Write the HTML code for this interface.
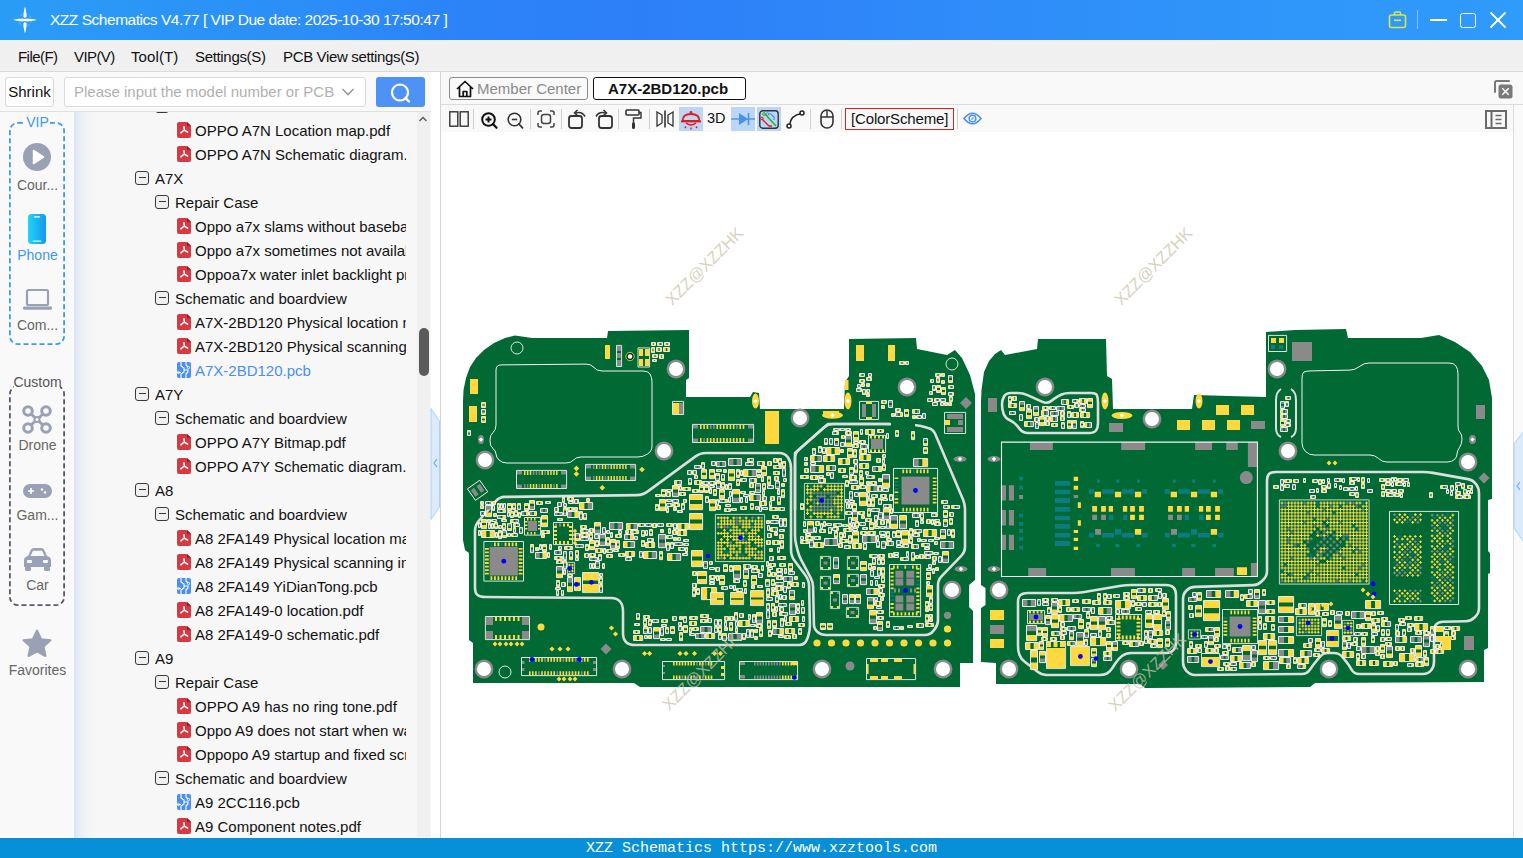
<!DOCTYPE html>
<html><head><meta charset="utf-8"><style>
*{margin:0;padding:0;box-sizing:border-box}
html,body{width:1523px;height:858px;overflow:hidden;background:#fff;font-family:"Liberation Sans",sans-serif;position:relative}
.a{position:absolute}
svg{position:absolute;overflow:visible}
#title{left:0;top:0;width:1523px;height:40px;background:linear-gradient(90deg,#2a9df6 0%,#2b8ff7 18%,#2c82f8 32%,#2d7ff8 42%,#2e86f9 55%,#2f8ef9 68%,#2f96fa 85%,#2f9bfb 100%)}
#ttl{left:50px;top:10.5px;color:#fff;font-size:15.5px;white-space:nowrap;letter-spacing:-0.47px}
#menu{left:0;top:40px;width:1523px;height:32px;background:#f0f0f0;border-bottom:1px solid #d9d9d9}
#menu span{position:absolute;top:8px;font-size:15px;color:#111;white-space:nowrap}
#leftp{left:0;top:72px;width:431px;height:766px;background:#f9f9f9}
#srch{left:0;top:72px;width:431px;height:40px;background:#f9f9f9;border-bottom:1px solid #e0e0e0}
.btn{position:absolute;background:#fff;border:1px solid #dadada;border-radius:3px}
.lbl{position:absolute;font-size:14px;color:#666;white-space:nowrap;text-align:center;width:75px;left:0}
#tree{left:74px;top:112px;width:357px;height:726px;overflow:hidden;background:linear-gradient(90deg,#dbe3f2 0px,#e9eef6 6px,#f3f4f7 14px,#f7f7f7 24px,#f7f7f7 100%)}
.r{position:absolute;height:24px;line-height:24px;font-size:15px;color:#111;white-space:nowrap;overflow:hidden}
.bx{position:absolute;width:14px;height:14px;border:1.4px solid #3a3a3a;border-radius:3px;background:#efefef}
.bx:after{content:"";position:absolute;left:2.5px;width:7px;top:5.2px;height:1.3px;background:#3a3a3a}
#status{left:0;top:838px;width:1523px;height:20px;background:#0790d8;color:#fff;font-family:"Liberation Mono",monospace;font-size:15px;line-height:22px;white-space:nowrap}
#tabs{left:441px;top:72px;width:1082px;height:33px;background:#f9f9f9;border-bottom:1px solid #dcdcdc}
#tools{left:441px;top:105px;width:1072px;height:27px;background:#f9f9f9}
.tab{position:absolute;top:5px;height:23px;border-radius:3px;font-size:15px;white-space:nowrap;line-height:21px}
.sep{position:absolute;top:4px;width:1px;height:20px;background:#d0d0d0}
.hl{position:absolute;top:2px;height:24px;background:#bcd6f7}
#tools > *, #tabs > * {margin-left:-1px}

</style></head><body>
<div id="title" class="a">
  <svg style="left:10px;top:2.7px" width="30" height="32" viewBox="0 0 30 32">
    <path d="M15 3.5 C16 7 16.5 10 16.6 13.8 L15 15 L13.4 13.8 C13.5 10 14 7 15 3.5Z M15 30.5 C14 27 13.5 24 13.4 20.2 L15 19 L16.6 20.2 C16.5 24 16 27 15 30.5Z M3 17 C7 16.2 10 15.8 13.4 15.6 L14.5 17 L13.4 18.4 C10 18.2 7 17.8 3 17Z M27 17 C23 17.8 20 18.2 16.6 18.4 L15.5 17 L16.6 15.6 C20 15.8 23 16.2 27 17Z" fill="#fff"/>
    <circle cx="15" cy="17" r="6.2" fill="none" stroke="rgba(255,255,255,.4)" stroke-width="0.9" stroke-dasharray="2.5 2.2"/>
    <circle cx="15" cy="17" r="1.3" fill="#fff"/>
  </svg>
  <div id="ttl" class="a">XZZ Schematics V4.77 [ VIP Due date: 2025-10-30 17:50:47 ]</div>
  <svg style="left:1385px;top:8px" width="26" height="24" viewBox="0 0 26 24">
    <rect x="4.5" y="7" width="16" height="12.5" rx="2" fill="none" stroke="#d7e84a" stroke-width="1.6"/>
    <path d="M9.5 7 V5 Q9.5 4 10.5 4 H14.5 Q15.5 4 15.5 5 V7" fill="none" stroke="#d7e84a" stroke-width="1.6"/>
    <line x1="9" y1="12.3" x2="16" y2="12.3" stroke="#d7e84a" stroke-width="1.6"/>
  </svg>
  <div class="a" style="left:1417px;top:10px;width:1px;height:19px;background:rgba(255,255,255,.45)"></div>
  <div class="a" style="left:1430px;top:19px;width:17px;height:2px;background:#fff"></div>
  <div class="a" style="left:1460px;top:12.5px;width:16px;height:15px;border:1.8px solid #fff;border-radius:2.5px"></div>
  <svg style="left:1489px;top:11px" width="18" height="18" viewBox="0 0 18 18"><path d="M1.5 1.5 L16.5 16.5 M16.5 1.5 L1.5 16.5" stroke="#fff" stroke-width="1.8"/></svg>
</div>
<div id="menu" class="a">
  <span style="left:18px;letter-spacing:-0.55px">File(F)</span>
  <span style="left:74px;letter-spacing:-0.6px">VIP(V)</span>
  <span style="left:131px;letter-spacing:0.1px">Tool(T)</span>
  <span style="left:195px;letter-spacing:-0.33px">Settings(S)</span>
  <span style="left:283px;letter-spacing:-0.35px">PCB View settings(S)</span>
</div>
<div id="leftp" class="a"></div>
<div id="srch" class="a">
  <div class="btn" style="left:5px;top:5px;width:49px;height:30px;font-size:15px;line-height:28px;text-align:center;color:#111">Shrink</div>
  <div class="btn" style="left:64px;top:5px;width:302px;height:30px;font-size:15px;line-height:28px;color:#b0b0b0;padding-left:9px;white-space:nowrap">Please input the model number or PCB</div>
  <svg style="left:341px;top:15px" width="14" height="10" viewBox="0 0 14 10"><path d="M1.5 2 L7 7.5 L12.5 2" fill="none" stroke="#999" stroke-width="1.6"/></svg>
  <div class="a" style="left:376px;top:5px;width:49px;height:30px;background:#4f92f5;border-radius:3px"></div>
  <svg style="left:389px;top:10px" width="24" height="22" viewBox="0 0 24 22"><circle cx="11" cy="10.5" r="8" fill="none" stroke="#fff" stroke-width="2.2"/><path d="M16.5 16 L20 19.5" stroke="#fff" stroke-width="2.4" stroke-linecap="round"/></svg>
</div>
<!-- sidebar -->
<svg style="left:0;top:0" width="75" height="858"><rect x="9.9" y="122.9" width="54.2" height="221.2" rx="8" fill="none" stroke="#3c9af2" stroke-width="1.8" stroke-dasharray="5 3"/><rect x="9.9" y="385.9" width="54.2" height="219.2" rx="8" fill="none" stroke="#555a66" stroke-width="1.8" stroke-dasharray="5 3"/></svg>
<div class="a" style="left:25px;top:115px;width:25px;height:15px;background:#f9f9f9"></div><div class="a" style="left:22px;top:113px;width:31px;height:18px;color:#3c9af2;font-size:14px;text-align:center;line-height:18px">VIP</div>
<svg style="left:23px;top:143px" width="28" height="28" viewBox="0 0 28 28"><circle cx="14" cy="14" r="14" fill="#9aa1b4"/><path d="M10.5 7.5 L20.5 14 L10.5 20.5Z" fill="#fff" stroke="#fff" stroke-width="1.5" stroke-linejoin="round"/></svg>
<div class="lbl" style="top:177px">Cour...</div>
<svg style="left:28px;top:214px" width="18" height="30" viewBox="0 0 18 30"><defs><linearGradient id="ph" x1="0" y1="0" x2="1" y2="0"><stop offset="0" stop-color="#22d4f5"/><stop offset="1" stop-color="#1597f0"/></linearGradient></defs><rect x="0" y="0" width="18" height="30" rx="3.5" fill="url(#ph)"/><rect x="6" y="2.2" width="6" height="1.4" rx=".7" fill="#fff"/><rect x="4.5" y="26.5" width="9" height="1.2" rx=".6" fill="#bff"/></svg>
<div class="lbl" style="top:247px;color:#3c9af2">Phone</div>
<svg style="left:23px;top:289px" width="29" height="22" viewBox="0 0 29 22"><rect x="4" y="1" width="21" height="15" rx="1.5" fill="none" stroke="#9aa1b4" stroke-width="2.2"/><rect x="0" y="17.5" width="29" height="3.2" rx="1.2" fill="#9aa1b4"/></svg>
<div class="lbl" style="top:317px">Com...</div>
<div class="a" style="left:14px;top:378px;width:46px;height:12px;background:#f9f9f9"></div>
<div class="lbl" style="top:374px;color:#555">Custom</div>
<svg style="left:22px;top:405px" width="30" height="29" viewBox="0 0 30 29"><g fill="none" stroke="#9aa1b4" stroke-width="3"><circle cx="6" cy="6" r="4.3"/><circle cx="24" cy="6" r="4.3"/><circle cx="6" cy="23" r="4.3"/><circle cx="24" cy="23" r="4.3"/><path d="M8.5 8.5 L21.5 20.5 M21.5 8.5 L8.5 20.5"/></g><circle cx="15" cy="14.5" r="3.5" fill="#9aa1b4"/><circle cx="15" cy="14.5" r="1.5" fill="#f9f9f9"/></svg>
<div class="lbl" style="top:437px">Drone</div>
<svg style="left:23px;top:484px" width="29" height="14" viewBox="0 0 29 14"><rect x="0" y="0" width="29" height="14" rx="7" fill="#9aa1b4"/><path d="M5 7 H11 M8 4 V10" stroke="#fff" stroke-width="1.6"/><circle cx="19" cy="5.5" r="1.2" fill="#fff"/><circle cx="22" cy="8.5" r="1.2" fill="#fff"/></svg>
<div class="lbl" style="top:507px">Gam...</div>
<svg style="left:23px;top:547px" width="29" height="25" viewBox="0 0 29 25"><path d="M5 9 L8 2.5 Q9 1 11 1 H18 Q20 1 21 2.5 L24 9 Q28 10 28 13 V20 H1 V13 Q1 10 5 9Z" fill="#9aa1b4"/><path d="M7.5 9 L10 3.8 H19 L21.5 9Z" fill="#f9f9f9"/><rect x="4" y="13" width="5" height="3" rx="1" fill="#f9f9f9"/><rect x="20" y="13" width="5" height="3" rx="1" fill="#f9f9f9"/><rect x="2" y="19" width="6" height="5" rx="1.5" fill="#9aa1b4"/><rect x="21" y="19" width="6" height="5" rx="1.5" fill="#9aa1b4"/></svg>
<div class="lbl" style="top:577px">Car</div>
<svg style="left:22px;top:629px" width="30" height="29" viewBox="0 0 30 29"><path d="M15 1.5 L19.2 10.2 L28.5 11.2 L21.6 17.6 L23.5 27 L15 22.3 L6.5 27 L8.4 17.6 L1.5 11.2 L10.8 10.2Z" fill="#9aa1b4" stroke="#9aa1b4" stroke-width="2" stroke-linejoin="round"/></svg>
<div class="lbl" style="top:662px">Favorites</div>
<div id="status" class="a"><span style="position:absolute;left:586px;top:0">XZZ Schematics https://www.xzztools.com</span></div>

<div id="tree" class="a">
<div class="bx" style="left:81px;top:-13px"></div>
<div class="r" style="left:101px;top:-17px;width:231px;color:#111">Schematic and boardview</div>
<svg style="left:103px;top:10px" width="14" height="16" viewBox="0 0 14 16"><path d="M2 0 H10 L14 4 V14 Q14 16 12 16 H2 Q0 16 0 14 V2 Q0 0 2 0Z" fill="#d53a44"/><path d="M10 0 L14 4 H11 Q10 4 10 3Z" fill="#8e1d26"/><path d="M7 4.8 L7.4 8.2 M7.2 8 L3.8 10.8 M7.2 8 L10.6 10.2" stroke="#fff" stroke-width="1.5" stroke-linecap="round" fill="none"/></svg>
<div class="r" style="left:121px;top:7px;width:211px;color:#111">OPPO A7N Location map.pdf</div>
<svg style="left:103px;top:34px" width="14" height="16" viewBox="0 0 14 16"><path d="M2 0 H10 L14 4 V14 Q14 16 12 16 H2 Q0 16 0 14 V2 Q0 0 2 0Z" fill="#d53a44"/><path d="M10 0 L14 4 H11 Q10 4 10 3Z" fill="#8e1d26"/><path d="M7 4.8 L7.4 8.2 M7.2 8 L3.8 10.8 M7.2 8 L10.6 10.2" stroke="#fff" stroke-width="1.5" stroke-linecap="round" fill="none"/></svg>
<div class="r" style="left:121px;top:31px;width:211px;color:#111">OPPO A7N Schematic diagram.pdf</div>
<div class="bx" style="left:61px;top:59px"></div>
<div class="r" style="left:81px;top:55px;width:251px;color:#111">A7X</div>
<div class="bx" style="left:81px;top:83px"></div>
<div class="r" style="left:101px;top:79px;width:231px;color:#111">Repair Case</div>
<svg style="left:103px;top:106px" width="14" height="16" viewBox="0 0 14 16"><path d="M2 0 H10 L14 4 V14 Q14 16 12 16 H2 Q0 16 0 14 V2 Q0 0 2 0Z" fill="#d53a44"/><path d="M10 0 L14 4 H11 Q10 4 10 3Z" fill="#8e1d26"/><path d="M7 4.8 L7.4 8.2 M7.2 8 L3.8 10.8 M7.2 8 L10.6 10.2" stroke="#fff" stroke-width="1.5" stroke-linecap="round" fill="none"/></svg>
<div class="r" style="left:121px;top:103px;width:211px;color:#111">Oppo a7x slams without baseband</div>
<svg style="left:103px;top:130px" width="14" height="16" viewBox="0 0 14 16"><path d="M2 0 H10 L14 4 V14 Q14 16 12 16 H2 Q0 16 0 14 V2 Q0 0 2 0Z" fill="#d53a44"/><path d="M10 0 L14 4 H11 Q10 4 10 3Z" fill="#8e1d26"/><path d="M7 4.8 L7.4 8.2 M7.2 8 L3.8 10.8 M7.2 8 L10.6 10.2" stroke="#fff" stroke-width="1.5" stroke-linecap="round" fill="none"/></svg>
<div class="r" style="left:121px;top:127px;width:211px;color:#111">Oppo a7x sometimes not available</div>
<svg style="left:103px;top:154px" width="14" height="16" viewBox="0 0 14 16"><path d="M2 0 H10 L14 4 V14 Q14 16 12 16 H2 Q0 16 0 14 V2 Q0 0 2 0Z" fill="#d53a44"/><path d="M10 0 L14 4 H11 Q10 4 10 3Z" fill="#8e1d26"/><path d="M7 4.8 L7.4 8.2 M7.2 8 L3.8 10.8 M7.2 8 L10.6 10.2" stroke="#fff" stroke-width="1.5" stroke-linecap="round" fill="none"/></svg>
<div class="r" style="left:121px;top:151px;width:211px;color:#111">Oppoa7x water inlet backlight problem</div>
<div class="bx" style="left:81px;top:179px"></div>
<div class="r" style="left:101px;top:175px;width:231px;color:#111">Schematic and boardview</div>
<svg style="left:103px;top:202px" width="14" height="16" viewBox="0 0 14 16"><path d="M2 0 H10 L14 4 V14 Q14 16 12 16 H2 Q0 16 0 14 V2 Q0 0 2 0Z" fill="#d53a44"/><path d="M10 0 L14 4 H11 Q10 4 10 3Z" fill="#8e1d26"/><path d="M7 4.8 L7.4 8.2 M7.2 8 L3.8 10.8 M7.2 8 L10.6 10.2" stroke="#fff" stroke-width="1.5" stroke-linecap="round" fill="none"/></svg>
<div class="r" style="left:121px;top:199px;width:211px;color:#111">A7X-2BD120 Physical location map.pdf</div>
<svg style="left:103px;top:226px" width="14" height="16" viewBox="0 0 14 16"><path d="M2 0 H10 L14 4 V14 Q14 16 12 16 H2 Q0 16 0 14 V2 Q0 0 2 0Z" fill="#d53a44"/><path d="M10 0 L14 4 H11 Q10 4 10 3Z" fill="#8e1d26"/><path d="M7 4.8 L7.4 8.2 M7.2 8 L3.8 10.8 M7.2 8 L10.6 10.2" stroke="#fff" stroke-width="1.5" stroke-linecap="round" fill="none"/></svg>
<div class="r" style="left:121px;top:223px;width:211px;color:#111">A7X-2BD120 Physical scanning image.pdf</div>
<svg style="left:103px;top:250px" width="14" height="16" viewBox="0 0 14 16"><rect x="0" y="0" width="14" height="16" rx="2" fill="#4a8ff5"/><path d="M4 0 V4 L7 6 V10 L4 12 V16 M9 0 V3 L11 5 M1 10.5 H4 M7 8 H11 V10 L9 12 V16" stroke="#fff" stroke-width="1.1" fill="none"/><circle cx="11.5" cy="5.5" r="1.1" fill="none" stroke="#fff" stroke-width=".9"/><circle cx="1.5" cy="10.5" r="1.1" fill="none" stroke="#fff" stroke-width=".9"/></svg>
<div class="r" style="left:121px;top:247px;width:211px;color:#4a8ff5">A7X-2BD120.pcb</div>
<div class="bx" style="left:61px;top:275px"></div>
<div class="r" style="left:81px;top:271px;width:251px;color:#111">A7Y</div>
<div class="bx" style="left:81px;top:299px"></div>
<div class="r" style="left:101px;top:295px;width:231px;color:#111">Schematic and boardview</div>
<svg style="left:103px;top:322px" width="14" height="16" viewBox="0 0 14 16"><path d="M2 0 H10 L14 4 V14 Q14 16 12 16 H2 Q0 16 0 14 V2 Q0 0 2 0Z" fill="#d53a44"/><path d="M10 0 L14 4 H11 Q10 4 10 3Z" fill="#8e1d26"/><path d="M7 4.8 L7.4 8.2 M7.2 8 L3.8 10.8 M7.2 8 L10.6 10.2" stroke="#fff" stroke-width="1.5" stroke-linecap="round" fill="none"/></svg>
<div class="r" style="left:121px;top:319px;width:211px;color:#111">OPPO A7Y Bitmap.pdf</div>
<svg style="left:103px;top:346px" width="14" height="16" viewBox="0 0 14 16"><path d="M2 0 H10 L14 4 V14 Q14 16 12 16 H2 Q0 16 0 14 V2 Q0 0 2 0Z" fill="#d53a44"/><path d="M10 0 L14 4 H11 Q10 4 10 3Z" fill="#8e1d26"/><path d="M7 4.8 L7.4 8.2 M7.2 8 L3.8 10.8 M7.2 8 L10.6 10.2" stroke="#fff" stroke-width="1.5" stroke-linecap="round" fill="none"/></svg>
<div class="r" style="left:121px;top:343px;width:211px;color:#111">OPPO A7Y Schematic diagram.pdf</div>
<div class="bx" style="left:61px;top:371px"></div>
<div class="r" style="left:81px;top:367px;width:251px;color:#111">A8</div>
<div class="bx" style="left:81px;top:395px"></div>
<div class="r" style="left:101px;top:391px;width:231px;color:#111">Schematic and boardview</div>
<svg style="left:103px;top:418px" width="14" height="16" viewBox="0 0 14 16"><path d="M2 0 H10 L14 4 V14 Q14 16 12 16 H2 Q0 16 0 14 V2 Q0 0 2 0Z" fill="#d53a44"/><path d="M10 0 L14 4 H11 Q10 4 10 3Z" fill="#8e1d26"/><path d="M7 4.8 L7.4 8.2 M7.2 8 L3.8 10.8 M7.2 8 L10.6 10.2" stroke="#fff" stroke-width="1.5" stroke-linecap="round" fill="none"/></svg>
<div class="r" style="left:121px;top:415px;width:211px;color:#111">A8 2FA149 Physical location map.pdf</div>
<svg style="left:103px;top:442px" width="14" height="16" viewBox="0 0 14 16"><path d="M2 0 H10 L14 4 V14 Q14 16 12 16 H2 Q0 16 0 14 V2 Q0 0 2 0Z" fill="#d53a44"/><path d="M10 0 L14 4 H11 Q10 4 10 3Z" fill="#8e1d26"/><path d="M7 4.8 L7.4 8.2 M7.2 8 L3.8 10.8 M7.2 8 L10.6 10.2" stroke="#fff" stroke-width="1.5" stroke-linecap="round" fill="none"/></svg>
<div class="r" style="left:121px;top:439px;width:211px;color:#111">A8 2FA149 Physical scanning image.pdf</div>
<svg style="left:103px;top:466px" width="14" height="16" viewBox="0 0 14 16"><rect x="0" y="0" width="14" height="16" rx="2" fill="#4a8ff5"/><path d="M4 0 V4 L7 6 V10 L4 12 V16 M9 0 V3 L11 5 M1 10.5 H4 M7 8 H11 V10 L9 12 V16" stroke="#fff" stroke-width="1.1" fill="none"/><circle cx="11.5" cy="5.5" r="1.1" fill="none" stroke="#fff" stroke-width=".9"/><circle cx="1.5" cy="10.5" r="1.1" fill="none" stroke="#fff" stroke-width=".9"/></svg>
<div class="r" style="left:121px;top:463px;width:211px;color:#111">A8 2FA149 YiDianTong.pcb</div>
<svg style="left:103px;top:490px" width="14" height="16" viewBox="0 0 14 16"><path d="M2 0 H10 L14 4 V14 Q14 16 12 16 H2 Q0 16 0 14 V2 Q0 0 2 0Z" fill="#d53a44"/><path d="M10 0 L14 4 H11 Q10 4 10 3Z" fill="#8e1d26"/><path d="M7 4.8 L7.4 8.2 M7.2 8 L3.8 10.8 M7.2 8 L10.6 10.2" stroke="#fff" stroke-width="1.5" stroke-linecap="round" fill="none"/></svg>
<div class="r" style="left:121px;top:487px;width:211px;color:#111">A8 2FA149-0 location.pdf</div>
<svg style="left:103px;top:514px" width="14" height="16" viewBox="0 0 14 16"><path d="M2 0 H10 L14 4 V14 Q14 16 12 16 H2 Q0 16 0 14 V2 Q0 0 2 0Z" fill="#d53a44"/><path d="M10 0 L14 4 H11 Q10 4 10 3Z" fill="#8e1d26"/><path d="M7 4.8 L7.4 8.2 M7.2 8 L3.8 10.8 M7.2 8 L10.6 10.2" stroke="#fff" stroke-width="1.5" stroke-linecap="round" fill="none"/></svg>
<div class="r" style="left:121px;top:511px;width:211px;color:#111">A8 2FA149-0 schematic.pdf</div>
<div class="bx" style="left:61px;top:539px"></div>
<div class="r" style="left:81px;top:535px;width:251px;color:#111">A9</div>
<div class="bx" style="left:81px;top:563px"></div>
<div class="r" style="left:101px;top:559px;width:231px;color:#111">Repair Case</div>
<svg style="left:103px;top:586px" width="14" height="16" viewBox="0 0 14 16"><path d="M2 0 H10 L14 4 V14 Q14 16 12 16 H2 Q0 16 0 14 V2 Q0 0 2 0Z" fill="#d53a44"/><path d="M10 0 L14 4 H11 Q10 4 10 3Z" fill="#8e1d26"/><path d="M7 4.8 L7.4 8.2 M7.2 8 L3.8 10.8 M7.2 8 L10.6 10.2" stroke="#fff" stroke-width="1.5" stroke-linecap="round" fill="none"/></svg>
<div class="r" style="left:121px;top:583px;width:211px;color:#111">OPPO A9 has no ring tone.pdf</div>
<svg style="left:103px;top:610px" width="14" height="16" viewBox="0 0 14 16"><path d="M2 0 H10 L14 4 V14 Q14 16 12 16 H2 Q0 16 0 14 V2 Q0 0 2 0Z" fill="#d53a44"/><path d="M10 0 L14 4 H11 Q10 4 10 3Z" fill="#8e1d26"/><path d="M7 4.8 L7.4 8.2 M7.2 8 L3.8 10.8 M7.2 8 L10.6 10.2" stroke="#fff" stroke-width="1.5" stroke-linecap="round" fill="none"/></svg>
<div class="r" style="left:121px;top:607px;width:211px;color:#111">Oppo A9 does not start when water</div>
<svg style="left:103px;top:634px" width="14" height="16" viewBox="0 0 14 16"><path d="M2 0 H10 L14 4 V14 Q14 16 12 16 H2 Q0 16 0 14 V2 Q0 0 2 0Z" fill="#d53a44"/><path d="M10 0 L14 4 H11 Q10 4 10 3Z" fill="#8e1d26"/><path d="M7 4.8 L7.4 8.2 M7.2 8 L3.8 10.8 M7.2 8 L10.6 10.2" stroke="#fff" stroke-width="1.5" stroke-linecap="round" fill="none"/></svg>
<div class="r" style="left:121px;top:631px;width:211px;color:#111">Oppopo A9 startup and fixed screen</div>
<div class="bx" style="left:81px;top:659px"></div>
<div class="r" style="left:101px;top:655px;width:231px;color:#111">Schematic and boardview</div>
<svg style="left:103px;top:682px" width="14" height="16" viewBox="0 0 14 16"><rect x="0" y="0" width="14" height="16" rx="2" fill="#4a8ff5"/><path d="M4 0 V4 L7 6 V10 L4 12 V16 M9 0 V3 L11 5 M1 10.5 H4 M7 8 H11 V10 L9 12 V16" stroke="#fff" stroke-width="1.1" fill="none"/><circle cx="11.5" cy="5.5" r="1.1" fill="none" stroke="#fff" stroke-width=".9"/><circle cx="1.5" cy="10.5" r="1.1" fill="none" stroke="#fff" stroke-width=".9"/></svg>
<div class="r" style="left:121px;top:679px;width:211px;color:#111">A9 2CC116.pcb</div>
<svg style="left:103px;top:706px" width="14" height="16" viewBox="0 0 14 16"><path d="M2 0 H10 L14 4 V14 Q14 16 12 16 H2 Q0 16 0 14 V2 Q0 0 2 0Z" fill="#d53a44"/><path d="M10 0 L14 4 H11 Q10 4 10 3Z" fill="#8e1d26"/><path d="M7 4.8 L7.4 8.2 M7.2 8 L3.8 10.8 M7.2 8 L10.6 10.2" stroke="#fff" stroke-width="1.5" stroke-linecap="round" fill="none"/></svg>
<div class="r" style="left:121px;top:703px;width:211px;color:#111">A9 Component notes.pdf</div>
<div class="a" style="left:343px;top:0;width:13px;height:725px;background:#f0f0f0"></div>
<svg style="left:344px;top:3px" width="10" height="8" viewBox="0 0 10 8"><path d="M1.5 6 L5 2.5 L8.5 6" fill="none" stroke="#555" stroke-width="1.3"/></svg>
<div class="a" style="left:345px;top:216px;width:10px;height:48px;background:#5a5a5a;border-radius:5px"></div>
</div>
<!-- gap column and handle -->
<div class="a" style="left:431px;top:72px;width:9px;height:766px;background:#fff"></div>
<div class="a" style="left:440px;top:72px;width:1px;height:766px;background:#d4d4d4"></div>
<svg style="left:430px;top:408px" width="11" height="112" viewBox="0 0 11 112"><path d="M1 0.5 L9.5 13 V99 L1 111.5Z" fill="#dcebfc" stroke="#a9d2fa" stroke-width="1"/><path d="M7 51 L4 55 L7 59" fill="none" stroke="#6aaef5" stroke-width="1.2"/></svg>
<div id="tabs" class="a">
  <div class="tab" style="left:9px;width:139px;border:1px solid #8a8a8a;color:#8a8a8a;background:#f9f9f9"></div>
  <svg style="left:15px;top:8px" width="20" height="18" viewBox="0 0 20 18"><path d="M2 9 L10 1.5 L18 9 M4.5 7 V16.5 H15.5 V7 M8.2 16.5 V11.5 H11.8 V16.5" fill="none" stroke="#111" stroke-width="1.7" stroke-linejoin="round"/></svg>
  <div class="a" style="left:37px;top:8px;font-size:15px;color:#8a8a8a;white-space:nowrap">Member Center</div>
  <div class="tab" style="left:153px;width:153px;border:1.3px solid #111;background:#fff"></div>
  <div class="a" style="left:168px;top:8px;font-size:15px;font-weight:bold;color:#111;white-space:nowrap">A7X-2BD120.pcb</div>
  <svg style="left:1054px;top:8px" width="19" height="19" viewBox="0 0 19 19"><path d="M1 12 V2.5 Q1 1 2.5 1 H15" fill="none" stroke="#7a7a7a" stroke-width="2" stroke-linecap="round"/><rect x="4.5" y="4.5" width="14" height="14" rx="2.5" fill="#7a7a7a"/><path d="M8.3 8.3 L14.7 14.7 M14.7 8.3 L8.3 14.7" stroke="#fff" stroke-width="1.5"/></svg>
</div>
<div class="a" style="left:1513px;top:105px;width:1px;height:733px;background:#dcdcdc"></div>
<div class="a" style="left:1514px;top:105px;width:9px;height:733px;background:#fafafa"></div>
<svg style="left:1513px;top:431px" width="11" height="111" viewBox="0 0 11 111"><path d="M10.5 0.5 L1 13 V97 L10.5 110.5" fill="#dcebfc" stroke="#a9d2fa" stroke-width="1"/><path d="M7 51 L4 55 L7 59" fill="none" stroke="#6aaef5" stroke-width="1.2"/></svg>
<div id="tools" class="a">
  <svg style="left:9px;top:6px" width="20" height="16" viewBox="0 0 20 16"><rect x="0.8" y="0.8" width="8" height="14.4" fill="none" stroke="#333" stroke-width="1.4"/><rect x="11.2" y="0.8" width="8" height="14.4" fill="none" stroke="#333" stroke-width="1.4"/></svg>
  <div class="sep" style="left:33px"></div>
  <svg style="left:41px;top:7px" width="17" height="18" viewBox="0 0 17 18"><circle cx="7.5" cy="7.5" r="6.3" fill="none" stroke="#111" stroke-width="2"/><path d="M4.5 7.5 H10.5 M7.5 4.5 V10.5" stroke="#111" stroke-width="2"/><path d="M12 12 L15.5 15.8" stroke="#111" stroke-width="2.2" stroke-linecap="round"/></svg>
  <svg style="left:67px;top:7px" width="17" height="18" viewBox="0 0 17 18"><circle cx="7.5" cy="7.5" r="6.3" fill="none" stroke="#333" stroke-width="1.6"/><path d="M4.8 7.5 H10.2" stroke="#333" stroke-width="1.6"/><path d="M12 12 L15.5 15.8" stroke="#333" stroke-width="1.8" stroke-linecap="round"/></svg>
  <div class="sep" style="left:90px"></div>
  <svg style="left:97px;top:5px" width="18" height="18" viewBox="0 0 18 18"><path d="M1 5 V3 Q1 1 3 1 H5 M13 1 H15 Q17 1 17 3 V5 M17 13 V15 Q17 17 15 17 H13 M5 17 H3 Q1 17 1 15 V13" fill="none" stroke="#444" stroke-width="1.5"/><rect x="4.5" y="4.5" width="9" height="9" rx="2.5" fill="none" stroke="#444" stroke-width="1.5"/></svg>
  <div class="sep" style="left:121px"></div>
  <svg style="left:128px;top:3px" width="19" height="21" viewBox="0 0 19 21"><rect x="1" y="8" width="13" height="12" rx="2.5" fill="none" stroke="#333" stroke-width="1.8"/><path d="M7.5 5 Q14 3 17 8.5" fill="none" stroke="#333" stroke-width="1.6"/><path d="M9.5 2 L6.5 5 L9.5 7.5" fill="none" stroke="#333" stroke-width="1.6"/></svg>
  <svg style="left:154px;top:3px" width="19" height="21" viewBox="0 0 19 21"><rect x="5" y="8" width="13" height="12" rx="2.5" fill="none" stroke="#333" stroke-width="1.8"/><path d="M11.5 5 Q5 3 2 8.5" fill="none" stroke="#333" stroke-width="1.6"/><path d="M9.5 2 L12.5 5 L9.5 7.5" fill="none" stroke="#333" stroke-width="1.6"/></svg>
  <div class="sep" style="left:178px"></div>
  <svg style="left:185px;top:4px" width="17" height="21" viewBox="0 0 17 21"><rect x="1" y="1" width="13" height="5" rx="1" fill="none" stroke="#333" stroke-width="1.6"/><path d="M14 3.5 H16 V9 H8.5 V13" fill="none" stroke="#333" stroke-width="1.4"/><rect x="7" y="13" width="3" height="7" rx="1.5" fill="#333"/></svg>
  <div class="sep" style="left:209px"></div>
  <svg style="left:216px;top:5px" width="18" height="18" viewBox="0 0 18 18"><path d="M1 2 L6 5 V13 L1 16Z M17 2 L12 5 V13 L17 16Z" fill="none" stroke="#333" stroke-width="1.3"/><path d="M9 0.5 V17.5" stroke="#333" stroke-width="1.6"/></svg>
  <div class="hl" style="left:239px;width:24px"></div>
  <svg style="left:240px;top:4px" width="22" height="22" viewBox="0 0 22 22"><path d="M2.5 12 Q2.5 5 11 5 Q19.5 5 19.5 12 Z" fill="none" stroke="#e41c1c" stroke-width="1.8"/><path d="M1 12.5 H21" stroke="#e41c1c" stroke-width="1.8"/><circle cx="11" cy="3.5" r="1.4" fill="#e41c1c"/><path d="M6 14 Q11 18 16 14" fill="none" stroke="#e41c1c" stroke-width="1.6"/><path d="M6 17.5 L5 19 M11 18.5 V20.5 M16 17.5 L17 19" stroke="#e41c1c" stroke-width="1.4"/></svg>
  <div class="a" style="left:267px;top:5px;font-size:14.5px;color:#111">3D</div>
  <div class="hl" style="left:291px;width:24px"></div>
  <svg style="left:291px;top:7px" width="24" height="14" viewBox="0 0 24 14"><path d="M0 7 H24" stroke="#4a8ff5" stroke-width="1.4"/><path d="M8 1 L17 7 L8 13Z" fill="#4a8ff5"/><path d="M17.5 1 V13" stroke="#4a8ff5" stroke-width="1.6"/></svg>
  <div class="hl" style="left:317px;width:24px"></div>
  <svg style="left:319px;top:5px" width="20" height="19" viewBox="0 0 20 19"><rect x="0.8" y="0.8" width="18.4" height="17.4" rx="3" fill="none" stroke="#333" stroke-width="1.4"/><path d="M6 4 L17 16" stroke="#1fb51f" stroke-width="1.4"/><path d="M3 9 L10 16 H13" fill="none" stroke="#e41c1c" stroke-width="1.3"/><path d="M9 4 H12 L15 7 V10" fill="none" stroke="#4a8ff5" stroke-width="1.2"/><circle cx="5" cy="4" r="1.4" fill="none" stroke="#1fb51f" stroke-width="1"/><circle cx="3" cy="8.5" r="1.3" fill="none" stroke="#e41c1c" stroke-width="1"/><circle cx="8.5" cy="4" r="1.3" fill="none" stroke="#4a8ff5" stroke-width="1"/></svg>
  <svg style="left:346px;top:5px" width="19" height="19" viewBox="0 0 19 19"><path d="M3.5 15.5 Q4.5 5 15.5 3.5" fill="none" stroke="#222" stroke-width="1.6"/><circle cx="3" cy="16" r="2" fill="#fff" stroke="#222" stroke-width="1.5"/><circle cx="16" cy="3" r="2" fill="#fff" stroke="#222" stroke-width="1.5"/></svg>
  <div class="sep" style="left:370px"></div>
  <svg style="left:380px;top:4px" width="14" height="20" viewBox="0 0 14 20"><rect x="1" y="1" width="12" height="18" rx="6" fill="none" stroke="#333" stroke-width="1.6"/><path d="M1 8 H13 M7 1 V8" stroke="#333" stroke-width="1.4"/></svg>
  <div class="sep" style="left:401px"></div>
  <div class="a" style="left:405px;top:3px;width:109px;height:22px;border:1.5px solid #e02020"></div>
  <div class="a" style="left:411px;top:5px;font-size:15px;color:#111;letter-spacing:-0.15px;white-space:nowrap">[ColorScheme]</div>
  <div class="sep" style="left:517px"></div>
  <svg style="left:523px;top:6px" width="19" height="15" viewBox="0 0 19 15"><path d="M1 7.5 Q9.5 -3 18 7.5 Q9.5 18 1 7.5Z" fill="none" stroke="#4a8ff5" stroke-width="1.6"/><circle cx="9.5" cy="7.5" r="3.3" fill="none" stroke="#4a8ff5" stroke-width="1.5"/><path d="M8.5 8.5 L10.5 6.5" stroke="#4a8ff5" stroke-width="1.2"/></svg>
  <svg style="left:1045px;top:5px" width="22" height="19" viewBox="0 0 22 19"><rect x="1" y="1" width="20" height="17" fill="none" stroke="#6a6a6a" stroke-width="2"/><path d="M6.5 1 V18" stroke="#6a6a6a" stroke-width="2"/><path d="M10.5 5.5 H16.5 M10.5 9.5 H16.5 M10.5 13.5 H16.5" stroke="#6a6a6a" stroke-width="1.6"/></svg>
</div>

<div class="a" style="left:441px;top:132px;width:1072px;height:706px;overflow:hidden"><div class="a" style="left:-441px;top:-132px;width:1523px;height:858px"><svg style="left:0;top:0" width="1523" height="858" viewBox="0 0 1523 858"><path d="M463 402 L463.5 390 L466 378 L470 367 L476 358 L484 350 L494 343 L505 338 L515 335.5 L532 338 L607 338 L608 331 L689 330 L689 378 L686 380 L686 397 L750 397 L753 392 L759 393 L760 409 L844 409 L845 382 L849 376 L849 339 L916 338 L917 349 L947 355 L955 350 L962 358 L970 375 L975 394 L975 580 L969 585 L969 607 L973 611 L973 663 L960 663 L960 687 L640 687 L634 683 L473 683 L473 643 L469 640 L469 553 L465 550 L463 540 Z" fill="#006934"/><path d="M981 402 L981.5 390 L984 372 L989 361 L995 354 L1001 350 L1005 355 L1037 349 L1038 339 L1106 339 L1107 376 L1112 379 L1113 409 L1192 409 L1194 395 L1266 397 L1266 332 L1295 330 L1346 329 L1348 338 L1421 338 L1439 335 L1455 342 L1470 352 L1482 366 L1489 380 L1492 398 L1492 499 L1488 500 L1488 551 L1490 553 L1490 573 L1488 574 L1488 648 L1484 650 L1484 682 L1315 683 L1310 687 L1145 688 L1140 684 L996 684 L996 663 L981 662 L981 608 L985.5 605 L985.5 588 L981 585 Z" fill="#006934"/><path d="M496 370 Q496 365 501 364.9 L586 364.1 Q591 364 594 367.5 L594 367.5 Q597 371 602 371 L643 371 Q648 371 650 374 L650 374 Q652 377 652 382 L652 446 Q652 451 647.8 453.8 L647.2 454.2 Q643 457 638 457 L581 457 Q576 457 573.5 460 L573.5 460 Q571 463 566 463 L507 463 Q502 463 499 460 L499 460 Q496 457 496 454 L496 454 Q496 451 493 448.5 L493 448.5 Q490 446 490 441 L490 440 Q490 435 493 432.5 L493 432.5 Q496 430 496 425 Z" fill="none" stroke="#f4f4f4" stroke-width="1"/><circle cx="517" cy="348" r="6" fill="none" stroke="#f4f4f4" stroke-width="0.9"/><path d="M487 511.5 Q491 507 494.7 502.3 L495.3 501.7 Q499 497 505 496.9 L637 495.1 Q643 495 647.8 491.4 L695.2 456.6 Q700 453 706 453 L779 453 Q785 453 788 457.5 L788 457.5 Q791 462 791 468 L791 550 Q791 556 794.6 560.8 L805.4 575.2 Q809 580 809.1 586 L809.9 625 Q810 631 808 636.7 L807 639.3 Q805 645 799 645 L635 645 Q629 645 626 642 L626 642 Q623 639 623 633 L623 611 Q623 605 620 601.5 L620 601.5 Q617 598 611 598 L486 597 Q480 597 477.5 595 L477.5 595 Q475 593 475 587 L475 531 Q475 525 479 520.5 Z" fill="none" stroke="#dedede" stroke-width="2.6"/><path d="M795 510 L795 453 L828 424 L890 424" fill="none" stroke="#dedede" stroke-width="2.6" stroke-linejoin="round"/><path d="M911 424.8 Q916 425 920.9 426.1 L928.1 427.9 Q933 429 935 433.6 L963 499.4 Q965 504 965 509 L965 547 Q965 552 961.5 555.6 L941.5 576.4 Q938 580 938 585 L938 620 Q938 625 934.9 628.9 L933.1 631.1 Q930 635 925 635 L826 635 Q821 635 817.5 632 L817.5 632 Q814 629 813.9 624 L813.1 587 Q813 582 810.6 577.6 L801.4 560.4 Q799 556 797.8 551.1 L796.2 544.9 Q795 540 795 535 L795 458 Q795 453 798.8 449.7 L824.2 427.3 Q828 424 833 424 L885 424 Q890 424 895 424.2 Z" fill="none" stroke="#dedede" stroke-width="2.6"/><path d="M891 421h24v6h-24z" fill="#006934"/><circle cx="676" cy="369" r="8.2" fill="#fff" stroke="#8a8a8a" stroke-width="2.4"/><circle cx="485" cy="460" r="8.2" fill="#fff" stroke="#8a8a8a" stroke-width="2.4"/><circle cx="664" cy="451" r="8.2" fill="#fff" stroke="#8a8a8a" stroke-width="2.4"/><circle cx="800" cy="418" r="8.2" fill="#fff" stroke="#8a8a8a" stroke-width="2.4"/><circle cx="907" cy="387" r="8.2" fill="#fff" stroke="#8a8a8a" stroke-width="2.4"/><circle cx="952" cy="590" r="8.2" fill="#fff" stroke="#8a8a8a" stroke-width="2.4"/><circle cx="484" cy="669" r="8.2" fill="#fff" stroke="#8a8a8a" stroke-width="2.4"/><circle cx="622" cy="669" r="8.2" fill="#fff" stroke="#8a8a8a" stroke-width="2.4"/><circle cx="822" cy="669" r="8.2" fill="#fff" stroke="#8a8a8a" stroke-width="2.4"/><circle cx="943" cy="669" r="8.2" fill="#fff" stroke="#8a8a8a" stroke-width="2.4"/><circle cx="952" cy="364" r="6" fill="none" stroke="#f4f4f4" stroke-width="0.9"/><circle cx="505" cy="672" r="6" fill="none" stroke="#f4f4f4" stroke-width="0.9"/><circle cx="850" cy="666" r="4.5" fill="#8a8a8a"/><path d="M517 471h5v3.5h-5zM561 471h5v3.5h-5zM517 484.5h5v3.5h-5zM561 484.5h5v3.5h-5zM524 484h1.5v4h-1.5zM526.9 484h1.5v4h-1.5zM532.8 471h1.5v4h-1.5zM535.7 471h1.5v4h-1.5zM538.6 471h1.5v4h-1.5zM538.6 484h1.5v4h-1.5zM544.4 471h1.5v4h-1.5zM553.2 484h1.5v4h-1.5zM586 465h5v3.5h-5zM630 465h5v3.5h-5zM586 476.5h5v3.5h-5zM630 476.5h5v3.5h-5zM593 465h1.5v4h-1.5zM593 476h1.5v4h-1.5zM598.8 465h1.5v4h-1.5zM604.7 476h1.5v4h-1.5zM607.6 465h1.5v4h-1.5zM693 425h5v3.5h-5zM748 425h5v3.5h-5zM693 438.5h5v3.5h-5zM748 438.5h5v3.5h-5zM703.3 438h1.6v4h-1.6zM709.9 425h1.6v4h-1.6zM713.1 425h1.6v4h-1.6zM736.1 425h1.6v4h-1.6zM486 617h7v8h-7zM522 617h7v8h-7zM486 631h7v8h-7zM522 631h7v8h-7z" fill="#8a8a8a"/><path d="M524 471h1.5v4h-1.5zM526.9 471h1.5v4h-1.5zM529.8 471h1.5v4h-1.5zM529.8 484h1.5v4h-1.5zM532.8 484h1.5v4h-1.5zM535.7 484h1.5v4h-1.5zM541.5 471h1.5v4h-1.5zM541.5 484h1.5v4h-1.5zM544.4 484h1.5v4h-1.5zM547.3 471h1.5v4h-1.5zM547.3 484h1.5v4h-1.5zM550.2 471h1.5v4h-1.5zM550.2 484h1.5v4h-1.5zM553.2 471h1.5v4h-1.5zM556.1 471h1.5v4h-1.5zM556.1 484h1.5v4h-1.5zM595.9 465h1.5v4h-1.5zM595.9 476h1.5v4h-1.5zM598.8 476h1.5v4h-1.5zM601.8 465h1.5v4h-1.5zM601.8 476h1.5v4h-1.5zM604.7 465h1.5v4h-1.5zM607.6 476h1.5v4h-1.5zM610.5 465h1.5v4h-1.5zM610.5 476h1.5v4h-1.5zM613.4 465h1.5v4h-1.5zM613.4 476h1.5v4h-1.5zM616.3 465h1.5v4h-1.5zM616.3 476h1.5v4h-1.5zM619.2 465h1.5v4h-1.5zM619.2 476h1.5v4h-1.5zM622.2 465h1.5v4h-1.5zM622.2 476h1.5v4h-1.5zM625.1 465h1.5v4h-1.5zM625.1 476h1.5v4h-1.5zM700 425h1.6v4h-1.6zM700 438h1.6v4h-1.6zM703.3 425h1.6v4h-1.6zM706.6 425h1.6v4h-1.6zM706.6 438h1.6v4h-1.6zM709.9 438h1.6v4h-1.6zM713.1 438h1.6v4h-1.6zM716.4 425h1.6v4h-1.6zM716.4 438h1.6v4h-1.6zM719.7 425h1.6v4h-1.6zM719.7 438h1.6v4h-1.6zM723 425h1.6v4h-1.6zM723 438h1.6v4h-1.6zM726.3 425h1.6v4h-1.6zM726.3 438h1.6v4h-1.6zM729.6 425h1.6v4h-1.6zM729.6 438h1.6v4h-1.6zM732.9 425h1.6v4h-1.6zM732.9 438h1.6v4h-1.6zM736.1 438h1.6v4h-1.6zM739.4 425h1.6v4h-1.6zM739.4 438h1.6v4h-1.6zM742.7 425h1.6v4h-1.6zM742.7 438h1.6v4h-1.6zM495 617h2v4h-2zM495 635h2v4h-2zM499.5 617h2v4h-2zM499.5 635h2v4h-2zM504 617h2v4h-2zM504 635h2v4h-2zM508.5 617h2v4h-2zM508.5 635h2v4h-2zM513 617h2v4h-2zM513 635h2v4h-2zM517.5 617h2v4h-2zM517.5 635h2v4h-2z" fill="#ffd93d"/><path d="M516.5 470.4h50.1v18.1h-50.1zM585.5 464.4h50.1v16.1h-50.1zM692.5 424.4h61.1v18.1h-61.1zM485.4 616.5h44.1v23.1h-44.1z" fill="none" stroke="#f4f4f4" stroke-width="0.9"/><path d="M495 641.6 L497.4 644 L495 646.4 L492.6 644 Z" fill="#ffd93d"/><path d="M500 641.6 L502.4 644 L500 646.4 L497.6 644 Z" fill="#ffd93d"/><path d="M506 641.6 L508.4 644 L506 646.4 L503.6 644 Z" fill="#ffd93d"/><path d="M511 641.6 L513.4 644 L511 646.4 L508.6 644 Z" fill="#ffd93d"/><path d="M517 641.6 L519.4 644 L517 646.4 L514.6 644 Z" fill="#ffd93d"/><path d="M522 641.6 L524.4 644 L522 646.4 L519.6 644 Z" fill="#ffd93d"/><path d="M529 658h1.6v3.8h-1.6zM529 671.2h1.6v3.8h-1.6zM532 671.2h1.6v3.8h-1.6zM535.1 658h1.6v3.8h-1.6zM535.1 671.2h1.6v3.8h-1.6zM538.1 658h1.6v3.8h-1.6zM541.2 658h1.6v3.8h-1.6zM541.2 671.2h1.6v3.8h-1.6zM544.2 671.2h1.6v3.8h-1.6zM547.3 658h1.6v3.8h-1.6zM547.3 671.2h1.6v3.8h-1.6zM550.4 658h1.6v3.8h-1.6zM550.4 671.2h1.6v3.8h-1.6zM553.4 658h1.6v3.8h-1.6zM553.4 671.2h1.6v3.8h-1.6zM556.5 658h1.6v3.8h-1.6zM559.5 658h1.6v3.8h-1.6zM559.5 671.2h1.6v3.8h-1.6zM562.5 671.2h1.6v3.8h-1.6zM565.6 658h1.6v3.8h-1.6zM565.6 671.2h1.6v3.8h-1.6zM568.6 658h1.6v3.8h-1.6zM568.6 671.2h1.6v3.8h-1.6zM571.7 658h1.6v3.8h-1.6zM571.7 671.2h1.6v3.8h-1.6zM574.8 671.2h1.6v3.8h-1.6zM577.8 658h1.6v3.8h-1.6zM577.8 671.2h1.6v3.8h-1.6zM580.9 658h1.6v3.8h-1.6zM583.9 658h1.6v3.8h-1.6zM583.9 671.2h1.6v3.8h-1.6zM587 658h1.6v3.8h-1.6zM587 671.2h1.6v3.8h-1.6z" fill="#ffd93d"/><path d="M532 658h1.6v3.8h-1.6zM538.1 671.2h1.6v3.8h-1.6zM544.2 658h1.6v3.8h-1.6zM556.5 671.2h1.6v3.8h-1.6zM562.5 658h1.6v3.8h-1.6zM574.8 658h1.6v3.8h-1.6zM580.9 671.2h1.6v3.8h-1.6zM522 661h2.5v3h-2.5zM522 668h2.5v3h-2.5zM593 661h3v3h-3zM593 668h3v3h-3z" fill="#8a8a8a"/><path d="M521.5 657.5h75.1v18.1h-75.1z" fill="none" stroke="#f4f4f4" stroke-width="0.9"/><circle cx="532" cy="659.5" r="2.4" fill="#0000ff"/><circle cx="579.4" cy="659.5" r="2.4" fill="#0000ff"/><path d="M559 676.6 L561.4 679 L559 681.4 L556.6 679 Z" fill="#ffd93d"/><path d="M564 676.6 L566.4 679 L564 681.4 L561.6 679 Z" fill="#ffd93d"/><path d="M570 676.6 L572.4 679 L570 681.4 L567.6 679 Z" fill="#ffd93d"/><path d="M575 676.6 L577.4 679 L575 681.4 L572.6 679 Z" fill="#ffd93d"/><path d="M611.5 625.4 L614.1 628 L611.5 630.6 L608.9 628 Z" fill="#ffd93d"/><path d="M615.5 631.4 L618.1 634 L615.5 636.6 L612.9 634 Z" fill="#ffd93d"/><path d="M673 662h1.6v3.5h-1.6zM673 675.5h1.6v3.5h-1.6zM675.9 662h1.6v3.5h-1.6zM675.9 675.5h1.6v3.5h-1.6zM678.8 662h1.6v3.5h-1.6zM678.8 675.5h1.6v3.5h-1.6zM681.7 662h1.6v3.5h-1.6zM684.6 662h1.6v3.5h-1.6zM684.6 675.5h1.6v3.5h-1.6zM687.5 662h1.6v3.5h-1.6zM690.4 662h1.6v3.5h-1.6zM690.4 675.5h1.6v3.5h-1.6zM693.3 662h1.6v3.5h-1.6zM699.1 662h1.6v3.5h-1.6zM699.1 675.5h1.6v3.5h-1.6zM702 662h1.6v3.5h-1.6zM704.9 675.5h1.6v3.5h-1.6zM707.8 662h1.6v3.5h-1.6zM707.8 675.5h1.6v3.5h-1.6zM710.7 662h1.6v3.5h-1.6zM710.7 675.5h1.6v3.5h-1.6zM721 666h3v3h-3zM721 673h3v3h-3zM782 662h1.6v3.5h-1.6zM782 675.5h1.6v3.5h-1.6zM784.8 662h1.6v3.5h-1.6zM784.8 675.5h1.6v3.5h-1.6zM787.6 662h1.6v3.5h-1.6zM787.6 675.5h1.6v3.5h-1.6zM790.4 662h1.6v3.5h-1.6zM790.4 675.5h1.6v3.5h-1.6zM793.2 662h1.6v3.5h-1.6zM793.2 675.5h1.6v3.5h-1.6zM796 662h1.6v3.5h-1.6zM796 675.5h1.6v3.5h-1.6zM791 662h6v3h-6z" fill="#ffd93d"/><path d="M681.7 675.5h1.6v3.5h-1.6zM687.5 675.5h1.6v3.5h-1.6zM693.3 675.5h1.6v3.5h-1.6zM696.2 662h1.6v3.5h-1.6zM696.2 675.5h1.6v3.5h-1.6zM702 675.5h1.6v3.5h-1.6zM704.9 662h1.6v3.5h-1.6zM663 665h2v2h-2zM663 672h2v2h-2zM754 662h1.6v3.5h-1.6zM754 675.5h1.6v3.5h-1.6zM756.8 662h1.6v3.5h-1.6zM756.8 675.5h1.6v3.5h-1.6zM759.6 662h1.6v3.5h-1.6zM759.6 675.5h1.6v3.5h-1.6zM762.4 662h1.6v3.5h-1.6zM762.4 675.5h1.6v3.5h-1.6zM765.2 662h1.6v3.5h-1.6zM765.2 675.5h1.6v3.5h-1.6zM768 662h1.6v3.5h-1.6zM768 675.5h1.6v3.5h-1.6zM770.8 662h1.6v3.5h-1.6zM770.8 675.5h1.6v3.5h-1.6zM773.6 662h1.6v3.5h-1.6zM773.6 675.5h1.6v3.5h-1.6zM776.4 662h1.6v3.5h-1.6zM776.4 675.5h1.6v3.5h-1.6zM779.2 662h1.6v3.5h-1.6zM779.2 675.5h1.6v3.5h-1.6zM740 662h5v3h-5zM740 675h5v3.5h-5z" fill="#8a8a8a"/><path d="M662.5 661.5h62.1v18.1h-62.1zM739.5 661.5h58.1v18.1h-58.1z" fill="none" stroke="#f4f4f4" stroke-width="0.9"/><circle cx="794.5" cy="677.5" r="2.3" fill="#0000ff"/><path d="M870 659h8v3h-8zM881 659h7v3h-7zM894 659h8v3h-8zM870 676h8v3h-8zM881 676h7v3h-7zM894 676h8v3h-8zM867 664h1.6v10h-1.6zM913.5 664h1.6v10h-1.6zM605 345h5v14h-5zM765 411h14v33h-14zM856 345h8v16h-8zM888 345h7v16h-7zM470 379h8v15h-8zM469 406h8v16h-8zM481.9 402.9h3.1v1.5h-3.1zM481.9 405.6h3.1v1.5h-3.1zM481.9 412.6h3.1v1.5h-3.1zM481.9 416.9h3.1v1.8h-3.1zM481.9 420.2h3.1v1.8h-3.1zM467.9 430.9h2.1v1.5h-2.1z" fill="#ffd93d"/><path d="M481.9 409.9h3.1v1.5h-3.1zM467.9 433.6h2.1v1.5h-2.1z" fill="#8a8a8a"/><path d="M866.5 658.5h49.1v21.1h-49.1z" fill="none" stroke="#f4f4f4" stroke-width="0.9"/><path d="M481.5 402.5h4v5h-4zM481.5 409.5h4v5h-4zM481.5 416.5h4v6h-4zM467.5 430.5h3v5h-3z" fill="none" stroke="#f4f4f4" stroke-width="0.95"/><ellipse cx="481" cy="439.5" rx="3" ry="4.5" fill="#8a8a8a"/><path d="M481 437.3 L483.2 439.5 L481 441.7 L478.8 439.5 Z" fill="#ffffff"/><path d="M823 411h16v6h-16zM824 412h14v4h-14zM673 403h7v11h-7zM845 380h3.5v10h-3.5zM860 373.9h1.5v2.1h-1.5zM867 389.9h1.2v2.1h-1.2zM867 383.9h1.2v2.1h-1.2zM867.8 383.9h1.2v2.1h-1.2zM860 379.9h1.5v2.1h-1.5zM862.6 379.9h1.5v2.1h-1.5zM862 383.9h1.2v2.1h-1.2zM862.8 383.9h1.2v2.1h-1.2zM867 377.9h1.5v2.1h-1.5zM869.6 377.9h1.5v2.1h-1.5zM863 392.6h2.1v1.5h-2.1zM867 393.9h1.2v2.1h-1.2zM867.8 393.9h1.2v2.1h-1.2zM859.6 388.9h1.5v2.1h-1.5zM905 409.9h3.1v2.2h-3.1zM905 413.9h3.1v2.2h-3.1zM899.9 412.9h2.2v3.1h-2.2zM913 409.9h2.2v3.1h-2.2zM892 413.9h1.2v2.1h-1.2zM892.8 413.9h1.2v2.1h-1.2zM913 415.9h1.2v2.1h-1.2zM913.8 415.9h1.2v2.1h-1.2zM917 415.9h1.5v2.1h-1.5zM896 408.9h1.5v2.1h-1.5zM898.6 408.9h1.5v2.1h-1.5zM941 402.9h1.2v2.1h-1.2zM942 387.9h3.1v2.2h-3.1zM942 391.9h3.1v2.2h-3.1zM935 398.9h1.5v2.1h-1.5zM937 385.9h3.1v2.2h-3.1zM937 389.9h3.1v2.2h-3.1zM937 377.9h2.1v1.5h-2.1zM937 380.6h2.1v1.5h-2.1zM936 373.9h1.5v2.1h-1.5zM938.6 373.9h1.5v2.1h-1.5zM933 388.6h2.1v1.5h-2.1zM949 379.9h3.1v2.2h-3.1zM942 380.9h1.2v2.1h-1.2zM942.8 380.9h1.2v2.1h-1.2zM930.6 398.9h1.5v2.1h-1.5zM931 379.9h1.2v2.1h-1.2zM942 373.9h1.2v2.1h-1.2zM942.8 373.9h1.2v2.1h-1.2zM945 402.9h1.2v2.1h-1.2zM945.8 402.9h1.2v2.1h-1.2zM930.8 391.9h1.2v2.1h-1.2zM949 402.9h1.2v2.1h-1.2zM949.8 402.9h1.2v2.1h-1.2zM949 385.9h1.5v2.1h-1.5zM950 396.9h2.1v1.5h-2.1zM950 399.6h2.1v1.5h-2.1zM951.6 392.9h1.5v2.1h-1.5zM900 361.9h1.5v2.1h-1.5zM902.6 361.9h1.5v2.1h-1.5zM906 361.9h1.2v2.1h-1.2zM882 400.9h1.5v2.1h-1.5zM884.6 400.9h1.5v2.1h-1.5zM882 405.9h1.2v2.1h-1.2zM882.8 405.9h1.2v2.1h-1.2zM866 402h6v2h-6zM866 417h6v2h-6zM945 420h5v5h-5z" fill="#ffd93d"/><path d="M679 403h4v11h-4zM862.6 373.9h1.5v2.1h-1.5zM867.8 389.9h1.2v2.1h-1.2zM863 389.9h2.1v1.5h-2.1zM869 373.9h1.2v2.1h-1.2zM869.8 373.9h1.2v2.1h-1.2zM858 384.9h1.2v2.1h-1.2zM858.8 384.9h1.2v2.1h-1.2zM857 388.9h1.5v2.1h-1.5zM896 412.9h2.2v3.1h-2.2zM916.9 409.9h2.2v3.1h-2.2zM919.6 415.9h1.5v2.1h-1.5zM923 413.9h2.1v1.5h-2.1zM923 416.6h2.1v1.5h-2.1zM941 398.9h1.5v2.1h-1.5zM943.6 398.9h1.5v2.1h-1.5zM941.8 402.9h1.2v2.1h-1.2zM937.6 398.9h1.5v2.1h-1.5zM933 385.9h2.1v1.5h-2.1zM933 402.9h1.5v2.1h-1.5zM935.6 402.9h1.5v2.1h-1.5zM949 375.9h3.1v2.2h-3.1zM928 398.9h1.5v2.1h-1.5zM931.8 379.9h1.2v2.1h-1.2zM930 391.9h1.2v2.1h-1.2zM951.6 385.9h1.5v2.1h-1.5zM949 392.9h1.5v2.1h-1.5zM906.8 361.9h1.2v2.1h-1.2zM889 400.9h3.1v2.2h-3.1zM889 404.9h3.1v2.2h-3.1zM862 404h4v13h-4zM872 404h4v13h-4zM947 414h16v5h-16zM947 427h16v5h-16zM958 420h5v5h-5zM617 346h4v5h-4zM617 353h4v5h-4zM617 360h4v6h-4z" fill="#8a8a8a"/><path d="M672.5 401.4h11.1v13.1h-11.1zM859.5 401.4h19.1v18.1h-19.1zM944.5 412.4h21.1v21.1h-21.1zM616.5 345.4h5.1v21.1h-5.1z" fill="none" stroke="#f4f4f4" stroke-width="0.9"/><path d="M859.5 373.5h5v3h-5zM866.5 389.5h3v3h-3zM866.5 383.5h3v3h-3zM859.5 379.5h5v3h-5zM861.5 383.5h3v3h-3zM866.5 377.5h5v3h-5zM862.5 389.5h3v5h-3zM868.5 373.5h3v3h-3zM857.5 384.5h3v3h-3zM866.5 393.5h3v3h-3zM856.5 388.5h5v3h-5zM904.5 409.5h4v7h-4zM895.5 412.5h7v4h-7zM912.5 409.5h7v4h-7zM891.5 413.5h3v3h-3zM912.5 415.5h3v3h-3zM916.5 415.5h5v3h-5zM895.5 408.5h5v3h-5zM922.5 413.5h3v5h-3zM940.5 398.5h5v3h-5zM940.5 402.5h3v3h-3zM941.5 387.5h4v7h-4zM934.5 398.5h5v3h-5zM936.5 385.5h4v7h-4zM936.5 377.5h3v5h-3zM935.5 373.5h5v3h-5zM932.5 385.5h3v5h-3zM932.5 402.5h5v3h-5zM948.5 375.5h4v7h-4zM941.5 380.5h3v3h-3zM927.5 398.5h5v3h-5zM930.5 379.5h3v3h-3zM941.5 373.5h3v3h-3zM944.5 402.5h3v3h-3zM929.5 391.5h3v3h-3zM948.5 402.5h3v3h-3zM948.5 385.5h5v3h-5zM949.5 396.5h3v5h-3zM948.5 392.5h5v3h-5zM899.5 361.5h5v3h-5zM905.5 361.5h3v3h-3zM881.5 400.5h5v3h-5zM888.5 400.5h4v7h-4zM881.5 405.5h3v3h-3z" fill="none" stroke="#f4f4f4" stroke-width="0.95"/><circle cx="630" cy="356.5" r="4.2" fill="#003d1d" stroke="#ffd93d" stroke-width="0.8"/><circle cx="630" cy="356.5" r="2.2" fill="#fff"/><path d="M639 349h4v7h-4zM645 349h4v7h-4zM639 359h4v7h-4zM645 359h4v7h-4zM652 342.9h1.2v2.1h-1.2zM653.8 342.9h1.2v2.1h-1.2zM658 342.9h1.5v2.1h-1.5zM665 342.9h1.5v2.1h-1.5zM667.6 342.9h1.5v2.1h-1.5zM652 347.9h2.1v1.5h-2.1zM652 350.6h2.1v1.5h-2.1zM657 347.9h1.5v3.1h-1.5zM659.6 347.9h1.5v3.1h-1.5zM664 347.9h1.8v3.1h-1.8zM667.2 347.9h1.8v3.1h-1.8zM653 354.9h1.5v2.1h-1.5zM655.6 354.9h1.5v2.1h-1.5zM660 354.9h1.2v3.1h-1.2zM661.8 354.9h1.2v3.1h-1.2zM653 359.9h1.2v1.1h-1.2zM654.8 359.9h1.2v1.1h-1.2z" fill="#ffd93d"/><path d="M660.6 342.9h1.5v2.1h-1.5z" fill="#8a8a8a"/><path d="M638 347.9h11.6v19.1h-11.6z" fill="none" stroke="#f4f4f4" stroke-width="0.9"/><path d="M651.5 342.5h4v3h-4zM657.5 342.5h5v3h-5zM664.5 342.5h5v3h-5zM651.5 347.5h3v5h-3zM656.5 347.5h5v4h-5zM663.5 347.5h6v4h-6zM652.5 354.5h5v3h-5zM659.5 354.5h4v4h-4zM652.5 359.5h4v2h-4z" fill="none" stroke="#f4f4f4" stroke-width="0.95"/><path d="M576.4 465.6 L579.2 468.4 L576.4 471.2 L573.6 468.4 Z" fill="#ffd93d"/><path d="M576.4 471.2 L579.2 474 L576.4 476.8 L573.6 474 Z" fill="#ffd93d"/><path d="M642 466.7 L644.8 469.5 L642 472.3 L639.2 469.5 Z" fill="#ffd93d"/><path d="M602.3 484.9 L605.1 487.7 L602.3 490.5 L599.5 487.7 Z" fill="#ffd93d"/><path d="M901.5 476.6h27.9v27.9h-27.9z" fill="#8a8a8a"/><path d="M902.4 469.5h1.7v3.8h-1.7zM902.4 507.7h1.7v3.8h-1.7zM905.9 469.5h1.7v3.8h-1.7zM905.9 507.7h1.7v3.8h-1.7zM909.4 469.5h1.7v3.8h-1.7zM909.4 507.7h1.7v3.8h-1.7zM912.9 507.7h1.7v3.8h-1.7zM916.4 469.5h1.7v3.8h-1.7zM916.4 507.7h1.7v3.8h-1.7zM919.9 469.5h1.7v3.8h-1.7zM919.9 507.7h1.7v3.8h-1.7zM923.3 469.5h1.7v3.8h-1.7zM923.3 507.7h1.7v3.8h-1.7zM926.8 469.5h1.7v3.8h-1.7zM926.8 507.7h1.7v3.8h-1.7zM894.5 477.4h3.8v1.7h-3.8zM932.7 477.4h3.8v1.7h-3.8zM932.7 480.9h3.8v1.7h-3.8zM932.7 484.4h3.8v1.7h-3.8zM932.7 487.9h3.8v1.7h-3.8zM894.5 491.4h3.8v1.7h-3.8zM932.7 491.4h3.8v1.7h-3.8zM932.7 494.9h3.8v1.7h-3.8zM894.5 498.3h3.8v1.7h-3.8zM932.7 498.3h3.8v1.7h-3.8zM894.5 501.8h3.8v1.7h-3.8zM932.7 501.8h3.8v1.7h-3.8z" fill="#ffd93d"/><path d="M912.9 469.5h1.7v3.8h-1.7zM894.5 480.9h3.8v1.7h-3.8zM894.5 484.4h3.8v1.7h-3.8zM894.5 487.9h3.8v1.7h-3.8zM894.5 494.9h3.8v1.7h-3.8z" fill="#0b7c80"/><path d="M893.5 468.4h44.1v44.1h-44.1z" fill="none" stroke="#f4f4f4" stroke-width="0.9"/><circle cx="915.5" cy="490.5" r="2.4" fill="#0000ff"/><path d="M804.4 483.4h40.2v36.2h-40.2z" fill="none" stroke="#f4f4f4" stroke-width="0.8"/><path d="M805.9 486.2h3.2M807.5 484.6v3.2M812.7 486.2h3.2M814.3 484.6v3.2M816.1 486.2h3.2M817.7 484.6v3.2M819.5 486.2h3.2M821.1 484.6v3.2M826.3 486.2h3.2M827.9 484.6v3.2M829.7 486.2h3.2M831.3 484.6v3.2M833.1 486.2h3.2M834.7 484.6v3.2M836.5 486.2h3.2M838.1 484.6v3.2M839.9 486.2h3.2M841.5 484.6v3.2M805.9 489.6h3.2M807.5 488v3.2M809.3 489.6h3.2M810.9 488v3.2M812.7 489.6h3.2M814.3 488v3.2M816.1 489.6h3.2M817.7 488v3.2M822.9 489.6h3.2M824.5 488v3.2M826.3 489.6h3.2M827.9 488v3.2M829.7 489.6h3.2M831.3 488v3.2M833.1 489.6h3.2M834.7 488v3.2M836.5 489.6h3.2M838.1 488v3.2M839.9 489.6h3.2M841.5 488v3.2M805.9 493h3.2M807.5 491.4v3.2M809.3 493h3.2M810.9 491.4v3.2M839.9 493h3.2M841.5 491.4v3.2M809.3 496.4h3.2M810.9 494.8v3.2M836.5 496.4h3.2M838.1 494.8v3.2M839.9 496.4h3.2M841.5 494.8v3.2M805.9 499.8h3.2M807.5 498.2v3.2M809.3 499.8h3.2M810.9 498.2v3.2M819.5 499.8h3.2M821.1 498.2v3.2M833.1 499.8h3.2M834.7 498.2v3.2M836.5 499.8h3.2M838.1 498.2v3.2M839.9 499.8h3.2M841.5 498.2v3.2M805.9 503.2h3.2M807.5 501.6v3.2M816.1 503.2h3.2M817.7 501.6v3.2M833.1 503.2h3.2M834.7 501.6v3.2M836.5 503.2h3.2M838.1 501.6v3.2M839.9 503.2h3.2M841.5 501.6v3.2M809.3 506.6h3.2M810.9 505v3.2M836.5 506.6h3.2M838.1 505v3.2M839.9 506.6h3.2M841.5 505v3.2M805.9 510h3.2M807.5 508.4v3.2M809.3 510h3.2M810.9 508.4v3.2M829.7 510h3.2M831.3 508.4v3.2M836.5 510h3.2M838.1 508.4v3.2M839.9 510h3.2M841.5 508.4v3.2M805.9 513.4h3.2M807.5 511.8v3.2M812.7 513.4h3.2M814.3 511.8v3.2M816.1 513.4h3.2M817.7 511.8v3.2M819.5 513.4h3.2M821.1 511.8v3.2M822.9 513.4h3.2M824.5 511.8v3.2M826.3 513.4h3.2M827.9 511.8v3.2M829.7 513.4h3.2M831.3 511.8v3.2M836.5 513.4h3.2M838.1 511.8v3.2M809.3 516.8h3.2M810.9 515.2v3.2M816.1 516.8h3.2M817.7 515.2v3.2M819.5 516.8h3.2M821.1 515.2v3.2M826.3 516.8h3.2M827.9 515.2v3.2M829.7 516.8h3.2M831.3 515.2v3.2M833.1 516.8h3.2M834.7 515.2v3.2M836.5 516.8h3.2M838.1 515.2v3.2" fill="none" stroke="#ffd93d" stroke-width="1.1"/><path d="M809.3 486.2h3.2M810.9 484.6v3.2M805.9 496.4h3.2M807.5 494.8v3.2M809.3 513.4h3.2M810.9 511.8v3.2M833.1 513.4h3.2M834.7 511.8v3.2M839.9 513.4h3.2M841.5 511.8v3.2" fill="none" stroke="#0b7c80" stroke-width="1.1"/><path d="M812.7 493h3.2M814.3 491.4v3.2M816.1 493h3.2M817.7 491.4v3.2M819.5 493h3.2M821.1 491.4v3.2M822.9 493h3.2M824.5 491.4v3.2M826.3 493h3.2M827.9 491.4v3.2M829.7 493h3.2M831.3 491.4v3.2M833.1 493h3.2M834.7 491.4v3.2M816.1 496.4h3.2M817.7 494.8v3.2M819.5 496.4h3.2M821.1 494.8v3.2M822.9 496.4h3.2M824.5 494.8v3.2M829.7 496.4h3.2M831.3 494.8v3.2M833.1 496.4h3.2M834.7 494.8v3.2M812.7 499.8h3.2M814.3 498.2v3.2M816.1 499.8h3.2M817.7 498.2v3.2M822.9 499.8h3.2M824.5 498.2v3.2M826.3 499.8h3.2M827.9 498.2v3.2M829.7 499.8h3.2M831.3 498.2v3.2M812.7 503.2h3.2M814.3 501.6v3.2M819.5 503.2h3.2M821.1 501.6v3.2M822.9 503.2h3.2M824.5 501.6v3.2M826.3 503.2h3.2M827.9 501.6v3.2M829.7 503.2h3.2M831.3 501.6v3.2M812.7 506.6h3.2M814.3 505v3.2M816.1 506.6h3.2M817.7 505v3.2M819.5 506.6h3.2M821.1 505v3.2M822.9 506.6h3.2M824.5 505v3.2M826.3 506.6h3.2M827.9 505v3.2M829.7 506.6h3.2M831.3 505v3.2M833.1 506.6h3.2M834.7 505v3.2M812.7 510h3.2M814.3 508.4v3.2M816.1 510h3.2M817.7 508.4v3.2M819.5 510h3.2M821.1 508.4v3.2M822.9 510h3.2M824.5 508.4v3.2M826.3 510h3.2M827.9 508.4v3.2M833.1 510h3.2M834.7 508.4v3.2" fill="none" stroke="#8a8a8a" stroke-width="1.1"/><circle cx="821.6" cy="500.4" r="2.4" fill="#0000ff"/><path d="M895.4 570.7h7.9v7h-7.9zM906.3 570.7h7.9v7h-7.9zM895.4 578.6h7.9v7h-7.9zM906.3 578.6h7.9v7h-7.9zM895.4 595.5h7.9v7h-7.9zM906.3 595.5h7.9v7h-7.9zM895.4 603.4h7.9v7h-7.9zM906.3 603.4h7.9v7h-7.9zM894 588.5h2v4h-2zM898 588.5h2v4h-2zM910 588.5h2v4h-2zM914 588.5h2v4h-2z" fill="#8a8a8a"/><path d="M893 565.5h1.8v3.2h-1.8zM893 612.3h1.8v3.2h-1.8zM896.8 565.5h1.8v3.2h-1.8zM896.8 612.3h1.8v3.2h-1.8zM900.6 612.3h1.8v3.2h-1.8zM904.4 565.5h1.8v3.2h-1.8zM904.4 612.3h1.8v3.2h-1.8zM908.2 612.3h1.8v3.2h-1.8zM912 565.5h1.8v3.2h-1.8zM912 612.3h1.8v3.2h-1.8zM915.8 565.5h1.8v3.2h-1.8zM915.8 612.3h1.8v3.2h-1.8zM890.5 568h3.2v1.8h-3.2zM916.3 568h3.2v1.8h-3.2zM890.5 571.9h3.2v1.8h-3.2zM916.3 571.9h3.2v1.8h-3.2zM890.5 575.8h3.2v1.8h-3.2zM916.3 575.8h3.2v1.8h-3.2zM890.5 579.7h3.2v1.8h-3.2zM890.5 583.6h3.2v1.8h-3.2zM890.5 587.5h3.2v1.8h-3.2zM916.3 587.5h3.2v1.8h-3.2zM916.3 591.4h3.2v1.8h-3.2zM916.3 595.3h3.2v1.8h-3.2zM916.3 599.2h3.2v1.8h-3.2zM890.5 603.1h3.2v1.8h-3.2zM916.3 603.1h3.2v1.8h-3.2zM890.5 607h3.2v1.8h-3.2zM916.3 607h3.2v1.8h-3.2zM890.5 610.9h3.2v1.8h-3.2zM916.3 610.9h3.2v1.8h-3.2z" fill="#ffd93d"/><path d="M900.6 565.5h1.8v3.2h-1.8zM908.2 565.5h1.8v3.2h-1.8zM916.3 579.7h3.2v1.8h-3.2zM916.3 583.6h3.2v1.8h-3.2zM890.5 591.4h3.2v1.8h-3.2zM890.5 595.3h3.2v1.8h-3.2zM890.5 599.2h3.2v1.8h-3.2z" fill="#0b7c80"/><path d="M889.5 564.5h31.1v52.1h-31.1z" fill="none" stroke="#f4f4f4" stroke-width="0.9"/><circle cx="905.3" cy="590.5" r="2.4" fill="#0000ff"/><path d="M912 431.9h2.1v2.6h-2.1zM912 436.5h2.1v2.6h-2.1zM924 442.9h3.1v2.2h-3.1zM924 447.9h3.1v1.8h-3.1zM924 451.2h3.1v1.8h-3.1zM922.3 458.9h4.7v7.1h-4.7zM896 430.9h2.1v1.8h-2.1zM896 434.2h2.1v1.8h-2.1z" fill="#ffd93d"/><path d="M924 438.9h3.1v2.2h-3.1zM914 458.9h4.7v7.1h-4.7z" fill="#8a8a8a"/><path d="M911.5 431.5h3v8.1h-3zM923.5 438.5h4v7h-4zM923.5 447.5h4v6h-4zM913.5 458.5h14.1v8.1h-14.1zM895.5 430.5h3v6h-3z" fill="none" stroke="#f4f4f4" stroke-width="0.95"/><ellipse cx="960" cy="459" rx="6.5" ry="3" fill="#8a8a8a"/><path d="M960 456.8 L962.2 459 L960 461.2 L957.8 459 Z" fill="#ffffff"/><path d="M871 439h12v10h-12zM828 557h2v2h-2zM823.5 561.5h4v3h-4zM856 557h2v2h-2zM851 561.5h4v3h-4zM828 577h2v2h-2zM823.5 581.5h4v3h-4zM856 575h2v2h-2zM851 579h4v3h-4zM837 592h2v2h-2zM833 598.5h4v3h-4zM856 608h2v2h-2zM850.5 611h4v3h-4zM834 558h4.1v3.6h-4.1zM834 564.4h4.1v3.6h-4.1zM834 580.1h5.1v2.9h-5.1zM861 575h5.1v3.3h-5.1zM861 580.8h5.1v3.3h-5.1zM843 595h4.1v2.9h-4.1zM843 600.1h4.1v2.9h-4.1zM850 600.1h4.1v2.9h-4.1zM856 600.1h4.1v2.9h-4.1zM891 516h6.1v4.4h-6.1zM887 525.5h2.1v2.6h-2.1zM881 527h1.5v1.1h-1.5zM884 515.4h5.1v3.6h-5.1zM893 535.2h2.1v1.8h-2.1zM900 523.7h6.1v4.4h-6.1zM890.9 542h2.2v3.1h-2.2zM863 536h4.4v6.1h-4.4zM870.7 536h4.4v6.1h-4.4zM884 504.9h2.6v2.1h-2.6zM872 494.9h1.8v2.1h-1.8zM879 513h3.1v2.2h-3.1zM879 516.9h3.1v2.2h-3.1zM872 508.9h2.6v2.1h-2.6zM876.5 508.9h2.6v2.1h-2.6zM832.1 465.9h2.9v4.1h-2.9zM882 542h3.1v2.2h-3.1zM882 545.9h3.1v2.2h-3.1zM833 431.9h1.8v2.1h-1.8zM873.4 485.9h3.6v5.1h-3.6zM853 511.9h4.1v2.9h-4.1zM811 465.9h4.4v6.1h-4.4zM808 528.4h5.1v3.6h-5.1zM897 546h1.5v1.1h-1.5zM899.6 546h1.5v1.1h-1.5zM879 489.2h2.1v1.8h-2.1zM877 542h2.1v1.8h-2.1zM838.5 524h2.6v2.1h-2.6zM863.2 485.9h1.8v2.1h-1.8zM855.8 459.9h1.2v3.1h-1.2zM817.4 455.9h3.6v5.1h-3.6zM845 546h1.8v2.1h-1.8zM860 523h1.8v2.1h-1.8zM863.2 523h1.8v2.1h-1.8zM825 539h4.4v6.1h-4.4zM832.7 539h4.4v6.1h-4.4zM811 462.9h1.5v1.1h-1.5zM813.6 462.9h1.5v1.1h-1.5zM835 442.9h3.1v2.2h-3.1zM829.6 524h1.5v1.1h-1.5zM906.2 545h1.8v2.1h-1.8zM850 480.9h2.6v2.1h-2.6zM854.5 480.9h2.6v2.1h-2.6zM879 502.2h2.1v1.8h-2.1zM836.6 428.9h1.5v1.1h-1.5zM887 433.9h1.1v1.5h-1.1zM887 436.6h1.1v1.5h-1.1zM883 488.9h1.8v2.1h-1.8zM886.2 488.9h1.8v2.1h-1.8zM915.9 545h2.2v3.1h-2.2zM855 492.9h1.2v3.1h-1.2zM856.8 492.9h1.2v3.1h-1.2zM805 457.9h1.2v2.1h-1.2zM849.2 511.9h1.8v2.1h-1.8zM850 471.9h3.1v2.2h-3.1zM883 461.6h1.1v1.5h-1.1zM883 474.9h6.1v4.4h-6.1zM827.8 472.9h1.2v2.1h-1.2zM815 528h1.1v1.5h-1.1zM855 464.9h2.1v2.6h-2.1zM937.6 520h1.5v1.1h-1.5zM821 526.6h1.1v1.5h-1.1zM918.5 530h2.6v2.1h-2.6zM880 532h1.8v2.1h-1.8zM883.2 532h1.8v2.1h-1.8zM850 506.6h1.1v1.5h-1.1zM922 540h1.5v1.1h-1.5zM864 544h2.1v1.8h-2.1zM846 435.9h5.1v3.6h-5.1zM813 452.2h2.1v1.8h-2.1zM883.8 454.9h1.2v2.1h-1.2zM926.5 544h2.6v2.1h-2.6zM861 429.9h1.1v1.5h-1.1zM850 500.9h1.5v1.1h-1.5zM918 539h1.2v2.1h-1.2zM941 530h4.1v2.9h-4.1zM868 492.9h1.1v1.5h-1.1zM941 542h4.4v6.1h-4.4zM948.7 542h4.4v6.1h-4.4zM830 438.9h2.1v1.8h-2.1zM830 442.2h2.1v1.8h-2.1zM815 537h1.8v2.1h-1.8zM897 541h1.2v3.1h-1.2zM898.8 541h1.2v3.1h-1.2zM823 447.9h2.1v1.8h-2.1zM850 491.9h2.1v2.6h-2.1zM850 496.5h2.1v2.6h-2.1zM875 516h2.1v1.8h-2.1zM825 438.9h2.1v1.8h-2.1zM804.8 530h1.2v2.1h-1.2zM929 540h1.5v1.1h-1.5zM948 530h2.1v1.8h-2.1zM948 533.2h2.1v1.8h-2.1zM842.8 435.9h1.2v2.1h-1.2zM819 450.2h2.1v1.8h-2.1zM861 444.9h2.2v3.1h-2.2zM864.9 444.9h2.2v3.1h-2.2zM944 523.9h3.1v2.2h-3.1zM829 528h2.1v1.8h-2.1zM842.6 428.9h1.5v1.1h-1.5zM841 442.9h1.2v3.1h-1.2zM842.8 442.9h1.2v3.1h-1.2zM849 518h2.1v1.8h-2.1zM849 521.2h2.1v1.8h-2.1zM801 537h1.2v2.1h-1.2zM801.8 537h1.2v2.1h-1.2zM831 472.9h2.1v1.8h-2.1zM831 476.2h2.1v1.8h-2.1zM819 478.9h2.2v3.1h-2.2zM873 466.9h2.9v4.1h-2.9zM935.8 542h1.2v2.1h-1.2zM867 475.9h2.6v2.1h-2.6zM914 534h1.8v2.1h-1.8zM810 541h3.1v2.2h-3.1zM810 544.9h3.1v2.2h-3.1zM921 521h1.2v2.1h-1.2zM853 529h1.5v1.1h-1.5zM855.6 529h1.5v1.1h-1.5zM916 524.2h2.1v1.8h-2.1zM921 514h2.1v1.8h-2.1zM945.2 500.9h1.8v2.1h-1.8zM833 528h1.8v2.1h-1.8zM890 498.2h2.1v1.8h-2.1zM932 514h1.8v2.1h-1.8zM846 499.9h1.2v2.1h-1.2zM846.8 499.9h1.2v2.1h-1.2zM944 505.9h1.8v2.1h-1.8zM956.5 505.9h2.6v2.1h-2.6zM913 514h2.2v3.1h-2.2zM916.9 514h2.2v3.1h-2.2zM866.8 471.9h1.2v2.1h-1.2zM847 506.6h1.1v1.5h-1.1zM951.8 513h1.2v3.1h-1.2zM804 524.6h1.1v1.5h-1.1zM930 615h1.2v2.1h-1.2zM930 601.2h2.1v1.8h-2.1zM927.8 582h1.2v2.1h-1.2zM880.8 589h1.2v3.1h-1.2zM867 589h3.6v5.1h-3.6zM876 581h1.1v1.5h-1.1zM876 583.6h1.1v1.5h-1.1zM878 562.2h2.1v1.8h-2.1zM871 581h1.1v1.5h-1.1zM939 557h2.1v1.8h-2.1zM939 560.2h2.1v1.8h-2.1zM878 572.5h2.1v2.6h-2.1zM928.2 556h1.8v2.1h-1.8zM875 598h1.2v2.1h-1.2zM875.8 598h1.2v2.1h-1.2zM873 559h2.1v1.8h-2.1zM912 553h2.1v2.6h-2.1zM925 552h2.6v2.1h-2.6zM929.5 552h2.6v2.1h-2.6zM875 577h1.5v1.1h-1.5zM877.6 577h1.5v1.1h-1.5zM933.8 562h1.2v2.1h-1.2zM878 611h1.8v2.1h-1.8zM868 598h5.1v3.6h-5.1zM870 618.7h6.1v4.4h-6.1zM929 565h1.2v2.1h-1.2zM929.8 565h1.2v2.1h-1.2zM874.5 555h2.6v2.1h-2.6zM877 607h1.5v1.1h-1.5zM879.6 607h1.5v1.1h-1.5zM943 558.4h5.1v3.6h-5.1zM871 571h2.1v1.8h-2.1zM871 574.2h2.1v1.8h-2.1zM878 627.1h4.1v2.9h-4.1zM896.6 556h1.5v1.1h-1.5zM907 554.6h1.1v1.5h-1.1zM894 627h1.8v2.1h-1.8zM897.2 627h1.8v2.1h-1.8zM916.8 556h1.2v2.1h-1.2zM920.9 624h2.2v3.1h-2.2zM896.6 553h1.5v1.1h-1.5zM905.5 558h2.6v2.1h-2.6zM874.8 627h1.2v2.1h-1.2zM489.6 547.1h28.3v28.3h-28.3z" fill="#8a8a8a"/><path d="M870 436h2v2.5h-2zM870 449.5h2v2.5h-2zM874 436h2v2.5h-2zM874 449.5h2v2.5h-2zM878 436h2v2.5h-2zM878 449.5h2v2.5h-2zM882 436h2v2.5h-2zM882 449.5h2v2.5h-2zM821 557h2v2h-2zM821 567h2v2h-2zM828 567h2v2h-2zM848 557h2v2h-2zM848 567h2v2h-2zM856 567h2v2h-2zM821 577h2v2h-2zM821 587h2v2h-2zM828 587h2v2h-2zM848 575h2v2h-2zM848 584h2v2h-2zM856 584h2v2h-2zM831 592h2v2h-2zM831 606h2v2h-2zM837 606h2v2h-2zM847 608h2v2h-2zM847 615h2v2h-2zM856 615h2v2h-2zM861 562h5.1v2.9h-5.1zM861 567.1h5.1v2.9h-5.1zM834 575h5.1v2.9h-5.1zM850 595h4.1v2.9h-4.1zM856 595h4.1v2.9h-4.1zM821 624h4.1v1.8h-4.1zM821 627.2h4.1v1.8h-4.1zM828 624h4.1v1.8h-4.1zM828 627.2h4.1v1.8h-4.1zM891 523.7h6.1v4.4h-6.1zM887 521h2.1v2.6h-2.1zM883.6 527h1.5v1.1h-1.5zM887 532h2.1v1.8h-2.1zM887 535.2h2.1v1.8h-2.1zM884 508.9h5.1v3.6h-5.1zM881 521h1.2v3.1h-1.2zM882.8 521h1.2v3.1h-1.2zM875 527h1.5v1.1h-1.5zM877.6 527h1.5v1.1h-1.5zM853 532h5.1v3.6h-5.1zM853 538.4h5.1v3.6h-5.1zM853 523h1.1v1.5h-1.1zM853 525.6h1.1v1.5h-1.1zM893 532h2.1v1.8h-2.1zM900 516h6.1v4.4h-6.1zM887 542h2.2v3.1h-2.2zM853 544h2.9v4.1h-2.9zM858.1 544h2.9v4.1h-2.9zM849 525h1.2v2.1h-1.2zM849.8 525h1.2v2.1h-1.2zM861 532h1.8v2.1h-1.8zM864.2 532h1.8v2.1h-1.8zM888.5 504.9h2.6v2.1h-2.6zM843 525h1.5v1.1h-1.5zM845.6 525h1.5v1.1h-1.5zM875.2 494.9h1.8v2.1h-1.8zM827 465.9h2.9v4.1h-2.9zM881 494.9h1.8v2.1h-1.8zM884.2 494.9h1.8v2.1h-1.8zM836.2 431.9h1.8v2.1h-1.8zM875 523h1.2v2.1h-1.2zM875.8 523h1.2v2.1h-1.2zM844 529h2.6v2.1h-2.6zM848.5 529h2.6v2.1h-2.6zM867 485.9h3.6v5.1h-3.6zM872 498.9h2.1v2.6h-2.1zM872 503.5h2.1v2.6h-2.1zM870 523h3.1v2.2h-3.1zM870 526.9h3.1v2.2h-3.1zM868 508.9h2.1v2.6h-2.1zM868 513.5h2.1v2.6h-2.1zM853 517.1h4.1v2.9h-4.1zM849 536h2.1v2.6h-2.1zM849 540.5h2.1v2.6h-2.1zM818.7 465.9h4.4v6.1h-4.4zM856 522h2.1v1.8h-2.1zM856 525.2h2.1v1.8h-2.1zM808 522h5.1v3.6h-5.1zM868 498.9h2.1v2.6h-2.1zM868 503.5h2.1v2.6h-2.1zM839 544h1.2v3.1h-1.2zM840.8 544h1.2v3.1h-1.2zM879 485.9h2.1v1.8h-2.1zM877 545.2h2.1v1.8h-2.1zM834 524h2.6v2.1h-2.6zM860 485.9h1.8v2.1h-1.8zM887 539h1.5v1.1h-1.5zM889.6 539h1.5v1.1h-1.5zM860 477.9h3.1v2.2h-3.1zM860 481.9h3.1v2.2h-3.1zM854 459.9h1.2v3.1h-1.2zM852 485.9h2.2v3.1h-2.2zM855.9 485.9h2.2v3.1h-2.2zM811 455.9h3.6v5.1h-3.6zM867 481.9h1.2v2.1h-1.2zM867.8 481.9h1.2v2.1h-1.2zM881 536h1.5v1.1h-1.5zM883.6 536h1.5v1.1h-1.5zM848.2 546h1.8v2.1h-1.8zM835 438.9h3.1v2.2h-3.1zM863 528h1.5v1.1h-1.5zM865.6 528h1.5v1.1h-1.5zM850 475.9h2.2v3.1h-2.2zM853.9 475.9h2.2v3.1h-2.2zM827 524h1.5v1.1h-1.5zM860 470.9h2.1v1.8h-2.1zM860 474.2h2.1v1.8h-2.1zM854 431.9h4.1v2.9h-4.1zM854 437.1h4.1v2.9h-4.1zM805 462.9h1.2v2.1h-1.2zM805.8 462.9h1.2v2.1h-1.2zM860 463.9h2.9v4.1h-2.9zM865.1 463.9h2.9v4.1h-2.9zM816 522h1.2v3.1h-1.2zM817.8 522h1.2v3.1h-1.2zM868 532h2.6v2.1h-2.6zM872.5 532h2.6v2.1h-2.6zM846 431.9h1.8v2.1h-1.8zM849.2 431.9h1.8v2.1h-1.8zM866 429.9h2.9v4.1h-2.9zM871.1 429.9h2.9v4.1h-2.9zM903 545h1.8v2.1h-1.8zM846 428.9h1.5v1.1h-1.5zM848.6 428.9h1.5v1.1h-1.5zM879 498.9h2.1v1.8h-2.1zM902 531h6.1v4.4h-6.1zM902 538.7h6.1v4.4h-6.1zM897 531h3.1v2.2h-3.1zM897 534.9h3.1v2.2h-3.1zM834 428.9h1.5v1.1h-1.5zM924 530h4.4v6.1h-4.4zM931.7 530h4.4v6.1h-4.4zM820 530h1.8v2.1h-1.8zM823.2 530h1.8v2.1h-1.8zM860 492.9h6.1v4.4h-6.1zM860 500.7h6.1v4.4h-6.1zM860 454.9h3.6v5.1h-3.6zM866.4 454.9h3.6v5.1h-3.6zM859 511.9h1.8v2.1h-1.8zM862.2 511.9h1.8v2.1h-1.8zM910 538h2.1v1.8h-2.1zM910 541.2h2.1v1.8h-2.1zM839 458.9h3.6v5.1h-3.6zM845.4 458.9h3.6v5.1h-3.6zM912 545h2.2v3.1h-2.2zM839 468.9h2.2v3.1h-2.2zM842.9 468.9h2.2v3.1h-2.2zM805.8 457.9h1.2v2.1h-1.2zM846 511.9h1.8v2.1h-1.8zM850 467.9h3.1v2.2h-3.1zM883 458.9h1.1v1.5h-1.1zM843 475.9h1.5v1.1h-1.5zM845.6 475.9h1.5v1.1h-1.5zM883 482.7h6.1v4.4h-6.1zM827 472.9h1.2v2.1h-1.2zM824 455.9h3.6v5.1h-3.6zM830.4 455.9h3.6v5.1h-3.6zM815 530.6h1.1v1.5h-1.1zM855 469.5h2.1v2.6h-2.1zM877 458.9h1.2v3.1h-1.2zM878.8 458.9h1.2v3.1h-1.2zM935 520h1.5v1.1h-1.5zM821 524h1.1v1.5h-1.1zM854 441.9h1.5v1.1h-1.5zM856.6 441.9h1.5v1.1h-1.5zM914 530h2.6v2.1h-2.6zM850 503.9h1.1v1.5h-1.1zM924.6 540h1.5v1.1h-1.5zM819 475.9h1.5v1.1h-1.5zM821.6 475.9h1.5v1.1h-1.5zM864 547.2h2.1v1.8h-2.1zM844 533h1.1v1.5h-1.1zM844 535.6h1.1v1.5h-1.1zM846 442.4h5.1v3.6h-5.1zM910 529h2.1v2.6h-2.1zM910 533.5h2.1v2.6h-2.1zM813 448.9h2.1v1.8h-2.1zM854 449.9h2.1v2.6h-2.1zM854 454.5h2.1v2.6h-2.1zM878 429.9h1.8v2.1h-1.8zM881.2 429.9h1.8v2.1h-1.8zM883 454.9h1.2v2.1h-1.2zM922 544h2.6v2.1h-2.6zM861 432.6h1.1v1.5h-1.1zM852.6 500.9h1.5v1.1h-1.5zM891 508.9h1.1v1.5h-1.1zM891 511.6h1.1v1.5h-1.1zM918.8 539h1.2v2.1h-1.2zM840 540h2.6v2.1h-2.6zM844.5 540h2.6v2.1h-2.6zM941 535.1h4.1v2.9h-4.1zM879 478.9h1.2v2.1h-1.2zM879.8 478.9h1.2v2.1h-1.2zM883 498.9h1.5v1.1h-1.5zM885.6 498.9h1.5v1.1h-1.5zM868 495.6h1.1v1.5h-1.1zM811 475.9h2.2v3.1h-2.2zM814.9 475.9h2.2v3.1h-2.2zM818.2 537h1.8v2.1h-1.8zM927 520h1.2v3.1h-1.2zM928.8 520h1.2v3.1h-1.2zM935 523h1.8v2.1h-1.8zM938.2 523h1.8v2.1h-1.8zM815 543h2.9v4.1h-2.9zM820.1 543h2.9v4.1h-2.9zM835 532h2.1v1.8h-2.1zM835 535.2h2.1v1.8h-2.1zM932 520h1.1v1.5h-1.1zM932 522.6h1.1v1.5h-1.1zM823 451.2h2.1v1.8h-2.1zM950 519h2.1v1.8h-2.1zM950 522.2h2.1v1.8h-2.1zM827 447.9h4.4v6.1h-4.4zM834.7 447.9h4.4v6.1h-4.4zM875 519.2h2.1v1.8h-2.1zM825 442.2h2.1v1.8h-2.1zM806 537h2.6v2.1h-2.6zM810.5 537h2.6v2.1h-2.6zM804 530h1.2v2.1h-1.2zM931.6 540h1.5v1.1h-1.5zM842 435.9h1.2v2.1h-1.2zM819 446.9h2.1v1.8h-2.1zM952 530h2.1v2.6h-2.1zM952 534.5h2.1v2.6h-2.1zM853 444.9h1.8v2.1h-1.8zM856.2 444.9h1.8v2.1h-1.8zM944 520h3.1v2.2h-3.1zM829 531.2h2.1v1.8h-2.1zM848 448.9h4.1v2.9h-4.1zM848 454.1h4.1v2.9h-4.1zM860 440.9h1.8v2.1h-1.8zM863.2 440.9h1.8v2.1h-1.8zM840 428.9h1.5v1.1h-1.5zM944 510.9h3.1v2.2h-3.1zM944 514.9h3.1v2.2h-3.1zM806 534h1.5v1.1h-1.5zM808.6 534h1.5v1.1h-1.5zM877 536h1.1v1.5h-1.1zM877 538.6h1.1v1.5h-1.1zM824 522h1.1v1.5h-1.1zM824 524.6h1.1v1.5h-1.1zM841 449.9h1.2v2.1h-1.2zM841.8 449.9h1.2v2.1h-1.2zM822.9 478.9h2.2v3.1h-2.2zM878.1 466.9h2.9v4.1h-2.9zM840 533h2.1v1.8h-2.1zM840 536.2h2.1v1.8h-2.1zM935 542h1.2v2.1h-1.2zM846 480.9h2.1v1.8h-2.1zM846 484.2h2.1v1.8h-2.1zM866 519h1.8v2.1h-1.8zM869.2 519h1.8v2.1h-1.8zM871.5 475.9h2.6v2.1h-2.6zM917.2 534h1.8v2.1h-1.8zM921.8 521h1.2v2.1h-1.2zM935 538h1.5v1.1h-1.5zM937.6 538h1.5v1.1h-1.5zM916 521h2.1v1.8h-2.1zM921 517.2h2.1v1.8h-2.1zM801 541h2.6v2.1h-2.6zM805.5 541h2.6v2.1h-2.6zM871 481.9h1.8v2.1h-1.8zM874.2 481.9h1.8v2.1h-1.8zM942 500.9h1.8v2.1h-1.8zM836.2 528h1.8v2.1h-1.8zM890 494.9h2.1v1.8h-2.1zM805 468.9h1.2v3.1h-1.2zM806.8 468.9h1.2v3.1h-1.2zM935.2 514h1.8v2.1h-1.8zM801 503.9h2.1v1.8h-2.1zM801 507.2h2.1v1.8h-2.1zM883 464.9h2.1v1.8h-2.1zM883 468.2h2.1v1.8h-2.1zM801 475.9h2.6v2.1h-2.6zM805.5 475.9h2.6v2.1h-2.6zM925 548h1.5v1.1h-1.5zM927.6 548h1.5v1.1h-1.5zM947.2 505.9h1.8v2.1h-1.8zM952 505.9h2.6v2.1h-2.6zM866 471.9h1.2v2.1h-1.2zM847 503.9h1.1v1.5h-1.1zM860 449.9h2.2v3.1h-2.2zM863.9 449.9h2.2v3.1h-2.2zM950 513h1.2v3.1h-1.2zM804 522h1.1v1.5h-1.1zM853 503.9h3.1v2.2h-3.1zM853 507.9h3.1v2.2h-3.1zM862 516h1.2v2.1h-1.2zM862.8 516h1.2v2.1h-1.2zM930 605h2.1v1.8h-2.1zM930 608.2h2.1v1.8h-2.1zM930.8 615h1.2v2.1h-1.2zM930 598h2.1v1.8h-2.1zM927 586h5.1v3.6h-5.1zM927 592.4h5.1v3.6h-5.1zM927 582h1.2v2.1h-1.2zM926 615h2.1v2.6h-2.1zM926 619.5h2.1v2.6h-2.1zM879 589h1.2v3.1h-1.2zM926 624h2.6v2.1h-2.6zM930.5 624h2.6v2.1h-2.6zM882 559h2.1v1.8h-2.1zM882 562.2h2.1v1.8h-2.1zM873.4 589h3.6v5.1h-3.6zM879 594h1.8v2.1h-1.8zM882.2 594h1.8v2.1h-1.8zM927 573h3.1v2.2h-3.1zM927 576.9h3.1v2.2h-3.1zM882 568h2.1v2.6h-2.1zM882 572.5h2.1v2.6h-2.1zM927 569h1.5v1.1h-1.5zM929.6 569h1.5v1.1h-1.5zM878 559h2.1v1.8h-2.1zM879 585h1.8v2.1h-1.8zM882.2 585h1.8v2.1h-1.8zM871 583.6h1.1v1.5h-1.1zM878 568h2.1v2.6h-2.1zM933 557h1.2v3.1h-1.2zM934.8 557h1.2v3.1h-1.2zM925 556h1.8v2.1h-1.8zM936 568h1.2v2.1h-1.2zM936.8 568h1.2v2.1h-1.2zM882 577h2.1v1.8h-2.1zM882 580.2h2.1v1.8h-2.1zM873 562.2h2.1v1.8h-2.1zM875 602h2.2v3.1h-2.2zM878.9 602h2.2v3.1h-2.2zM912 557.5h2.1v2.6h-2.1zM881 598h1.2v2.1h-1.2zM881.8 598h1.2v2.1h-1.2zM869 564h2.1v1.8h-2.1zM869 567.2h2.1v1.8h-2.1zM920 555h1.2v3.1h-1.2zM921.8 555h1.2v3.1h-1.2zM933 562h1.2v2.1h-1.2zM881.2 611h1.8v2.1h-1.8zM868 604.4h5.1v3.6h-5.1zM879 555h1.8v2.1h-1.8zM882.2 555h1.8v2.1h-1.8zM870 611h6.1v4.4h-6.1zM870 555h2.6v2.1h-2.6zM926 609h1.2v2.1h-1.2zM926.8 609h1.2v2.1h-1.2zM943 552h5.1v3.6h-5.1zM889 554h1.2v3.1h-1.2zM890.8 554h1.2v3.1h-1.2zM878 622h4.1v2.9h-4.1zM934 553h1.5v1.1h-1.5zM936.6 553h1.5v1.1h-1.5zM894 556h1.5v1.1h-1.5zM887 622h2.1v1.8h-2.1zM887 625.2h2.1v1.8h-2.1zM873 567h1.2v2.1h-1.2zM873.8 567h1.2v2.1h-1.2zM930 619h1.2v2.1h-1.2zM930.8 619h1.2v2.1h-1.2zM878 617h1.8v2.1h-1.8zM881.2 617h1.8v2.1h-1.8zM907 552h1.1v1.5h-1.1zM916 556h1.2v2.1h-1.2zM926 602h2.1v1.8h-2.1zM926 605.2h2.1v1.8h-2.1zM917 624h2.2v3.1h-2.2zM908 626h1.5v1.1h-1.5zM910.6 626h1.5v1.1h-1.5zM901 627h1.2v2.1h-1.2zM901.8 627h1.2v2.1h-1.2zM894 553h1.5v1.1h-1.5zM901 558h2.6v2.1h-2.6zM933 569h1.1v1.5h-1.1zM933 571.6h1.1v1.5h-1.1zM874 627h1.2v2.1h-1.2zM490.5 576.2h1.8v3.8h-1.8zM494 542.5h1.8v3.8h-1.8zM494 576.2h1.8v3.8h-1.8zM497.5 542.5h1.8v3.8h-1.8zM497.5 576.2h1.8v3.8h-1.8zM501.1 576.2h1.8v3.8h-1.8zM504.6 542.5h1.8v3.8h-1.8zM504.6 576.2h1.8v3.8h-1.8zM508.2 542.5h1.8v3.8h-1.8zM508.2 576.2h1.8v3.8h-1.8zM511.7 542.5h1.8v3.8h-1.8zM511.7 576.2h1.8v3.8h-1.8zM515.3 542.5h1.8v3.8h-1.8zM515.3 576.2h1.8v3.8h-1.8zM485 548h3.8v1.8h-3.8zM518.7 548h3.8v1.8h-3.8zM485 551.5h3.8v1.8h-3.8zM518.7 551.5h3.8v1.8h-3.8zM485 555h3.8v1.8h-3.8zM518.7 555h3.8v1.8h-3.8zM485 558.6h3.8v1.8h-3.8zM518.7 558.6h3.8v1.8h-3.8zM485 562.1h3.8v1.8h-3.8zM518.7 562.1h3.8v1.8h-3.8zM485 565.7h3.8v1.8h-3.8zM518.7 565.7h3.8v1.8h-3.8zM485 569.2h3.8v1.8h-3.8zM518.7 569.2h3.8v1.8h-3.8zM485 572.8h3.8v1.8h-3.8zM518.7 572.8h3.8v1.8h-3.8z" fill="#ffd93d"/><path d="M490.5 542.5h1.8v3.8h-1.8zM501.1 542.5h1.8v3.8h-1.8z" fill="#0b7c80"/><path d="M868.5 435.4h17.1v17.1h-17.1zM483.9 541.5h39.6v39.6h-39.6z" fill="none" stroke="#f4f4f4" stroke-width="0.9"/><path d="M820.4 556.4h10.2v13.2h-10.2zM847.4 556.4h11.2v13.2h-11.2zM820.4 576.4h10.2v13.2h-10.2zM847.4 574.4h11.2v12.2h-11.2zM830.4 591.4h9.2v17.2h-9.2zM846.4 607.4h12.2v10.2h-12.2z" fill="none" stroke="#f4f4f4" stroke-width="0.8"/><path d="M833.5 557.5h5v11.1h-5zM860.5 561.5h6v9.1h-6zM833.5 574.5h6v9.1h-6zM860.5 574.5h6v10.1h-6zM842.5 594.5h5v9.1h-5zM849.5 594.5h5v9.1h-5zM855.5 594.5h5v9.1h-5zM820.5 623.5h5v6h-5zM827.5 623.5h5v6h-5zM890.5 515.5h7v13.1h-7zM886.5 520.5h3v8.1h-3zM880.5 526.5h5v2h-5zM886.5 531.5h3v6h-3zM883.5 508.5h6v11.1h-6zM880.5 520.5h4v4h-4zM874.5 526.5h5v2h-5zM852.5 531.5h6v11.1h-6zM852.5 522.5h2v5h-2zM892.5 531.5h3v6h-3zM899.5 515.5h7v13.1h-7zM886.5 541.5h7v4h-7zM852.5 543.5h9.1v5h-9.1zM848.5 524.5h3v3h-3zM860.5 531.5h6v3h-6zM862.5 535.5h13.1v7h-13.1zM883.5 504.5h8.1v3h-8.1zM842.5 524.5h5v2h-5zM871.5 494.5h6v3h-6zM878.5 512.5h4v7h-4zM871.5 508.5h8.1v3h-8.1zM826.5 465.5h9.1v5h-9.1zM881.5 541.5h4v7h-4zM880.5 494.5h6v3h-6zM832.5 431.5h6v3h-6zM874.5 522.5h3v3h-3zM843.5 528.5h8.1v3h-8.1zM866.5 485.5h11.1v6h-11.1zM871.5 498.5h3v8.1h-3zM869.5 522.5h4v7h-4zM867.5 508.5h3v8.1h-3zM852.5 511.5h5v9.1h-5zM848.5 535.5h3v8.1h-3zM810.5 465.5h13.1v7h-13.1zM855.5 521.5h3v6h-3zM807.5 521.5h6v11.1h-6zM896.5 545.5h5v2h-5zM867.5 498.5h3v8.1h-3zM838.5 543.5h4v4h-4zM878.5 485.5h3v6h-3zM876.5 541.5h3v6h-3zM833.5 523.5h8.1v3h-8.1zM859.5 485.5h6v3h-6zM886.5 538.5h5v2h-5zM859.5 477.5h4v7h-4zM853.5 459.5h4v4h-4zM851.5 485.5h7v4h-7zM810.5 455.5h11.1v6h-11.1zM866.5 481.5h3v3h-3zM880.5 535.5h5v2h-5zM844.5 545.5h6v3h-6zM859.5 522.5h6v3h-6zM824.5 538.5h13.1v7h-13.1zM810.5 462.5h5v2h-5zM834.5 438.5h4v7h-4zM862.5 527.5h5v2h-5zM849.5 475.5h7v4h-7zM826.5 523.5h5v2h-5zM859.5 470.5h3v6h-3zM853.5 431.5h5v9.1h-5zM804.5 462.5h3v3h-3zM859.5 463.5h9.1v5h-9.1zM815.5 521.5h4v4h-4zM867.5 531.5h8.1v3h-8.1zM845.5 431.5h6v3h-6zM865.5 429.5h9.1v5h-9.1zM902.5 544.5h6v3h-6zM845.5 428.5h5v2h-5zM849.5 480.5h8.1v3h-8.1zM878.5 498.5h3v6h-3zM901.5 530.5h7v13.1h-7zM896.5 530.5h4v7h-4zM833.5 428.5h5v2h-5zM923.5 529.5h13.1v7h-13.1zM819.5 529.5h6v3h-6zM859.5 492.5h7v13.1h-7zM859.5 454.5h11.1v6h-11.1zM858.5 511.5h6v3h-6zM909.5 537.5h3v6h-3zM886.5 433.5h2v5h-2zM882.5 488.5h6v3h-6zM838.5 458.5h11.1v6h-11.1zM911.5 544.5h7v4h-7zM838.5 468.5h7v4h-7zM854.5 492.5h4v4h-4zM804.5 457.5h3v3h-3zM845.5 511.5h6v3h-6zM849.5 467.5h4v7h-4zM882.5 458.5h2v5h-2zM842.5 475.5h5v2h-5zM882.5 474.5h7v13.1h-7zM826.5 472.5h3v3h-3zM823.5 455.5h11.1v6h-11.1zM814.5 527.5h2v5h-2zM854.5 464.5h3v8.1h-3zM876.5 458.5h4v4h-4zM934.5 519.5h5v2h-5zM820.5 523.5h2v5h-2zM853.5 441.5h5v2h-5zM913.5 529.5h8.1v3h-8.1zM879.5 531.5h6v3h-6zM849.5 503.5h2v5h-2zM921.5 539.5h5v2h-5zM818.5 475.5h5v2h-5zM863.5 543.5h3v6h-3zM843.5 532.5h2v5h-2zM845.5 435.5h6v11.1h-6zM909.5 528.5h3v8.1h-3zM812.5 448.5h3v6h-3zM853.5 449.5h3v8.1h-3zM877.5 429.5h6v3h-6zM882.5 454.5h3v3h-3zM921.5 543.5h8.1v3h-8.1zM860.5 429.5h2v5h-2zM849.5 500.5h5v2h-5zM890.5 508.5h2v5h-2zM917.5 538.5h3v3h-3zM839.5 539.5h8.1v3h-8.1zM940.5 529.5h5v9.1h-5zM878.5 478.5h3v3h-3zM882.5 498.5h5v2h-5zM867.5 492.5h2v5h-2zM940.5 541.5h13.1v7h-13.1zM829.5 438.5h3v6h-3zM810.5 475.5h7v4h-7zM814.5 536.5h6v3h-6zM926.5 519.5h4v4h-4zM934.5 522.5h6v3h-6zM814.5 542.5h9.1v5h-9.1zM834.5 531.5h3v6h-3zM931.5 519.5h2v5h-2zM896.5 540.5h4v4h-4zM822.5 447.5h3v6h-3zM949.5 518.5h3v6h-3zM826.5 447.5h13.1v7h-13.1zM849.5 491.5h3v8.1h-3zM874.5 515.5h3v6h-3zM824.5 438.5h3v6h-3zM805.5 536.5h8.1v3h-8.1zM803.5 529.5h3v3h-3zM928.5 539.5h5v2h-5zM947.5 529.5h3v6h-3zM841.5 435.5h3v3h-3zM818.5 446.5h3v6h-3zM951.5 529.5h3v8.1h-3zM852.5 444.5h6v3h-6zM860.5 444.5h7v4h-7zM943.5 519.5h4v7h-4zM828.5 527.5h3v6h-3zM847.5 448.5h5v9.1h-5zM859.5 440.5h6v3h-6zM839.5 428.5h5v2h-5zM840.5 442.5h4v4h-4zM848.5 517.5h3v6h-3zM943.5 510.5h4v7h-4zM805.5 533.5h5v2h-5zM800.5 536.5h3v3h-3zM876.5 535.5h2v5h-2zM830.5 472.5h3v6h-3zM823.5 521.5h2v5h-2zM840.5 449.5h3v3h-3zM818.5 478.5h7v4h-7zM872.5 466.5h9.1v5h-9.1zM839.5 532.5h3v6h-3zM934.5 541.5h3v3h-3zM845.5 480.5h3v6h-3zM865.5 518.5h6v3h-6zM866.5 475.5h8.1v3h-8.1zM913.5 533.5h6v3h-6zM809.5 540.5h4v7h-4zM920.5 520.5h3v3h-3zM934.5 537.5h5v2h-5zM852.5 528.5h5v2h-5zM915.5 520.5h3v6h-3zM920.5 513.5h3v6h-3zM800.5 540.5h8.1v3h-8.1zM870.5 481.5h6v3h-6zM941.5 500.5h6v3h-6zM832.5 527.5h6v3h-6zM889.5 494.5h3v6h-3zM804.5 468.5h4v4h-4zM931.5 513.5h6v3h-6zM800.5 503.5h3v6h-3zM882.5 464.5h3v6h-3zM800.5 475.5h8.1v3h-8.1zM924.5 547.5h5v2h-5zM845.5 499.5h3v3h-3zM943.5 505.5h6v3h-6zM951.5 505.5h8.1v3h-8.1zM912.5 513.5h7v4h-7zM865.5 471.5h3v3h-3zM846.5 503.5h2v5h-2zM859.5 449.5h7v4h-7zM949.5 512.5h4v4h-4zM803.5 521.5h2v5h-2zM852.5 503.5h4v7h-4zM861.5 515.5h3v3h-3zM929.5 604.5h3v6h-3zM929.5 614.5h3v3h-3zM929.5 597.5h3v6h-3zM926.5 585.5h6v11.1h-6zM926.5 581.5h3v3h-3zM925.5 614.5h3v8.1h-3zM878.5 588.5h4v4h-4zM925.5 623.5h8.1v3h-8.1zM881.5 558.5h3v6h-3zM866.5 588.5h11.1v6h-11.1zM878.5 593.5h6v3h-6zM926.5 572.5h4v7h-4zM875.5 580.5h2v5h-2zM881.5 567.5h3v8.1h-3zM926.5 568.5h5v2h-5zM877.5 558.5h3v6h-3zM878.5 584.5h6v3h-6zM870.5 580.5h2v5h-2zM938.5 556.5h3v6h-3zM877.5 567.5h3v8.1h-3zM932.5 556.5h4v4h-4zM924.5 555.5h6v3h-6zM935.5 567.5h3v3h-3zM881.5 576.5h3v6h-3zM874.5 597.5h3v3h-3zM872.5 558.5h3v6h-3zM874.5 601.5h7v4h-7zM911.5 552.5h3v8.1h-3zM880.5 597.5h3v3h-3zM868.5 563.5h3v6h-3zM919.5 554.5h4v4h-4zM924.5 551.5h8.1v3h-8.1zM874.5 576.5h5v2h-5zM932.5 561.5h3v3h-3zM877.5 610.5h6v3h-6zM867.5 597.5h6v11.1h-6zM878.5 554.5h6v3h-6zM869.5 610.5h7v13.1h-7zM928.5 564.5h3v3h-3zM869.5 554.5h8.1v3h-8.1zM925.5 608.5h3v3h-3zM876.5 606.5h5v2h-5zM942.5 551.5h6v11.1h-6zM888.5 553.5h4v4h-4zM870.5 570.5h3v6h-3zM877.5 621.5h5v9.1h-5zM933.5 552.5h5v2h-5zM893.5 555.5h5v2h-5zM886.5 621.5h3v6h-3zM872.5 566.5h3v3h-3zM929.5 618.5h3v3h-3zM877.5 616.5h6v3h-6zM906.5 551.5h2v5h-2zM893.5 626.5h6v3h-6zM915.5 555.5h3v3h-3zM925.5 601.5h3v6h-3zM916.5 623.5h7v4h-7zM907.5 625.5h5v2h-5zM900.5 626.5h3v3h-3zM893.5 552.5h5v2h-5zM900.5 557.5h8.1v3h-8.1zM932.5 568.5h2v5h-2zM873.5 626.5h3v3h-3z" fill="none" stroke="#f4f4f4" stroke-width="0.95"/><circle cx="503.8" cy="561.2" r="2.4" fill="#0000ff"/><path d="M528 521h9v10h-9zM555 523.5h2v3h-2zM559 523.5h2v3h-2z" fill="#8a8a8a"/><path d="M527 518h1.5v2.5h-1.5zM527 532h1.5v2.5h-1.5zM525 521h2.5v1.5h-2.5zM538 521h2.5v1.5h-2.5zM530.5 518h1.5v2.5h-1.5zM530.5 532h1.5v2.5h-1.5zM525 524.5h2.5v1.5h-2.5zM538 524.5h2.5v1.5h-2.5zM534 518h1.5v2.5h-1.5zM534 532h1.5v2.5h-1.5zM525 528h2.5v1.5h-2.5zM538 528h2.5v1.5h-2.5zM555 541h2v3h-2zM554 526h3v2h-3zM569 526h3v2h-3zM559 541h2v3h-2zM554 530h3v2h-3zM569 530h3v2h-3zM563 523.5h2v3h-2zM563 541h2v3h-2zM554 534h3v2h-3zM569 534h3v2h-3zM567 523.5h2v3h-2zM567 541h2v3h-2zM554 538h3v2h-3zM569 538h3v2h-3z" fill="#ffd93d"/><path d="M524.5 517.5h16.1v17.6h-16.1zM553.5 522.5h19.1v22.1h-19.1z" fill="none" stroke="#f4f4f4" stroke-width="0.9"/><path d="M575 528.8 L577.2 531 L575 533.2 L572.8 531 Z" fill="#ffd93d"/><path d="M575 532.8 L577.2 535 L575 537.2 L572.8 535 Z" fill="#ffd93d"/><path d="M575 536.8 L577.2 539 L575 541.2 L572.8 539 Z" fill="#ffd93d"/><path d="M575 540.8 L577.2 543 L575 545.2 L572.8 543 Z" fill="#ffd93d"/><path d="M567.4 562.4h7.2v11.2h-7.2z" fill="none" stroke="#f4f4f4" stroke-width="0.8"/><path d="M568.2 565h2.5M569.5 563.7v2.5M571.2 565h2.5M572.5 563.7v2.5M568.2 568h2.5M569.5 566.7v2.5M571.2 568h2.5M572.5 566.7v2.5M568.2 571h2.5M569.5 569.7v2.5M571.2 571h2.5M572.5 569.7v2.5" fill="none" stroke="#ffd93d" stroke-width="1.1"/><circle cx="569.6" cy="568.6" r="2.4" fill="#0000ff"/><path d="M575 578h5.1v4.4h-5.1zM575 585.7h5.1v4.4h-5.1z" fill="#ffd93d"/><path d="M574.5 577.5h6v13.1h-6z" fill="none" stroke="#f4f4f4" stroke-width="0.95"/><circle cx="576.3" cy="584.4" r="2.4" fill="#0000ff"/><path d="M583 573h15v7.5h-15zM583 584h15v8h-15z" fill="#ffd93d"/><path d="M582.5 572.5h16.1v20.1h-16.1z" fill="none" stroke="#f4f4f4" stroke-width="0.9"/><circle cx="591.4" cy="582.3" r="2.4" fill="#0000ff"/><path d="M568 578h4.1v4.7h-4.1z" fill="#8a8a8a"/><path d="M568 586.3h4.1v4.7h-4.1zM690 494.9h12.1v5.1h-12.1zM690 504h12.1v5.1h-12.1zM690 514h12.1v5.4h-12.1zM690 523.6h12.1v5.4h-12.1zM692 551h10.1v5.4h-10.1zM692 560.6h10.1v5.4h-10.1zM698 572h8.1v4h-8.1zM698 579.1h8.1v4h-8.1zM702 588h5.1v11.1h-5.1zM711 588h5.1v11.1h-5.1z" fill="#ffd93d"/><path d="M567.5 577.5h5v14.1h-5zM689.5 494.5h13.1v15.1h-13.1zM689.5 513.5h13.1v16.1h-13.1zM691.5 550.5h11.1v16.1h-11.1zM697.5 571.5h9.1v12.1h-9.1zM701.5 587.5h15.1v12.1h-15.1z" fill="none" stroke="#f4f4f4" stroke-width="0.95"/><path d="M715.4 514.4h49.2v47.2h-49.2z" fill="none" stroke="#f4f4f4" stroke-width="0.8"/><path d="M716.8 517.9h2.9M718.3 516.4v2.9M719.9 517.9h2.9M721.4 516.4v2.9M723 517.9h2.9M724.5 516.4v2.9M726.1 517.9h2.9M727.6 516.4v2.9M732.3 517.9h2.9M733.8 516.4v2.9M738.5 517.9h2.9M740 516.4v2.9M744.7 517.9h2.9M746.2 516.4v2.9M757.1 517.9h2.9M758.6 516.4v2.9M719.9 521h2.9M721.4 519.5v2.9M723 521h2.9M724.5 519.5v2.9M726.1 521h2.9M727.6 519.5v2.9M729.2 521h2.9M730.7 519.5v2.9M732.3 521h2.9M733.8 519.5v2.9M738.5 521h2.9M740 519.5v2.9M741.6 521h2.9M743.1 519.5v2.9M744.7 521h2.9M746.2 519.5v2.9M747.8 521h2.9M749.3 519.5v2.9M750.9 521h2.9M752.4 519.5v2.9M754 521h2.9M755.5 519.5v2.9M757.1 521h2.9M758.6 519.5v2.9M760.2 521h2.9M761.7 519.5v2.9M716.8 524.1h2.9M718.3 522.6v2.9M719.9 524.1h2.9M721.4 522.6v2.9M723 524.1h2.9M724.5 522.6v2.9M726.1 524.1h2.9M727.6 522.6v2.9M729.2 524.1h2.9M730.7 522.6v2.9M732.3 524.1h2.9M733.8 522.6v2.9M741.6 524.1h2.9M743.1 522.6v2.9M744.7 524.1h2.9M746.2 522.6v2.9M747.8 524.1h2.9M749.3 522.6v2.9M754 524.1h2.9M755.5 522.6v2.9M757.1 524.1h2.9M758.6 522.6v2.9M760.2 524.1h2.9M761.7 522.6v2.9M719.9 527.1h2.9M721.4 525.7v2.9M732.3 527.1h2.9M733.8 525.7v2.9M735.4 527.1h2.9M736.9 525.7v2.9M741.6 527.1h2.9M743.1 525.7v2.9M744.7 527.1h2.9M746.2 525.7v2.9M747.8 527.1h2.9M749.3 525.7v2.9M754 527.1h2.9M755.5 525.7v2.9M757.1 527.1h2.9M758.6 525.7v2.9M760.2 527.1h2.9M761.7 525.7v2.9M723 530.2h2.9M724.5 528.8v2.9M729.2 530.2h2.9M730.7 528.8v2.9M732.3 530.2h2.9M733.8 528.8v2.9M735.4 530.2h2.9M736.9 528.8v2.9M738.5 530.2h2.9M740 528.8v2.9M744.7 530.2h2.9M746.2 528.8v2.9M750.9 530.2h2.9M752.4 528.8v2.9M754 530.2h2.9M755.5 528.8v2.9M757.1 530.2h2.9M758.6 528.8v2.9M716.8 533.4h2.9M718.3 531.9v2.9M719.9 533.4h2.9M721.4 531.9v2.9M723 533.4h2.9M724.5 531.9v2.9M726.1 533.4h2.9M727.6 531.9v2.9M732.3 533.4h2.9M733.8 531.9v2.9M735.4 533.4h2.9M736.9 531.9v2.9M738.5 533.4h2.9M740 531.9v2.9M741.6 533.4h2.9M743.1 531.9v2.9M747.8 533.4h2.9M749.3 531.9v2.9M750.9 533.4h2.9M752.4 531.9v2.9M754 533.4h2.9M755.5 531.9v2.9M723 536.5h2.9M724.5 535v2.9M726.1 536.5h2.9M727.6 535v2.9M729.2 536.5h2.9M730.7 535v2.9M732.3 536.5h2.9M733.8 535v2.9M735.4 536.5h2.9M736.9 535v2.9M738.5 536.5h2.9M740 535v2.9M741.6 536.5h2.9M743.1 535v2.9M747.8 536.5h2.9M749.3 535v2.9M750.9 536.5h2.9M752.4 535v2.9M757.1 536.5h2.9M758.6 535v2.9M719.9 539.6h2.9M721.4 538.1v2.9M726.1 539.6h2.9M727.6 538.1v2.9M732.3 539.6h2.9M733.8 538.1v2.9M735.4 539.6h2.9M736.9 538.1v2.9M738.5 539.6h2.9M740 538.1v2.9M747.8 539.6h2.9M749.3 538.1v2.9M750.9 539.6h2.9M752.4 538.1v2.9M754 539.6h2.9M755.5 538.1v2.9M757.1 539.6h2.9M758.6 538.1v2.9M760.2 539.6h2.9M761.7 538.1v2.9M716.8 542.6h2.9M718.3 541.2v2.9M719.9 542.6h2.9M721.4 541.2v2.9M723 542.6h2.9M724.5 541.2v2.9M726.1 542.6h2.9M727.6 541.2v2.9M735.4 542.6h2.9M736.9 541.2v2.9M738.5 542.6h2.9M740 541.2v2.9M741.6 542.6h2.9M743.1 541.2v2.9M744.7 542.6h2.9M746.2 541.2v2.9M747.8 542.6h2.9M749.3 541.2v2.9M754 542.6h2.9M755.5 541.2v2.9M757.1 542.6h2.9M758.6 541.2v2.9M760.2 542.6h2.9M761.7 541.2v2.9M716.8 545.8h2.9M718.3 544.3v2.9M719.9 545.8h2.9M721.4 544.3v2.9M726.1 545.8h2.9M727.6 544.3v2.9M729.2 545.8h2.9M730.7 544.3v2.9M732.3 545.8h2.9M733.8 544.3v2.9M735.4 545.8h2.9M736.9 544.3v2.9M738.5 545.8h2.9M740 544.3v2.9M747.8 545.8h2.9M749.3 544.3v2.9M757.1 545.8h2.9M758.6 544.3v2.9M760.2 545.8h2.9M761.7 544.3v2.9M716.8 548.9h2.9M718.3 547.4v2.9M719.9 548.9h2.9M721.4 547.4v2.9M723 548.9h2.9M724.5 547.4v2.9M729.2 548.9h2.9M730.7 547.4v2.9M732.3 548.9h2.9M733.8 547.4v2.9M738.5 548.9h2.9M740 547.4v2.9M744.7 548.9h2.9M746.2 547.4v2.9M747.8 548.9h2.9M749.3 547.4v2.9M750.9 548.9h2.9M752.4 547.4v2.9M754 548.9h2.9M755.5 547.4v2.9M716.8 552h2.9M718.3 550.5v2.9M719.9 552h2.9M721.4 550.5v2.9M729.2 552h2.9M730.7 550.5v2.9M732.3 552h2.9M733.8 550.5v2.9M735.4 552h2.9M736.9 550.5v2.9M738.5 552h2.9M740 550.5v2.9M744.7 552h2.9M746.2 550.5v2.9M747.8 552h2.9M749.3 550.5v2.9M750.9 552h2.9M752.4 550.5v2.9M757.1 552h2.9M758.6 550.5v2.9M760.2 552h2.9M761.7 550.5v2.9M716.8 555.1h2.9M718.3 553.6v2.9M719.9 555.1h2.9M721.4 553.6v2.9M723 555.1h2.9M724.5 553.6v2.9M726.1 555.1h2.9M727.6 553.6v2.9M729.2 555.1h2.9M730.7 553.6v2.9M735.4 555.1h2.9M736.9 553.6v2.9M747.8 555.1h2.9M749.3 553.6v2.9M750.9 555.1h2.9M752.4 553.6v2.9M754 555.1h2.9M755.5 553.6v2.9M760.2 555.1h2.9M761.7 553.6v2.9M716.8 558.1h2.9M718.3 556.7v2.9M723 558.1h2.9M724.5 556.7v2.9M729.2 558.1h2.9M730.7 556.7v2.9M732.3 558.1h2.9M733.8 556.7v2.9M735.4 558.1h2.9M736.9 556.7v2.9M738.5 558.1h2.9M740 556.7v2.9M741.6 558.1h2.9M743.1 556.7v2.9M744.7 558.1h2.9M746.2 556.7v2.9M747.8 558.1h2.9M749.3 556.7v2.9M754 558.1h2.9M755.5 556.7v2.9M757.1 558.1h2.9M758.6 556.7v2.9M760.2 558.1h2.9M761.7 556.7v2.9" fill="none" stroke="#ffd93d" stroke-width="1.1"/><path d="M735.4 517.9h2.9M736.9 516.4v2.9M750.9 517.9h2.9M752.4 516.4v2.9M760.2 517.9h2.9M761.7 516.4v2.9M735.4 521h2.9M736.9 519.5v2.9M735.4 524.1h2.9M736.9 522.6v2.9M738.5 524.1h2.9M740 522.6v2.9M716.8 527.1h2.9M718.3 525.7v2.9M723 527.1h2.9M724.5 525.7v2.9M726.1 527.1h2.9M727.6 525.7v2.9M750.9 527.1h2.9M752.4 525.7v2.9M744.7 533.4h2.9M746.2 531.9v2.9M754 536.5h2.9M755.5 535v2.9M741.6 539.6h2.9M743.1 538.1v2.9M729.2 542.6h2.9M730.7 541.2v2.9M744.7 545.8h2.9M746.2 544.3v2.9M754 552h2.9M755.5 550.5v2.9M757.1 555.1h2.9M758.6 553.6v2.9M719.9 558.1h2.9M721.4 556.7v2.9" fill="none" stroke="#8a8a8a" stroke-width="1.1"/><path d="M741.6 517.9h2.9M743.1 516.4v2.9M754 517.9h2.9M755.5 516.4v2.9M716.8 521h2.9M718.3 519.5v2.9M750.9 524.1h2.9M752.4 522.6v2.9M729.2 527.1h2.9M730.7 525.7v2.9M741.6 530.2h2.9M743.1 528.8v2.9M729.2 533.4h2.9M730.7 531.9v2.9M744.7 539.6h2.9M746.2 538.1v2.9M754 545.8h2.9M755.5 544.3v2.9M723 552h2.9M724.5 550.5v2.9M726.1 552h2.9M727.6 550.5v2.9M738.5 555.1h2.9M740 553.6v2.9M741.6 555.1h2.9M743.1 553.6v2.9M750.9 558.1h2.9M752.4 556.7v2.9" fill="none" stroke="#0b7c80" stroke-width="1.1"/><circle cx="740.4" cy="537.7" r="2.4" fill="#0000ff"/><circle cx="708" cy="556" r="2.3" fill="#0000ff"/><path d="M711 593h12v5.2h-12zM711 599.8h12v4.2h-12zM731 593h12v5.2h-12zM731 599.8h12v4.2h-12zM751 591h12v6.4h-12zM751 599.6h12v5.4h-12zM498.9 531h2.1v2.6h-2.1zM498.9 535.5h2.1v2.6h-2.1zM502.5 509.9h2.6v2.1h-2.6zM481.9 531h4.4v6.1h-4.4zM489.7 531h4.4v6.1h-4.4zM510.9 511.9h2.1v1.8h-2.1zM510.9 515.2h2.1v1.8h-2.1zM542 516h5.1v3.6h-5.1zM542 522.4h5.1v3.6h-5.1zM498.9 526h1.2v2.1h-1.2zM502.5 516h2.6v2.1h-2.6zM502.9 534.9h3.1v2.2h-3.1zM494.9 523h2.1v1.8h-2.1zM494.9 526.2h2.1v1.8h-2.1zM502.9 524h2.1v1.8h-2.1zM502.9 527.2h2.1v1.8h-2.1zM491.9 524h1.1v1.5h-1.1zM491.9 526.6h1.1v1.5h-1.1zM507.9 511.9h1.1v1.5h-1.1zM515 510.9h2.1v1.8h-2.1zM515 514.2h2.1v1.8h-2.1zM542 531h2.6v2.1h-2.6zM546.5 531h2.6v2.1h-2.6zM481.9 520h4.1v2.9h-4.1zM481.9 525.1h4.1v2.9h-4.1zM480.9 505.9h1.2v2.1h-1.2zM481.9 505.9h1.2v2.1h-1.2zM507.9 503.9h3.1v2.2h-3.1zM507.9 507.9h3.1v2.2h-3.1zM507.9 527.9h3.1v2.2h-3.1zM485.9 512.4h5.1v3.6h-5.1zM514 524h1.8v2.1h-1.8zM492.9 501.9h1.2v2.1h-1.2zM493.9 501.9h1.2v2.1h-1.2zM514 528h1.1v1.5h-1.1zM525.9 511.9h2.2v3.1h-2.2zM525 503.9h3.1v2.2h-3.1zM525 507.9h3.1v2.2h-3.1zM533.9 511.9h2.2v3.1h-2.2zM507.9 534h1.2v2.1h-1.2zM497.9 503.9h1.1v1.5h-1.1zM497.9 506.6h1.1v1.5h-1.1zM542 535h1.2v2.1h-1.2zM542.8 535h1.2v2.1h-1.2zM537 501.9h1.8v2.1h-1.8zM540.2 501.9h1.8v2.1h-1.8zM500.9 503.9h1.1v1.5h-1.1zM478.9 531h1.1v1.5h-1.1zM478.9 533.6h1.1v1.5h-1.1zM513 503.9h2.1v1.8h-2.1zM513 507.2h2.1v1.8h-2.1zM511.9 534h1.8v2.1h-1.8zM518 503.9h2.1v1.8h-2.1zM519 513h1.1v1.5h-1.1zM519 515.6h1.1v1.5h-1.1zM480.9 501.9h1.2v2.1h-1.2zM481.9 501.9h1.2v2.1h-1.2zM530 500.9h4.1v2.9h-4.1zM493.9 514h1.2v2.1h-1.2zM494.9 514h1.2v2.1h-1.2zM510.9 520h2.6v2.1h-2.6zM487.9 520h1.2v2.1h-1.2zM488.9 520h1.2v2.1h-1.2zM491.9 520h1.5v1.1h-1.5zM546 501.9h1.5v1.1h-1.5zM548.6 501.9h1.5v1.1h-1.5zM492.9 508.6h1.1v1.5h-1.1zM488.9 524h1.1v1.5h-1.1zM478.9 523h1.1v1.5h-1.1zM495.9 533h1.1v1.5h-1.1zM495.9 535.6h1.1v1.5h-1.1zM501.9 520h1.5v1.1h-1.5zM504.6 520h1.5v1.1h-1.5zM564 507.9h2.1v2.6h-2.1zM556.8 507.9h1.2v3.1h-1.2zM568 507.9h1.8v2.1h-1.8zM571.2 507.9h1.8v2.1h-1.8zM574.4 511.9h3.6v5.1h-3.6zM580 511.9h2.1v2.6h-2.1zM571.6 501.9h1.5v1.1h-1.5zM580 502.9h4.4v6.1h-4.4zM575 507.9h1.2v2.1h-1.2zM575.8 507.9h1.2v2.1h-1.2zM558 519h1.5v1.1h-1.5zM560.6 519h1.5v1.1h-1.5zM587 498.9h1.2v2.1h-1.2zM587.8 498.9h1.2v2.1h-1.2zM584 517.2h2.1v1.8h-2.1zM568 497.9h1.8v2.1h-1.8zM571.2 497.9h1.8v2.1h-1.8zM563 497.9h1.1v1.5h-1.1zM563 500.6h1.1v1.5h-1.1zM576.8 499.9h1.2v3.1h-1.2zM581 534h2.6v2.1h-2.6zM585.5 534h2.6v2.1h-2.6zM590 534h2.1v1.8h-2.1zM590 537.2h2.1v1.8h-2.1zM590 529h1.2v3.1h-1.2zM591.8 529h1.2v3.1h-1.2zM576 537.9h3.1v2.2h-3.1zM678 524h3.6v5.1h-3.6zM684.4 524h3.6v5.1h-3.6zM590 541h4.1v2.9h-4.1zM590 546.1h4.1v2.9h-4.1zM627 524h3.6v5.1h-3.6zM674 527.2h2.1v1.8h-2.1zM604 549h1.1v1.5h-1.1zM604 551.6h1.1v1.5h-1.1zM595 523h5.1v3.6h-5.1zM581 530h2.6v2.1h-2.6zM673 531h1.2v3.1h-1.2zM674.8 531h1.2v3.1h-1.2zM596 549h2.2v3.1h-2.2zM599.9 549h2.2v3.1h-2.2zM581 526h1.8v2.1h-1.8zM584.2 526h1.8v2.1h-1.8zM590 554h1.8v2.1h-1.8zM593.2 554h1.8v2.1h-1.8zM684 544h1.5v1.1h-1.5zM611 540h4.1v2.9h-4.1zM607 538h2.1v2.6h-2.1zM607 542.5h2.1v2.6h-2.1zM607 550h1.8v2.1h-1.8zM639 524h1.8v2.1h-1.8zM611 533h1.1v1.5h-1.1zM611 535.6h1.1v1.5h-1.1zM684 540h1.5v1.1h-1.5zM617 541h2.1v2.6h-2.1zM617 545.5h2.1v2.6h-2.1zM576 551h2.1v1.8h-2.1zM576 554.2h2.1v1.8h-2.1zM616 535h1.8v2.1h-1.8zM619.2 535h1.8v2.1h-1.8zM674 538h1.2v2.1h-1.2zM674.8 538h1.2v2.1h-1.2zM646 543h2.9v4.1h-2.9zM651.1 543h2.9v4.1h-2.9zM642 534.2h2.1v1.8h-2.1zM596 541h2.1v1.8h-2.1zM596 544.2h2.1v1.8h-2.1zM679 548h1.8v2.1h-1.8zM668 554h4.4v6.1h-4.4zM667 524h1.8v2.1h-1.8zM670.2 524h1.8v2.1h-1.8zM646 533.6h1.1v1.5h-1.1zM683 554h1.5v1.1h-1.5zM630.1 535h2.9v4.1h-2.9zM671 543h2.1v1.8h-2.1zM586 545h2.1v1.8h-2.1zM586 548.2h2.1v1.8h-2.1zM624 542h3.6v5.1h-3.6zM642 541h2.1v1.8h-2.1zM642 544.2h2.1v1.8h-2.1zM631 531h2.6v2.1h-2.6zM635.5 531h2.6v2.1h-2.6zM585 554h1.2v3.1h-1.2zM651.2 539h1.8v2.1h-1.8zM626 552h2.9v4.1h-2.9zM631.1 552h2.9v4.1h-2.9zM576.8 558h1.2v2.1h-1.2zM644 552h4.4v6.1h-4.4zM619 554h1.8v2.1h-1.8zM622.2 554h1.8v2.1h-1.8zM661 530h1.2v2.1h-1.2zM661.8 530h1.2v2.1h-1.2zM667 543h2.1v2.6h-2.1zM660 552h2.1v2.6h-2.1zM660 556.5h2.1v2.6h-2.1zM607 531h1.2v2.1h-1.2zM667 536h1.8v2.1h-1.8zM607 555h1.8v2.1h-1.8zM610.2 555h1.8v2.1h-1.8zM614 550h1.5v1.1h-1.5zM616.6 550h1.5v1.1h-1.5zM650 530h2.1v1.8h-2.1zM650 533.2h2.1v1.8h-2.1zM619 531h1.2v2.1h-1.2zM599 555h2.1v1.8h-2.1zM669 529h1.1v1.5h-1.1zM669 531.6h1.1v1.5h-1.1zM686 548h1.1v1.5h-1.1zM686 550.6h1.1v1.5h-1.1zM678 531h2.9v4.1h-2.9zM683.1 531h2.9v4.1h-2.9zM678 538h1.2v2.1h-1.2zM653 524h1.2v3.1h-1.2zM654.8 524h1.2v3.1h-1.2zM626 531h1.2v2.1h-1.2zM626.8 531h1.2v2.1h-1.2zM557 581h2.1v1.8h-2.1zM557 584.2h2.1v1.8h-2.1zM557 593.6h1.1v1.5h-1.1zM557 573.4h5.1v3.6h-5.1zM563.8 583h1.2v3.1h-1.2zM557 561h1.8v2.1h-1.8zM560.2 561h1.8v2.1h-1.8zM603 564h1.1v1.5h-1.1zM603 566.6h1.1v1.5h-1.1zM568 575h1.5v1.1h-1.5zM570.6 575h1.5v1.1h-1.5zM562 593.6h1.1v1.5h-1.1zM555 557h2.6v2.1h-2.6zM559.5 557h2.6v2.1h-2.6zM600 578h2.1v1.8h-2.1zM600 581.2h2.1v1.8h-2.1zM564 561h2.1v2.6h-2.1zM600 574h1.2v2.1h-1.2zM600 585h2.1v2.6h-2.1zM559 547h1.2v2.1h-1.2zM565 547h2.6v2.1h-2.6zM569.5 547h2.6v2.1h-2.6zM593 564h1.1v1.5h-1.1zM593 566.6h1.1v1.5h-1.1zM564 570h1.1v1.5h-1.1zM564 572.6h1.1v1.5h-1.1zM556 588h1.5v1.1h-1.5zM558.6 588h1.5v1.1h-1.5zM570 556.5h2.1v2.6h-2.1zM724 469.9h1.2v2.1h-1.2zM724.8 469.9h1.2v2.1h-1.2zM729 469.9h5.1v3.6h-5.1zM729 476.4h5.1v3.6h-5.1zM722 478.2h2.1v1.8h-2.1zM717 469.9h1.5v1.1h-1.5zM719.6 469.9h1.5v1.1h-1.5zM710 469.9h4.1v2.9h-4.1zM710 475.1h4.1v2.9h-4.1zM716 473.9h3.1v2.2h-3.1zM713.2 481.9h1.8v2.1h-1.8zM722 482.9h2.1v1.8h-2.1zM722 486.2h2.1v1.8h-2.1zM737 469.9h2.1v2.6h-2.1zM737 474.5h2.1v2.6h-2.1zM729 483.9h2.1v1.8h-2.1zM702 469.9h4.1v2.9h-4.1zM702 475.1h4.1v2.9h-4.1zM744 469.9h4.4v6.1h-4.4zM703 481.9h1.8v2.1h-1.8zM717 481.9h3.1v2.2h-3.1zM695 480.9h2.2v3.1h-2.2zM698.9 480.9h2.2v3.1h-2.2zM758 469.9h1.2v2.1h-1.2zM758.8 469.9h1.2v2.1h-1.2zM720 489.9h4.1v2.9h-4.1zM720 495.1h4.1v2.9h-4.1zM667 499.9h1.5v1.1h-1.5zM737 479.9h2.1v1.8h-2.1zM737 483.2h2.1v1.8h-2.1zM689 482.2h2.1v1.8h-2.1zM753.9 478.9h2.2v3.1h-2.2zM760 501.9h2.2v3.1h-2.2zM763.9 501.9h2.2v3.1h-2.2zM660 499.9h5.1v3.6h-5.1zM660 506.4h5.1v3.6h-5.1zM670.2 503.9h1.8v2.1h-1.8zM668.8 492.9h1.2v3.1h-1.2zM763 496.9h1.2v3.1h-1.2zM702 462.9h2.1v1.8h-2.1zM733 489.9h6.1v4.4h-6.1zM714 489.9h2.1v1.8h-2.1zM714 493.2h2.1v1.8h-2.1zM763 490.9h1.1v1.5h-1.1zM763 493.6h1.1v1.5h-1.1zM673 485.9h5.1v3.6h-5.1zM762 476.9h1.1v1.5h-1.1zM762 479.6h1.1v1.5h-1.1zM771 496.9h1.2v3.1h-1.2zM772.8 496.9h1.2v3.1h-1.2zM662 489.9h3.1v2.2h-3.1zM662 493.9h3.1v2.2h-3.1zM674 503.9h1.8v2.1h-1.8zM677.2 503.9h1.8v2.1h-1.8zM732 508.9h1.5v1.1h-1.5zM734.6 508.9h1.5v1.1h-1.5zM756.8 506.9h1.2v2.1h-1.2zM770 507.9h2.6v2.1h-2.6zM774.5 507.9h2.6v2.1h-2.6zM758 474.9h1.2v2.1h-1.2zM758.8 474.9h1.2v2.1h-1.2zM761.9 461.9h2.2v3.1h-2.2zM750 494.9h3.6v5.1h-3.6zM782 489.9h2.1v2.6h-2.1zM782 494.5h2.1v2.6h-2.1zM768 461.9h1.2v3.1h-1.2zM769.8 461.9h1.2v3.1h-1.2zM783 461.9h2.1v1.8h-2.1zM783 465.2h2.1v1.8h-2.1zM667 507.9h1.1v1.5h-1.1zM667 510.6h1.1v1.5h-1.1zM705 485.9h3.1v2.2h-3.1zM705 489.9h3.1v2.2h-3.1zM693 470.9h1.2v3.1h-1.2zM680 485.9h1.1v1.5h-1.1zM680 488.6h1.1v1.5h-1.1zM675 480.9h2.2v3.1h-2.2zM762 466.9h4.1v2.9h-4.1zM762 472.1h4.1v2.9h-4.1zM779 507.9h1.8v2.1h-1.8zM710 488.9h1.1v1.5h-1.1zM710 491.6h1.1v1.5h-1.1zM741 506.9h1.8v2.1h-1.8zM744.2 506.9h1.8v2.1h-1.8zM768 476.9h2.1v2.6h-2.1zM768 481.5h2.1v2.6h-2.1zM724.5 499.9h2.6v2.1h-2.6zM725 508.9h1.8v2.1h-1.8zM728.2 508.9h1.8v2.1h-1.8zM774 471.9h1.8v2.1h-1.8zM777.2 471.9h1.8v2.1h-1.8zM778 489.9h1.1v1.5h-1.1zM778 492.6h1.1v1.5h-1.1zM774 465.9h2.6v2.1h-2.6zM778.5 465.9h2.6v2.1h-2.6zM751 503.9h2.1v1.8h-2.1zM751 507.2h2.1v1.8h-2.1zM700 485.9h3.1v2.2h-3.1zM700 489.9h3.1v2.2h-3.1zM656 494.9h1.5v1.1h-1.5zM658.6 494.9h1.5v1.1h-1.5zM674 507.9h1.2v2.1h-1.2zM674.8 507.9h1.2v2.1h-1.2zM778 501.5h2.1v2.6h-2.1zM726 504.9h1.5v1.1h-1.5zM682 503.9h2.1v1.8h-2.1zM712.6 485.9h1.5v1.1h-1.5zM770 504.6h1.1v1.5h-1.1zM680 492.9h1.8v2.1h-1.8zM683.2 492.9h1.8v2.1h-1.8zM683 487.9h2.6v2.1h-2.6zM687.5 487.9h2.6v2.1h-2.6zM710 499.9h5.1v3.6h-5.1zM710 506.4h5.1v3.6h-5.1zM741 497.9h1.1v1.5h-1.1zM684.8 499.9h1.2v2.1h-1.2zM741 478.9h1.8v2.1h-1.8zM741 491.9h1.5v1.1h-1.5zM743.6 491.9h1.5v1.1h-1.5zM717 499.9h1.1v1.5h-1.1zM693 489.9h1.8v2.1h-1.8zM696.2 489.9h1.8v2.1h-1.8zM656 504.9h2.1v1.8h-2.1zM656 508.2h2.1v1.8h-2.1zM726 484.9h1.1v1.5h-1.1zM726 487.6h1.1v1.5h-1.1zM717 505.9h1.2v3.1h-1.2zM718.8 505.9h1.2v3.1h-1.2zM748 458.9h1.8v2.1h-1.8zM750 483.9h1.2v3.1h-1.2zM751.8 483.9h1.2v3.1h-1.2zM706 496.9h2.1v1.8h-2.1zM729 500.6h1.1v1.5h-1.1zM763 483.9h2.1v1.8h-2.1zM763 487.2h2.1v1.8h-2.1zM695 475.9h1.2v2.1h-1.2zM782 483.9h1.2v2.1h-1.2zM782.8 483.9h1.2v2.1h-1.2zM779 458.9h2.1v1.8h-2.1zM779 462.2h2.1v1.8h-2.1zM774 458.9h1.2v3.1h-1.2zM775.8 458.9h1.2v3.1h-1.2zM741 470.9h1.1v1.5h-1.1zM741 473.6h1.1v1.5h-1.1zM784.8 478.9h1.2v2.1h-1.2zM750 491.9h1.5v1.1h-1.5zM678 510.9h1.5v1.1h-1.5zM680.6 510.9h1.5v1.1h-1.5zM667 489.9h1.5v1.1h-1.5zM775 476.9h1.2v3.1h-1.2zM776.8 476.9h1.2v3.1h-1.2zM770 564h1.8v2.1h-1.8zM773.2 564h1.8v2.1h-1.8zM780 564h1.8v2.1h-1.8zM783.2 564h1.8v2.1h-1.8zM803 617h1.1v1.5h-1.1zM790 617h2.9v4.1h-2.9zM795.1 617h2.9v4.1h-2.9zM768 571h2.1v1.8h-2.1zM768 574.2h2.1v1.8h-2.1zM772 573h1.2v3.1h-1.2zM773.8 573h1.2v3.1h-1.2zM799 624h1.8v2.1h-1.8zM802.2 624h1.8v2.1h-1.8zM771.8 557h1.2v3.1h-1.2zM767 562h1.1v1.5h-1.1zM767 564.6h1.1v1.5h-1.1zM784.8 596h1.2v3.1h-1.2zM799 629h2.1v1.8h-2.1zM799 632.2h2.1v1.8h-2.1zM777 577h1.8v2.1h-1.8zM780.2 577h1.8v2.1h-1.8zM786 629h2.9v4.1h-2.9zM791.1 629h2.9v4.1h-2.9zM779.4 629h3.6v5.1h-3.6zM789 564h3.1v2.2h-3.1zM789 567.9h3.1v2.2h-3.1zM769 631h2.1v1.8h-2.1zM769 634.2h2.1v1.8h-2.1zM777 569h1.8v2.1h-1.8zM780.2 569h1.8v2.1h-1.8zM786 623h1.8v2.1h-1.8zM789.2 623h1.8v2.1h-1.8zM802 611.2h2.1v1.8h-2.1zM773 621h3.1v2.2h-3.1zM773 624.9h3.1v2.2h-3.1zM790 596.1h4.1v2.9h-4.1zM772 580h2.1v1.8h-2.1zM772 583.2h2.1v1.8h-2.1zM781 619h2.1v2.6h-2.1zM768 621h2.1v2.6h-2.1zM768 625.5h2.1v2.6h-2.1zM766 580h3.1v2.2h-3.1zM785 619.6h1.1v1.5h-1.1zM773 613h1.2v3.1h-1.2zM774.8 613h1.2v3.1h-1.2zM767 604h2.1v1.8h-2.1zM803 583h1.1v1.5h-1.1zM776 587h2.2v3.1h-2.2zM779.9 587h2.2v3.1h-2.2zM780 613h2.6v2.1h-2.6zM792 583h2.2v3.1h-2.2zM795.9 583h2.2v3.1h-2.2zM782.6 530h1.5v1.1h-1.5zM780 535h1.2v3.1h-1.2zM781.8 535h1.2v3.1h-1.2zM785 569h1.1v1.5h-1.1zM785 571.6h1.1v1.5h-1.1zM771 528h2.2v3.1h-2.2zM778 557h2.6v2.1h-2.6zM782.5 557h2.6v2.1h-2.6zM795 577h1.2v2.1h-1.2zM795.8 577h1.2v2.1h-1.2zM772 592h2.2v3.1h-2.2zM775.9 592h2.2v3.1h-2.2zM781 541h2.1v2.6h-2.1zM781 545.5h2.1v2.6h-2.1zM767 589h2.1v2.6h-2.1zM767 593.5h2.1v2.6h-2.1zM768 568h1.5v1.1h-1.5zM780 608h1.2v3.1h-1.2zM776 600.2h2.1v1.8h-2.1zM784 519h2.1v2.6h-2.1zM797 604h2.1v1.8h-2.1zM797 607.2h2.1v1.8h-2.1zM802 603.6h1.1v1.5h-1.1zM775 533h1.2v2.1h-1.2zM775.8 533h1.2v2.1h-1.2zM772 588h1.2v2.1h-1.2zM772.8 588h1.2v2.1h-1.2zM776 607h1.1v1.5h-1.1zM776 609.6h1.1v1.5h-1.1zM770 549h1.2v2.1h-1.2zM770.8 549h1.2v2.1h-1.2zM773 541h2.2v3.1h-2.2zM776.9 541h2.2v3.1h-2.2zM767 521h1.2v2.1h-1.2zM767.8 521h1.2v2.1h-1.2zM788 583h2.1v1.8h-2.1zM788 586.2h2.1v1.8h-2.1zM772 604h2.1v2.6h-2.1zM772 608.5h2.1v2.6h-2.1zM773 516h1.8v2.1h-1.8zM776.2 516h1.8v2.1h-1.8zM778 550.6h1.1v1.5h-1.1zM769.8 534h1.2v3.1h-1.2zM767 541h1.2v3.1h-1.2zM768.8 541h1.2v3.1h-1.2zM785 636h1.8v2.1h-1.8zM788.2 636h1.8v2.1h-1.8zM779 636h1.5v1.1h-1.5zM781.6 636h1.5v1.1h-1.5zM793 635h1.2v3.1h-1.2zM794.8 635h1.2v3.1h-1.2zM780 597.6h1.1v1.5h-1.1zM752 566h1.8v2.1h-1.8zM755.2 566h1.8v2.1h-1.8zM756.5 570h2.6v2.1h-2.6zM744 575.1h4.1v2.9h-4.1zM752 576h4.1v2.9h-4.1zM752 581.1h4.1v2.9h-4.1zM752 586h1.2v2.1h-1.2zM752.8 586h1.2v2.1h-1.2zM744 581h2.1v1.8h-2.1zM744 584.2h2.1v1.8h-2.1zM734 566h6.1v4.4h-6.1zM745 589h1.1v1.5h-1.1zM745 591.6h1.1v1.5h-1.1zM762 566h1.1v1.5h-1.1zM762 568.6h1.1v1.5h-1.1zM737 589h1.8v2.1h-1.8zM730 566h2.1v1.8h-2.1zM730 569.2h2.1v1.8h-2.1zM744 565h2.2v3.1h-2.2zM693 572h1.2v3.1h-1.2zM694.8 572h1.2v3.1h-1.2zM724 565h3.1v2.2h-3.1zM724 568.9h3.1v2.2h-3.1zM720 576h4.1v2.9h-4.1zM720 581.1h4.1v2.9h-4.1zM717 576h1.1v1.5h-1.1zM717 578.6h1.1v1.5h-1.1zM710 576h1.8v2.1h-1.8zM713.2 576h1.8v2.1h-1.8zM734 580h1.8v2.1h-1.8zM716 568h1.2v3.1h-1.2zM693 589h2.1v2.6h-2.1zM693 593.5h2.1v2.6h-2.1zM694.8 584h1.2v3.1h-1.2zM722 587h1.8v2.1h-1.8zM697 589h2.1v1.8h-2.1zM697 592.2h2.1v1.8h-2.1zM734 588.6h1.1v1.5h-1.1zM710 583h1.5v1.1h-1.5zM712.6 583h1.5v1.1h-1.5zM758 586h1.5v1.1h-1.5zM760.6 586h1.5v1.1h-1.5zM710.8 562h1.2v2.1h-1.2zM751 630h2.1v2.6h-2.1zM753.6 625h1.5v1.1h-1.5zM730 617h1.2v3.1h-1.2zM731.8 617h1.2v3.1h-1.2zM757 625h1.8v2.1h-1.8zM760.2 625h1.8v2.1h-1.8zM730 623h2.1v2.6h-2.1zM730 627.5h2.1v2.6h-2.1zM755 630h1.2v2.1h-1.2zM755.8 630h1.2v2.1h-1.2zM644 627h3.1v2.2h-3.1zM654 628h5.1v3.6h-5.1zM649 620h2.1v1.8h-2.1zM649 623.2h2.1v1.8h-2.1zM725 617h1.2v3.1h-1.2zM726.8 617h1.2v3.1h-1.2zM739 621h3.6v5.1h-3.6zM745.4 621h3.6v5.1h-3.6zM690 622h2.2v3.1h-2.2zM693.9 622h2.2v3.1h-2.2zM715 627h2.1v1.8h-2.1zM644 620h2.1v1.8h-2.1zM644 623.2h2.1v1.8h-2.1zM723 634h3.1v2.2h-3.1zM644 616h1.8v2.1h-1.8zM647.2 616h1.8v2.1h-1.8zM755 637h1.2v2.1h-1.2zM755.8 637h1.2v2.1h-1.2zM649 636h1.2v2.1h-1.2zM649.8 636h1.2v2.1h-1.2zM753 615h2.1v2.6h-2.1zM661 639h1.5v1.1h-1.5zM663.6 639h1.5v1.1h-1.5zM673 617h1.2v3.1h-1.2zM719 634h2.1v1.8h-2.1zM662 620h1.8v2.1h-1.8zM665.2 620h1.8v2.1h-1.8zM749 615h1.1v1.5h-1.1zM749 617.6h1.1v1.5h-1.1zM690 628h1.1v1.5h-1.1zM690 630.6h1.1v1.5h-1.1zM706 634h2.9v4.1h-2.9zM711.1 634h2.9v4.1h-2.9zM760 629h2.1v2.6h-2.1zM760 633.5h2.1v2.6h-2.1zM701 620h1.8v2.1h-1.8zM704.2 620h1.8v2.1h-1.8zM634 631h1.8v2.1h-1.8zM637.2 631h1.8v2.1h-1.8zM634 636h2.9v4.1h-2.9zM639.1 636h2.9v4.1h-2.9zM719 627h2.1v1.8h-2.1zM719 630.2h2.1v1.8h-2.1zM719 620h2.1v1.8h-2.1zM736 628h1.1v1.5h-1.1zM736 630.6h1.1v1.5h-1.1zM635 624h1.5v1.1h-1.5zM637.6 624h1.5v1.1h-1.5zM666 628h2.1v1.8h-2.1zM743 637.2h2.1v1.8h-2.1zM725 622h1.1v1.5h-1.1zM662 625h1.5v1.1h-1.5zM664.6 625h1.5v1.1h-1.5zM690 634h1.5v1.1h-1.5zM671 627h3.1v2.2h-3.1zM671 630.9h3.1v2.2h-3.1zM680.8 627h1.2v3.1h-1.2zM741.8 614h1.2v3.1h-1.2zM693 628h1.8v2.1h-1.8zM696.2 628h1.8v2.1h-1.8zM680 617h1.2v2.1h-1.2zM680.8 617h1.2v2.1h-1.2zM690 617h2.6v2.1h-2.6zM694.5 617h2.6v2.1h-2.6zM679.8 623h1.2v2.1h-1.2zM684 626h3.1v2.2h-3.1zM684 629.9h3.1v2.2h-3.1zM684 617h2.1v1.8h-2.1zM725 628h1.2v2.1h-1.2zM725.8 628h1.2v2.1h-1.2zM701 615h2.6v2.1h-2.6zM705.5 615h2.6v2.1h-2.6zM757 613h5.1v3.6h-5.1zM708 619h1.2v3.1h-1.2zM637 617.2h2.1v1.8h-2.1zM645.8 636h1.2v2.1h-1.2zM735 613h2.1v2.6h-2.1zM680 633h2.1v2.6h-2.1zM680 637.5h2.1v2.6h-2.1zM536 548h1.2v2.1h-1.2zM536.8 548h1.2v2.1h-1.2zM542.4 553h3.6v5.1h-3.6zM543 545h3.1v2.2h-3.1zM543 548.9h3.1v2.2h-3.1zM540 545h1.1v1.5h-1.1zM550 545h1.1v1.5h-1.1zM550 547.6h1.1v1.5h-1.1zM531 545h2.1v2.6h-2.1zM548 553h1.1v1.5h-1.1zM548 555.6h1.1v1.5h-1.1z" fill="#ffd93d"/><path d="M497.9 509.9h2.6v2.1h-2.6zM499.9 526h1.2v2.1h-1.2zM497.9 516h2.6v2.1h-2.6zM502.9 531h3.1v2.2h-3.1zM507.9 514.6h1.1v1.5h-1.1zM507.9 524h3.1v2.2h-3.1zM485.9 505.9h5.1v3.6h-5.1zM517.2 524h1.8v2.1h-1.8zM514 530.6h1.1v1.5h-1.1zM522 511.9h2.2v3.1h-2.2zM541 508.9h2.2v3.1h-2.2zM544.9 508.9h2.2v3.1h-2.2zM530 511.9h2.2v3.1h-2.2zM508.9 534h1.2v2.1h-1.2zM500.9 506.6h1.1v1.5h-1.1zM515.2 534h1.8v2.1h-1.8zM518 507.2h2.1v1.8h-2.1zM530 506.1h4.1v2.9h-4.1zM485.9 501.9h1.8v2.1h-1.8zM489.2 501.9h1.8v2.1h-1.8zM515.5 520h2.6v2.1h-2.6zM503.9 503.9h1.1v1.5h-1.1zM503.9 506.6h1.1v1.5h-1.1zM480.9 511.9h1.2v3.1h-1.2zM482.9 511.9h1.2v3.1h-1.2zM494.6 520h1.5v1.1h-1.5zM492.9 505.9h1.1v1.5h-1.1zM488.9 526.6h1.1v1.5h-1.1zM478.9 525.6h1.1v1.5h-1.1zM520 528h2.1v1.8h-2.1zM520 531.2h2.1v1.8h-2.1zM564 512.5h2.1v2.6h-2.1zM564 503.9h1.2v2.1h-1.2zM564.8 503.9h1.2v2.1h-1.2zM555 513h2.6v2.1h-2.6zM559.5 513h2.6v2.1h-2.6zM555 507.9h1.2v3.1h-1.2zM558 502.9h1.2v3.1h-1.2zM559.8 502.9h1.2v3.1h-1.2zM568 511.9h3.6v5.1h-3.6zM580 516.5h2.1v2.6h-2.1zM569 501.9h1.5v1.1h-1.5zM587.7 502.9h4.4v6.1h-4.4zM584 514h2.1v1.8h-2.1zM575 499.9h1.2v3.1h-1.2zM576 534h3.1v2.2h-3.1zM600 535h5.1v3.6h-5.1zM600 541.4h5.1v3.6h-5.1zM576 545h2.6v2.1h-2.6zM580.5 545h2.6v2.1h-2.6zM633.4 524h3.6v5.1h-3.6zM581 538h2.6v2.1h-2.6zM585.5 538h2.6v2.1h-2.6zM674 524h2.1v1.8h-2.1zM603 528h2.1v1.8h-2.1zM603 531.2h2.1v1.8h-2.1zM595 529.4h5.1v3.6h-5.1zM585.5 530h2.6v2.1h-2.6zM610 523h4.4v6.1h-4.4zM617.7 523h4.4v6.1h-4.4zM686.6 544h1.5v1.1h-1.5zM659 535h6.1v4.4h-6.1zM659 542.7h6.1v4.4h-6.1zM611 545.1h4.1v2.9h-4.1zM610.2 550h1.8v2.1h-1.8zM642.2 524h1.8v2.1h-1.8zM590 558h2.6v2.1h-2.6zM594.5 558h2.6v2.1h-2.6zM686.6 540h1.5v1.1h-1.5zM646 524h1.8v2.1h-1.8zM649.2 524h1.8v2.1h-1.8zM642 531h2.1v1.8h-2.1zM682.2 548h1.8v2.1h-1.8zM675.7 554h4.4v6.1h-4.4zM675 543h2.6v2.1h-2.6zM679.5 543h2.6v2.1h-2.6zM646 531h1.1v1.5h-1.1zM685.6 554h1.5v1.1h-1.5zM625 535h2.9v4.1h-2.9zM671 546.2h2.1v1.8h-2.1zM630.4 542h3.6v5.1h-3.6zM658 524h1.8v2.1h-1.8zM661.2 524h1.8v2.1h-1.8zM586.8 554h1.2v3.1h-1.2zM648 539h1.8v2.1h-1.8zM576 558h1.2v2.1h-1.2zM640 552h2.1v1.8h-2.1zM640 555.2h2.1v1.8h-2.1zM651.7 552h4.4v6.1h-4.4zM667 547.5h2.1v2.6h-2.1zM607.8 531h1.2v2.1h-1.2zM670.2 536h1.8v2.1h-1.8zM635 537h1.2v2.1h-1.2zM635.8 537h1.2v2.1h-1.2zM619.8 531h1.2v2.1h-1.2zM599 558.2h2.1v1.8h-2.1zM678.8 538h1.2v2.1h-1.2zM626 558h1.8v2.1h-1.8zM629.2 558h1.8v2.1h-1.8zM595 535h1.2v3.1h-1.2zM596.8 535h1.2v3.1h-1.2zM557 591h1.1v1.5h-1.1zM557 567h5.1v3.6h-5.1zM562 583h1.2v3.1h-1.2zM562 591h1.1v1.5h-1.1zM564 552h2.1v2.6h-2.1zM564 556.5h2.1v2.6h-2.1zM564 565.5h2.1v2.6h-2.1zM600.8 574h1.2v2.1h-1.2zM555 551h2.2v3.1h-2.2zM558.9 551h2.2v3.1h-2.2zM600 589.5h2.1v2.6h-2.1zM596 562h3.1v2.2h-3.1zM596 565.9h3.1v2.2h-3.1zM559.8 547h1.2v2.1h-1.2zM590 564h1.1v1.5h-1.1zM590 566.6h1.1v1.5h-1.1zM570 552h2.1v2.6h-2.1zM722 474.9h2.1v1.8h-2.1zM717 461.9h2.9v4.1h-2.9zM722.1 461.9h2.9v4.1h-2.9zM716 477.9h3.1v2.2h-3.1zM710 481.9h1.8v2.1h-1.8zM729 487.2h2.1v1.8h-2.1zM751.7 469.9h4.4v6.1h-4.4zM706.2 481.9h1.8v2.1h-1.8zM712 461.9h1.2v3.1h-1.2zM713.8 461.9h1.2v3.1h-1.2zM717 485.9h3.1v2.2h-3.1zM729 458.9h4.4v6.1h-4.4zM736.7 458.9h4.4v6.1h-4.4zM669.6 499.9h1.5v1.1h-1.5zM763 507.9h1.5v1.1h-1.5zM765.6 507.9h1.5v1.1h-1.5zM689 478.9h2.1v1.8h-2.1zM750 478.9h2.2v3.1h-2.2zM667 503.9h1.8v2.1h-1.8zM667 492.9h1.2v3.1h-1.2zM688 470.9h1.2v3.1h-1.2zM689.8 470.9h1.2v3.1h-1.2zM764.8 496.9h1.2v3.1h-1.2zM702 466.2h2.1v1.8h-2.1zM730 491.9h1.1v1.5h-1.1zM730 494.6h1.1v1.5h-1.1zM733 497.7h6.1v4.4h-6.1zM673 492.4h5.1v3.6h-5.1zM756 506.9h1.2v2.1h-1.2zM758 461.9h2.2v3.1h-2.2zM756.4 494.9h3.6v5.1h-3.6zM756 483.9h4.1v2.9h-4.1zM756 489.1h4.1v2.9h-4.1zM746 462.9h2.6v2.1h-2.6zM750.5 462.9h2.6v2.1h-2.6zM694.8 470.9h1.2v3.1h-1.2zM678.9 480.9h2.2v3.1h-2.2zM782.2 507.9h1.8v2.1h-1.8zM720 499.9h2.6v2.1h-2.6zM768 485.9h1.8v2.1h-1.8zM771.2 485.9h1.8v2.1h-1.8zM776 481.9h3.1v2.2h-3.1zM776 485.9h3.1v2.2h-3.1zM778 496.9h2.1v2.6h-2.1zM728.6 504.9h1.5v1.1h-1.5zM682 507.2h2.1v1.8h-2.1zM710 485.9h1.5v1.1h-1.5zM770 501.9h1.1v1.5h-1.1zM760 506.9h1.1v1.5h-1.1zM760 509.6h1.1v1.5h-1.1zM741 500.6h1.1v1.5h-1.1zM684 499.9h1.2v2.1h-1.2zM744 494.9h1.5v1.1h-1.5zM746.6 494.9h1.5v1.1h-1.5zM695 465.9h1.8v2.1h-1.8zM698.2 465.9h1.8v2.1h-1.8zM744.2 478.9h1.8v2.1h-1.8zM717 502.6h1.1v1.5h-1.1zM673 499.9h1.8v2.1h-1.8zM676.2 499.9h1.8v2.1h-1.8zM783 468.9h2.1v2.6h-2.1zM783 473.5h2.1v2.6h-2.1zM751.2 458.9h1.8v2.1h-1.8zM706 500.2h2.1v1.8h-2.1zM729 497.9h1.1v1.5h-1.1zM746 497.9h1.1v1.5h-1.1zM746 500.6h1.1v1.5h-1.1zM695.8 475.9h1.2v2.1h-1.2zM784 478.9h1.2v2.1h-1.2zM752.6 491.9h1.5v1.1h-1.5zM669.6 489.9h1.5v1.1h-1.5zM803 619.6h1.1v1.5h-1.1zM790 604h5.1v3.6h-5.1zM790 610.4h5.1v3.6h-5.1zM779 604h2.6v2.1h-2.6zM783.5 604h2.6v2.1h-2.6zM777 573h1.8v2.1h-1.8zM780.2 573h1.8v2.1h-1.8zM770 557h1.2v3.1h-1.2zM783 596h1.2v3.1h-1.2zM773 629h3.6v5.1h-3.6zM802 608h2.1v1.8h-2.1zM790 591h4.1v2.9h-4.1zM776 583h2.6v2.1h-2.6zM780.5 583h2.6v2.1h-2.6zM781 623.5h2.1v2.6h-2.1zM766 583.9h3.1v2.2h-3.1zM785 617h1.1v1.5h-1.1zM767 607.2h2.1v1.8h-2.1zM803 585.6h1.1v1.5h-1.1zM784.5 613h2.6v2.1h-2.6zM780 530h1.5v1.1h-1.5zM784 577h2.9v4.1h-2.9zM789.1 577h2.9v4.1h-2.9zM774.9 528h2.2v3.1h-2.2zM771 521h2.6v2.1h-2.6zM775.5 521h2.6v2.1h-2.6zM780 519h2.1v2.6h-2.1zM780 523.5h2.1v2.6h-2.1zM767 598h1.8v2.1h-1.8zM770.2 598h1.8v2.1h-1.8zM770.6 568h1.5v1.1h-1.5zM781.8 608h1.2v3.1h-1.2zM776 597h2.1v1.8h-2.1zM784 523.5h2.1v2.6h-2.1zM802 601h1.1v1.5h-1.1zM767 611h2.1v2.6h-2.1zM767 615.5h2.1v2.6h-2.1zM784 587h2.1v1.8h-2.1zM784 590.2h2.1v1.8h-2.1zM768 526h1.1v1.5h-1.1zM768 528.6h1.1v1.5h-1.1zM778 548h1.1v1.5h-1.1zM768 534h1.2v3.1h-1.2zM789 572h1.8v2.1h-1.8zM792.2 572h1.8v2.1h-1.8zM797 611h1.2v2.1h-1.2zM797.8 611h1.2v2.1h-1.2zM780 595h1.1v1.5h-1.1zM752 570h2.6v2.1h-2.6zM744 570h4.1v2.9h-4.1zM734 573.7h6.1v4.4h-6.1zM740.2 589h1.8v2.1h-1.8zM747.9 565h2.2v3.1h-2.2zM704 562h3.1v2.2h-3.1zM704 565.9h3.1v2.2h-3.1zM737.2 580h1.8v2.1h-1.8zM717.8 568h1.2v3.1h-1.2zM693 584h1.2v3.1h-1.2zM710 568h1.5v1.1h-1.5zM712.6 568h1.5v1.1h-1.5zM725.2 587h1.8v2.1h-1.8zM734 586h1.1v1.5h-1.1zM710 580h1.5v1.1h-1.5zM712.6 580h1.5v1.1h-1.5zM730 586h1.2v2.1h-1.2zM730.8 586h1.2v2.1h-1.2zM710 562h1.2v2.1h-1.2zM759 574h1.2v3.1h-1.2zM760.8 574h1.2v3.1h-1.2zM751 634.5h2.1v2.6h-2.1zM751 625h1.5v1.1h-1.5zM729 634h4.4v6.1h-4.4zM736.7 634h4.4v6.1h-4.4zM747 630h2.1v2.6h-2.1zM747 634.5h2.1v2.6h-2.1zM649 628h2.1v1.8h-2.1zM649 631.2h2.1v1.8h-2.1zM644 630.9h3.1v2.2h-3.1zM654 634.4h5.1v3.6h-5.1zM701 627h3.6v5.1h-3.6zM707.4 627h3.6v5.1h-3.6zM661 628h2.1v2.6h-2.1zM661 632.5h2.1v2.6h-2.1zM715 630.2h2.1v1.8h-2.1zM723 637.9h3.1v2.2h-3.1zM753 619.5h2.1v2.6h-2.1zM674.8 617h1.2v3.1h-1.2zM667 639h1.5v1.1h-1.5zM669.6 639h1.5v1.1h-1.5zM653 620h1.8v2.1h-1.8zM656.2 620h1.8v2.1h-1.8zM719 637.2h2.1v1.8h-2.1zM719 623.2h2.1v1.8h-2.1zM696 634h2.9v4.1h-2.9zM701.1 634h2.9v4.1h-2.9zM736 622h1.1v1.5h-1.1zM736 624.6h1.1v1.5h-1.1zM666 631.2h2.1v1.8h-2.1zM743 634h2.1v1.8h-2.1zM725 624.6h1.1v1.5h-1.1zM692.6 634h1.5v1.1h-1.5zM715 620h2.1v1.8h-2.1zM715 623.2h2.1v1.8h-2.1zM679 627h1.2v3.1h-1.2zM740 614h1.2v3.1h-1.2zM679 623h1.2v2.1h-1.2zM684 620.2h2.1v1.8h-2.1zM757 619.4h5.1v3.6h-5.1zM709.8 619h1.2v3.1h-1.2zM637 614h2.1v1.8h-2.1zM645 636h1.2v2.1h-1.2zM735 617.5h2.1v2.6h-2.1zM536 553h3.6v5.1h-3.6zM540 547.6h1.1v1.5h-1.1zM531 549.5h2.1v2.6h-2.1z" fill="#8a8a8a"/><path d="M710.5 592.5h13.1v12.1h-13.1zM730.5 592.5h13.1v12.1h-13.1zM750.5 590.5h13.1v15.1h-13.1z" fill="none" stroke="#f4f4f4" stroke-width="0.9"/><path d="M498.5 530.5h3v8.1h-3zM497.5 509.5h8.1v3h-8.1zM481.5 530.5h13.1v7h-13.1zM510.5 511.5h3v6h-3zM541.5 515.5h6v11.1h-6zM498.5 525.5h3v3h-3zM497.5 515.5h8.1v3h-8.1zM502.5 530.5h4v7h-4zM494.5 522.5h3v6h-3zM502.5 523.5h3v6h-3zM491.5 523.5h2v5h-2zM507.5 511.5h2v5h-2zM514.5 510.5h3v6h-3zM541.5 530.5h8.1v3h-8.1zM481.5 519.5h5v9.1h-5zM480.5 505.5h3v3h-3zM507.5 503.5h4v7h-4zM507.5 523.5h4v7h-4zM485.5 505.5h6v11.1h-6zM513.5 523.5h6v3h-6zM492.5 501.5h3v3h-3zM513.5 527.5h2v5h-2zM521.5 511.5h7v4h-7zM540.5 508.5h7v4h-7zM524.5 503.5h4v7h-4zM529.5 511.5h7v4h-7zM507.5 533.5h3v3h-3zM497.5 503.5h2v5h-2zM541.5 534.5h3v3h-3zM536.5 501.5h6v3h-6zM500.5 503.5h2v5h-2zM478.5 530.5h2v5h-2zM512.5 503.5h3v6h-3zM511.5 533.5h6v3h-6zM517.5 503.5h3v6h-3zM518.5 512.5h2v5h-2zM480.5 501.5h3v3h-3zM529.5 500.5h5v9.1h-5zM493.5 513.5h3v3h-3zM485.5 501.5h6v3h-6zM510.5 519.5h8.1v3h-8.1zM503.5 503.5h2v5h-2zM480.5 511.5h4v4h-4zM487.5 519.5h3v3h-3zM491.5 519.5h5v2h-5zM545.5 501.5h5v2h-5zM492.5 505.5h2v5h-2zM488.5 523.5h2v5h-2zM478.5 522.5h2v5h-2zM519.5 527.5h3v6h-3zM495.5 532.5h2v5h-2zM501.5 519.5h5v2h-5zM563.5 507.5h3v8.1h-3zM563.5 503.5h3v3h-3zM554.5 512.5h8.1v3h-8.1zM554.5 507.5h4v4h-4zM567.5 507.5h6v3h-6zM557.5 502.5h4v4h-4zM567.5 511.5h11.1v6h-11.1zM579.5 511.5h3v8.1h-3zM568.5 501.5h5v2h-5zM579.5 502.5h13.1v7h-13.1zM574.5 507.5h3v3h-3zM557.5 518.5h5v2h-5zM586.5 498.5h3v3h-3zM583.5 513.5h3v6h-3zM567.5 497.5h6v3h-6zM562.5 497.5h2v5h-2zM574.5 499.5h4v4h-4zM580.5 533.5h8.1v3h-8.1zM589.5 533.5h3v6h-3zM589.5 528.5h4v4h-4zM575.5 533.5h4v7h-4zM599.5 534.5h6v11.1h-6zM677.5 523.5h11.1v6h-11.1zM589.5 540.5h5v9.1h-5zM575.5 544.5h8.1v3h-8.1zM626.5 523.5h11.1v6h-11.1zM580.5 537.5h8.1v3h-8.1zM673.5 523.5h3v6h-3zM603.5 548.5h2v5h-2zM602.5 527.5h3v6h-3zM594.5 522.5h6v11.1h-6zM580.5 529.5h8.1v3h-8.1zM672.5 530.5h4v4h-4zM595.5 548.5h7v4h-7zM609.5 522.5h13.1v7h-13.1zM580.5 525.5h6v3h-6zM589.5 553.5h6v3h-6zM683.5 543.5h5v2h-5zM658.5 534.5h7v13.1h-7zM610.5 539.5h5v9.1h-5zM606.5 537.5h3v8.1h-3zM606.5 549.5h6v3h-6zM638.5 523.5h6v3h-6zM589.5 557.5h8.1v3h-8.1zM610.5 532.5h2v5h-2zM683.5 539.5h5v2h-5zM616.5 540.5h3v8.1h-3zM645.5 523.5h6v3h-6zM575.5 550.5h3v6h-3zM615.5 534.5h6v3h-6zM673.5 537.5h3v3h-3zM645.5 542.5h9.1v5h-9.1zM641.5 530.5h3v6h-3zM595.5 540.5h3v6h-3zM678.5 547.5h6v3h-6zM667.5 553.5h13.1v7h-13.1zM666.5 523.5h6v3h-6zM674.5 542.5h8.1v3h-8.1zM645.5 530.5h2v5h-2zM682.5 553.5h5v2h-5zM624.5 534.5h9.1v5h-9.1zM670.5 542.5h3v6h-3zM585.5 544.5h3v6h-3zM623.5 541.5h11.1v6h-11.1zM641.5 540.5h3v6h-3zM630.5 530.5h8.1v3h-8.1zM657.5 523.5h6v3h-6zM584.5 553.5h4v4h-4zM647.5 538.5h6v3h-6zM625.5 551.5h9.1v5h-9.1zM575.5 557.5h3v3h-3zM639.5 551.5h3v6h-3zM643.5 551.5h13.1v7h-13.1zM618.5 553.5h6v3h-6zM660.5 529.5h3v3h-3zM666.5 542.5h3v8.1h-3zM659.5 551.5h3v8.1h-3zM606.5 530.5h3v3h-3zM666.5 535.5h6v3h-6zM634.5 536.5h3v3h-3zM606.5 554.5h6v3h-6zM613.5 549.5h5v2h-5zM649.5 529.5h3v6h-3zM618.5 530.5h3v3h-3zM598.5 554.5h3v6h-3zM668.5 528.5h2v5h-2zM685.5 547.5h2v5h-2zM677.5 530.5h9.1v5h-9.1zM677.5 537.5h3v3h-3zM625.5 557.5h6v3h-6zM652.5 523.5h4v4h-4zM625.5 530.5h3v3h-3zM594.5 534.5h4v4h-4zM556.5 580.5h3v6h-3zM556.5 590.5h2v5h-2zM556.5 566.5h6v11.1h-6zM561.5 582.5h4v4h-4zM556.5 560.5h6v3h-6zM602.5 563.5h2v5h-2zM567.5 574.5h5v2h-5zM561.5 590.5h2v5h-2zM554.5 556.5h8.1v3h-8.1zM563.5 551.5h3v8.1h-3zM599.5 577.5h3v6h-3zM563.5 560.5h3v8.1h-3zM599.5 573.5h3v3h-3zM554.5 550.5h7v4h-7zM599.5 584.5h3v8.1h-3zM595.5 561.5h4v7h-4zM558.5 546.5h3v3h-3zM564.5 546.5h8.1v3h-8.1zM592.5 563.5h2v5h-2zM563.5 569.5h2v5h-2zM555.5 587.5h5v2h-5zM589.5 563.5h2v5h-2zM569.5 551.5h3v8.1h-3zM723.5 469.5h3v3h-3zM728.5 469.5h6v11.1h-6zM721.5 474.5h3v6h-3zM716.5 469.5h5v2h-5zM709.5 469.5h5v9.1h-5zM716.5 461.5h9.1v5h-9.1zM715.5 473.5h4v7h-4zM709.5 481.5h6v3h-6zM721.5 482.5h3v6h-3zM736.5 469.5h3v8.1h-3zM728.5 483.5h3v6h-3zM701.5 469.5h5v9.1h-5zM743.5 469.5h13.1v7h-13.1zM702.5 481.5h6v3h-6zM711.5 461.5h4v4h-4zM716.5 481.5h4v7h-4zM694.5 480.5h7v4h-7zM757.5 469.5h3v3h-3zM719.5 489.5h5v9.1h-5zM728.5 458.5h13.1v7h-13.1zM666.5 499.5h5v2h-5zM736.5 479.5h3v6h-3zM762.5 507.5h5v2h-5zM688.5 478.5h3v6h-3zM749.5 478.5h7v4h-7zM759.5 501.5h7v4h-7zM659.5 499.5h6v11.1h-6zM666.5 503.5h6v3h-6zM666.5 492.5h4v4h-4zM687.5 470.5h4v4h-4zM762.5 496.5h4v4h-4zM701.5 462.5h3v6h-3zM729.5 491.5h2v5h-2zM732.5 489.5h7v13.1h-7zM713.5 489.5h3v6h-3zM762.5 490.5h2v5h-2zM672.5 485.5h6v11.1h-6zM761.5 476.5h2v5h-2zM770.5 496.5h4v4h-4zM661.5 489.5h4v7h-4zM673.5 503.5h6v3h-6zM731.5 508.5h5v2h-5zM755.5 506.5h3v3h-3zM769.5 507.5h8.1v3h-8.1zM757.5 474.5h3v3h-3zM757.5 461.5h7v4h-7zM749.5 494.5h11.1v6h-11.1zM755.5 483.5h5v9.1h-5zM781.5 489.5h3v8.1h-3zM767.5 461.5h4v4h-4zM782.5 461.5h3v6h-3zM745.5 462.5h8.1v3h-8.1zM666.5 507.5h2v5h-2zM704.5 485.5h4v7h-4zM692.5 470.5h4v4h-4zM679.5 485.5h2v5h-2zM674.5 480.5h7v4h-7zM761.5 466.5h5v9.1h-5zM778.5 507.5h6v3h-6zM709.5 488.5h2v5h-2zM740.5 506.5h6v3h-6zM767.5 476.5h3v8.1h-3zM719.5 499.5h8.1v3h-8.1zM724.5 508.5h6v3h-6zM773.5 471.5h6v3h-6zM777.5 489.5h2v5h-2zM773.5 465.5h8.1v3h-8.1zM750.5 503.5h3v6h-3zM699.5 485.5h4v7h-4zM655.5 494.5h5v2h-5zM767.5 485.5h6v3h-6zM673.5 507.5h3v3h-3zM775.5 481.5h4v7h-4zM777.5 496.5h3v8.1h-3zM725.5 504.5h5v2h-5zM681.5 503.5h3v6h-3zM709.5 485.5h5v2h-5zM769.5 501.5h2v5h-2zM759.5 506.5h2v5h-2zM679.5 492.5h6v3h-6zM682.5 487.5h8.1v3h-8.1zM709.5 499.5h6v11.1h-6zM740.5 497.5h2v5h-2zM683.5 499.5h3v3h-3zM743.5 494.5h5v2h-5zM694.5 465.5h6v3h-6zM740.5 478.5h6v3h-6zM740.5 491.5h5v2h-5zM716.5 499.5h2v5h-2zM692.5 489.5h6v3h-6zM655.5 504.5h3v6h-3zM672.5 499.5h6v3h-6zM782.5 468.5h3v8.1h-3zM725.5 484.5h2v5h-2zM716.5 505.5h4v4h-4zM747.5 458.5h6v3h-6zM749.5 483.5h4v4h-4zM705.5 496.5h3v6h-3zM728.5 497.5h2v5h-2zM762.5 483.5h3v6h-3zM745.5 497.5h2v5h-2zM694.5 475.5h3v3h-3zM781.5 483.5h3v3h-3zM778.5 458.5h3v6h-3zM773.5 458.5h4v4h-4zM740.5 470.5h2v5h-2zM783.5 478.5h3v3h-3zM749.5 491.5h5v2h-5zM677.5 510.5h5v2h-5zM666.5 489.5h5v2h-5zM774.5 476.5h4v4h-4zM769.5 563.5h6v3h-6zM779.5 563.5h6v3h-6zM802.5 616.5h2v5h-2zM789.5 616.5h9.1v5h-9.1zM767.5 570.5h3v6h-3zM789.5 603.5h6v11.1h-6zM771.5 572.5h4v4h-4zM778.5 603.5h8.1v3h-8.1zM776.5 572.5h6v3h-6zM798.5 623.5h6v3h-6zM769.5 556.5h4v4h-4zM766.5 561.5h2v5h-2zM782.5 595.5h4v4h-4zM798.5 628.5h3v6h-3zM776.5 576.5h6v3h-6zM785.5 628.5h9.1v5h-9.1zM772.5 628.5h11.1v6h-11.1zM788.5 563.5h4v7h-4zM768.5 630.5h3v6h-3zM776.5 568.5h6v3h-6zM785.5 622.5h6v3h-6zM801.5 607.5h3v6h-3zM772.5 620.5h4v7h-4zM789.5 590.5h5v9.1h-5zM771.5 579.5h3v6h-3zM775.5 582.5h8.1v3h-8.1zM780.5 618.5h3v8.1h-3zM767.5 620.5h3v8.1h-3zM765.5 579.5h4v7h-4zM784.5 616.5h2v5h-2zM772.5 612.5h4v4h-4zM766.5 603.5h3v6h-3zM802.5 582.5h2v5h-2zM775.5 586.5h7v4h-7zM779.5 612.5h8.1v3h-8.1zM791.5 582.5h7v4h-7zM779.5 529.5h5v2h-5zM779.5 534.5h4v4h-4zM783.5 576.5h9.1v5h-9.1zM784.5 568.5h2v5h-2zM770.5 527.5h7v4h-7zM777.5 556.5h8.1v3h-8.1zM794.5 576.5h3v3h-3zM771.5 591.5h7v4h-7zM780.5 540.5h3v8.1h-3zM770.5 520.5h8.1v3h-8.1zM766.5 588.5h3v8.1h-3zM779.5 518.5h3v8.1h-3zM766.5 597.5h6v3h-6zM767.5 567.5h5v2h-5zM779.5 607.5h4v4h-4zM775.5 596.5h3v6h-3zM783.5 518.5h3v8.1h-3zM796.5 603.5h3v6h-3zM801.5 600.5h2v5h-2zM774.5 532.5h3v3h-3zM771.5 587.5h3v3h-3zM775.5 606.5h2v5h-2zM766.5 610.5h3v8.1h-3zM769.5 548.5h3v3h-3zM772.5 540.5h7v4h-7zM766.5 520.5h3v3h-3zM787.5 582.5h3v6h-3zM783.5 586.5h3v6h-3zM771.5 603.5h3v8.1h-3zM772.5 515.5h6v3h-6zM767.5 525.5h2v5h-2zM777.5 547.5h2v5h-2zM767.5 533.5h4v4h-4zM766.5 540.5h4v4h-4zM788.5 571.5h6v3h-6zM784.5 635.5h6v3h-6zM796.5 610.5h3v3h-3zM778.5 635.5h5v2h-5zM792.5 634.5h4v4h-4zM779.5 594.5h2v5h-2zM751.5 565.5h6v3h-6zM751.5 569.5h8.1v3h-8.1zM743.5 569.5h5v9.1h-5zM751.5 575.5h5v9.1h-5zM751.5 585.5h3v3h-3zM743.5 580.5h3v6h-3zM733.5 565.5h7v13.1h-7zM744.5 588.5h2v5h-2zM761.5 565.5h2v5h-2zM736.5 588.5h6v3h-6zM729.5 565.5h3v6h-3zM743.5 564.5h7v4h-7zM692.5 571.5h4v4h-4zM723.5 564.5h4v7h-4zM719.5 575.5h5v9.1h-5zM716.5 575.5h2v5h-2zM709.5 575.5h6v3h-6zM703.5 561.5h4v7h-4zM733.5 579.5h6v3h-6zM715.5 567.5h4v4h-4zM692.5 588.5h3v8.1h-3zM692.5 583.5h4v4h-4zM709.5 567.5h5v2h-5zM721.5 586.5h6v3h-6zM696.5 588.5h3v6h-3zM733.5 585.5h2v5h-2zM709.5 579.5h5v2h-5zM709.5 582.5h5v2h-5zM757.5 585.5h5v2h-5zM729.5 585.5h3v3h-3zM709.5 561.5h3v3h-3zM758.5 573.5h4v4h-4zM750.5 629.5h3v8.1h-3zM750.5 624.5h5v2h-5zM729.5 616.5h4v4h-4zM756.5 624.5h6v3h-6zM728.5 633.5h13.1v7h-13.1zM729.5 622.5h3v8.1h-3zM754.5 629.5h3v3h-3zM746.5 629.5h3v8.1h-3zM648.5 627.5h3v6h-3zM643.5 626.5h4v7h-4zM653.5 627.5h6v11.1h-6zM648.5 619.5h3v6h-3zM724.5 616.5h4v4h-4zM738.5 620.5h11.1v6h-11.1zM700.5 626.5h11.1v6h-11.1zM660.5 627.5h3v8.1h-3zM689.5 621.5h7v4h-7zM714.5 626.5h3v6h-3zM643.5 619.5h3v6h-3zM722.5 633.5h4v7h-4zM643.5 615.5h6v3h-6zM754.5 636.5h3v3h-3zM648.5 635.5h3v3h-3zM752.5 614.5h3v8.1h-3zM660.5 638.5h5v2h-5zM672.5 616.5h4v4h-4zM666.5 638.5h5v2h-5zM652.5 619.5h6v3h-6zM718.5 633.5h3v6h-3zM661.5 619.5h6v3h-6zM748.5 614.5h2v5h-2zM689.5 627.5h2v5h-2zM705.5 633.5h9.1v5h-9.1zM759.5 628.5h3v8.1h-3zM700.5 619.5h6v3h-6zM633.5 630.5h6v3h-6zM633.5 635.5h9.1v5h-9.1zM718.5 626.5h3v6h-3zM718.5 619.5h3v6h-3zM695.5 633.5h9.1v5h-9.1zM735.5 621.5h2v5h-2zM735.5 627.5h2v5h-2zM634.5 623.5h5v2h-5zM665.5 627.5h3v6h-3zM742.5 633.5h3v6h-3zM724.5 621.5h2v5h-2zM661.5 624.5h5v2h-5zM689.5 633.5h5v2h-5zM670.5 626.5h4v7h-4zM714.5 619.5h3v6h-3zM678.5 626.5h4v4h-4zM739.5 613.5h4v4h-4zM692.5 627.5h6v3h-6zM679.5 616.5h3v3h-3zM689.5 616.5h8.1v3h-8.1zM678.5 622.5h3v3h-3zM683.5 625.5h4v7h-4zM683.5 616.5h3v6h-3zM724.5 627.5h3v3h-3zM700.5 614.5h8.1v3h-8.1zM756.5 612.5h6v11.1h-6zM707.5 618.5h4v4h-4zM636.5 613.5h3v6h-3zM644.5 635.5h3v3h-3zM734.5 612.5h3v8.1h-3zM679.5 632.5h3v8.1h-3zM535.5 547.5h3v3h-3zM535.5 552.5h11.1v6h-11.1zM542.5 544.5h4v7h-4zM539.5 544.5h2v5h-2zM549.5 544.5h2v5h-2zM530.5 544.5h3v8.1h-3zM547.5 552.5h2v5h-2z" fill="none" stroke="#f4f4f4" stroke-width="0.95"/><circle cx="817" cy="643" r="3.6" fill="#ffd93d"/><circle cx="831.5" cy="643" r="3.6" fill="#ffd93d"/><circle cx="846" cy="643" r="3.6" fill="#ffd93d"/><circle cx="860.5" cy="643" r="3.6" fill="#ffd93d"/><circle cx="875" cy="643" r="3.6" fill="#ffd93d"/><circle cx="889.5" cy="643" r="3.6" fill="#ffd93d"/><circle cx="904" cy="643" r="3.6" fill="#ffd93d"/><circle cx="918.5" cy="643" r="3.6" fill="#ffd93d"/><circle cx="933" cy="643" r="3.6" fill="#ffd93d"/><circle cx="947.5" cy="643" r="3.6" fill="#ffd93d"/><circle cx="947.5" cy="629" r="3.6" fill="#ffd93d"/><circle cx="947.5" cy="615.3" r="3.6" fill="#8a8a8a"/><circle cx="541" cy="627" r="3.5" fill="#ffd93d"/><path d="M606 643.5 L611.5 649 L606 654.5 L600.5 649 Z" fill="#8a8a8a"/><path d="M552 646.4 L554.6 649 L552 651.6 L549.4 649 Z" fill="#ffd93d"/><path d="M560 646.4 L562.6 649 L560 651.6 L557.4 649 Z" fill="#ffd93d"/><path d="M568 646.4 L570.6 649 L568 651.6 L565.4 649 Z" fill="#ffd93d"/><path d="M644.6 650.9 L647.2 653.5 L644.6 656.1 L642 653.5 Z" fill="#ffd93d"/><path d="M649.6 650.9 L652.2 653.5 L649.6 656.1 L647 653.5 Z" fill="#ffd93d"/><path d="M680 650.9 L682.6 653.5 L680 656.1 L677.4 653.5 Z" fill="#ffd93d"/><path d="M686 650.9 L688.6 653.5 L686 656.1 L683.4 653.5 Z" fill="#ffd93d"/><path d="M694.5 650.9 L697.1 653.5 L694.5 656.1 L691.9 653.5 Z" fill="#ffd93d"/><path d="M714.5 650.9 L717.1 653.5 L714.5 656.1 L711.9 653.5 Z" fill="#ffd93d"/><path d="M720.5 650.9 L723.1 653.5 L720.5 656.1 L717.9 653.5 Z" fill="#ffd93d"/><g transform="rotate(-35 478 490)"><rect x="470" y="483" width="15" height="14" fill="none" stroke="#f4f4f4" stroke-width="0.9"/><rect x="472" y="486" width="4" height="8" fill="#8a8a8a"/><rect x="479" y="486" width="4" height="8" fill="#8a8a8a"/></g><path d="M1002 404.5 Q1002 400 1004 396.5 L1004 396.5 Q1006 393 1011 393 L1018 393 Q1023 393 1027.5 395.1 L1042.5 401.9 Q1047 404 1051 401.1 L1054 398.9 Q1058 396 1061.5 394.5 L1061.5 394.5 Q1065 393 1070 393 L1091 393 Q1096 393 1097 395.5 L1097 395.5 Q1098 398 1098 403 L1098 423 Q1098 428 1096 430.5 L1096 430.5 Q1094 433 1089 433 L1028 433 Q1023 433 1019.8 429.1 L1017.2 425.9 Q1014 422 1009.5 420 L1009.5 420 Q1005 418 1003.5 413.5 L1003.5 413.5 Q1002 409 1002 404.5 Z" fill="none" stroke="#dedede" stroke-width="2.6"/><path d="M1068 411.9h2.1v1.8h-2.1zM1072 412.9h2.2v4.1h-2.2zM1075.9 412.9h2.2v4.1h-2.2zM1068 405.9h1.8v2.1h-1.8zM1071.2 405.9h1.8v2.1h-1.8zM1061 411.9h1.2v3.1h-1.2zM1062.8 411.9h1.2v3.1h-1.2zM1061 416.9h1.2v3.1h-1.2zM1062.8 416.9h1.2v3.1h-1.2zM1081 412.9h2.9v4.1h-2.9zM1086.1 412.9h2.9v4.1h-2.9zM1051 416.9h2.2v4.1h-2.2zM1068 420.9h3.1v2.6h-3.1zM1068 425.5h3.1v2.6h-3.1zM1081 421.9h2.1v1.8h-2.1zM1081 425.2h2.1v1.8h-2.1zM1046 416.9h1.2v3.1h-1.2zM1047.8 416.9h1.2v3.1h-1.2zM1042 410.9h2.2v4.1h-2.2zM1040 416.9h4.1v2.9h-4.1zM1040 422.1h4.1v2.9h-4.1zM1080 398.9h2.2v4.1h-2.2zM1083.9 398.9h2.2v4.1h-2.2zM1073 420.9h3.1v2.6h-3.1zM1085 422.9h2.2v4.1h-2.2zM1034 412.1h4.1v2.9h-4.1zM1052 423.9h1.8v2.1h-1.8zM1055.2 423.9h1.8v2.1h-1.8zM1088 398.9h4.1v2.9h-4.1zM1088 404.1h4.1v2.9h-4.1zM1043 406.9h1.8v2.1h-1.8zM1046.2 406.9h1.8v2.1h-1.8zM1027 409.9h4.1v2.9h-4.1zM1027 415.1h4.1v2.9h-4.1zM1076.2 399.9h1.8v2.1h-1.8zM1062 422.9h2.1v1.8h-2.1zM1035 417.9h1.2v3.1h-1.2zM1065.9 399.9h2.2v4.1h-2.2zM1009 403.9h2.6v3.1h-2.6zM1013.5 403.9h2.6v3.1h-2.6zM1046 421.9h1.2v3.1h-1.2zM1047.8 421.9h1.2v3.1h-1.2zM1027 404.9h1.2v3.1h-1.2zM1020 407.1h4.1v2.9h-4.1zM1025 421.9h2.9v4.1h-2.9zM1013 396.9h1.2v3.1h-1.2zM1014.8 396.9h1.2v3.1h-1.2zM1050 406.9h1.8v2.1h-1.8zM1075 403.9h1.2v3.1h-1.2zM1009 396.9h2.1v1.8h-2.1zM1009 400.2h2.1v1.8h-2.1zM1080 408.9h1.8v2.1h-1.8zM1236.9 567.2h10.1v7.7h-10.1z" fill="#ffd93d"/><path d="M1068 415.2h2.1v1.8h-2.1zM1051 411.9h2.6v3.1h-2.6zM1055.5 411.9h2.6v3.1h-2.6zM1054.9 416.9h2.2v4.1h-2.2zM1045.9 410.9h2.2v4.1h-2.2zM1073 425.5h3.1v2.6h-3.1zM1088.9 422.9h2.2v4.1h-2.2zM1034 406.9h4.1v2.9h-4.1zM1057 406.9h2.6v3.1h-2.6zM1061.5 406.9h2.6v3.1h-2.6zM1073 399.9h1.8v2.1h-1.8zM1062 426.2h2.1v1.8h-2.1zM1020 414.9h2.1v1.8h-2.1zM1020 418.2h2.1v1.8h-2.1zM1036.8 417.9h1.2v3.1h-1.2zM1062 399.9h2.2v4.1h-2.2zM1080 404.9h1.8v2.1h-1.8zM1083.2 404.9h1.8v2.1h-1.8zM1010 411.9h1.8v2.1h-1.8zM1013.2 411.9h1.8v2.1h-1.8zM1028.8 404.9h1.2v3.1h-1.2zM1020 401.9h4.1v2.9h-4.1zM1030.1 421.9h2.9v4.1h-2.9zM1053.2 406.9h1.8v2.1h-1.8zM1076.8 403.9h1.2v3.1h-1.2zM1036 422.9h2.1v1.8h-2.1zM1036 426.2h2.1v1.8h-2.1zM1083.2 408.9h1.8v2.1h-1.8zM1029.9 442h23v7.9h-23zM1121.2 442h23.9v7.9h-23.9zM1195.1 442h16.9v7.9h-16.9zM1226.2 442h11.6v7.9h-11.6zM1247.9 442h9v24.9h-9zM1028.2 568h17.9v8.5h-17.9zM1111 568h23.9v8.5h-23.9zM1182.1 568h13v8.5h-13zM1215.1 568h18.8v8.5h-18.8zM1250.9 562.9h6v13.7h-6zM1001.4 485.2h4.6v15.4h-4.6zM1008.9 485.2h5.1v15.4h-5.1zM1001.4 510h4.6v15.4h-4.6zM1008.9 510h5.1v15.4h-5.1zM1001.4 534.7h4.6v15.4h-4.6zM1008.9 534.7h5.1v15.4h-5.1zM1019.1 495h3.9v3.9h-3.9zM1073.7 495h4.4v3.1h-4.4z" fill="#8a8a8a"/><path d="M1067.5 411.5h3v6h-3zM1071.5 412.5h7v5h-7zM1067.5 405.5h6v3h-6zM1060.5 411.5h4v4h-4zM1060.5 416.5h4v4h-4zM1050.5 411.5h8.1v4h-8.1zM1080.5 412.5h9.1v5h-9.1zM1050.5 416.5h7v5h-7zM1067.5 420.5h4v8.1h-4zM1080.5 421.5h3v6h-3zM1045.5 416.5h4v4h-4zM1041.5 410.5h7v5h-7zM1039.5 416.5h5v9.1h-5zM1079.5 398.5h7v5h-7zM1072.5 420.5h4v8.1h-4zM1084.5 422.5h7v5h-7zM1033.5 406.5h5v9.1h-5zM1056.5 406.5h8.1v4h-8.1zM1051.5 423.5h6v3h-6zM1087.5 398.5h5v9.1h-5zM1042.5 406.5h6v3h-6zM1026.5 409.5h5v9.1h-5zM1072.5 399.5h6v3h-6zM1061.5 422.5h3v6h-3zM1019.5 414.5h3v6h-3zM1034.5 417.5h4v4h-4zM1061.5 399.5h7v5h-7zM1079.5 404.5h6v3h-6zM1008.5 403.5h8.1v4h-8.1zM1009.5 411.5h6v3h-6zM1045.5 421.5h4v4h-4zM1026.5 404.5h4v4h-4zM1019.5 401.5h5v9.1h-5zM1024.5 421.5h9.1v5h-9.1zM1012.5 396.5h4v4h-4zM1049.5 406.5h6v3h-6zM1074.5 403.5h4v4h-4zM1008.5 396.5h3v6h-3zM1035.5 422.5h3v6h-3zM1079.5 408.5h6v3h-6z" fill="none" stroke="#f4f4f4" stroke-width="0.95"/><path d="M1001.5 442.1h255.9v134.4h-255.9z" fill="none" stroke="#f4f4f4" stroke-width="1.1"/><circle cx="1246.3" cy="477.6" r="6.5" fill="#8a8a8a"/><path d="M1019.1 476.7h3.9v3.8h-3.9zM1019.1 485.7h3.9v3.8h-3.9zM1019.1 513.7h3.9v3.8h-3.9zM1019.1 521.9h3.9v3.8h-3.9zM1019.1 529.1h3.9v3.8h-3.9zM1019.1 537h3.9v3.8h-3.9zM1019.1 545.8h3.9v3.8h-3.9zM1055 481h15v4.8h-15zM1055 489.8h15v4.4h-15zM1055 498h15v5.1h-15zM1055 507.1h15v4.6h-15zM1055 516h15v4.3h-15zM1055 524h15v4.8h-15zM1055 533h15v4.6h-15zM1055 541.1h15v4.8h-15zM1097 479.6h2.9v3.1h-2.9zM1096.1 544.1h3.8v2.9h-3.8zM1116.1 479.6h3.4v3.1h-3.4zM1115.2 544.1h4.3v2.9h-4.3zM1137.1 479.6h2.9v3.1h-2.9zM1136.2 544.1h3.8v2.9h-3.8zM1088.8 489.2h5.1v4.6h-5.1zM1102.1 489.2h11.9v4.6h-11.9zM1122.1 489.2h11.9v4.6h-11.9zM1142 489.2h5.1v4.6h-5.1zM1108.7 514.8h4.3v5.1h-4.3zM1122.9 514.8h4.3v5.1h-4.3zM1088.8 533h5.1v4.6h-5.1zM1102.1 533h11.9v4.6h-11.9zM1114.9 529.1h6.3v5.6h-6.3zM1122.1 533h11.9v4.6h-11.9zM1142 533h5.6v4.6h-5.6zM1172.9 479.6h2.9v3.1h-2.9zM1172.1 544.1h3.8v2.9h-3.8zM1192 479.6h3.4v3.1h-3.4zM1191.2 544.1h4.3v2.9h-4.3zM1213 479.6h2.9v3.1h-2.9zM1212.2 544.1h3.8v2.9h-3.8zM1164.7 489.2h5.1v4.6h-5.1zM1178 489.2h11.9v4.6h-11.9zM1198 489.2h11.9v4.6h-11.9zM1218 489.2h5.1v4.6h-5.1zM1184.7 514.8h4.3v5.1h-4.3zM1198.9 514.8h4.3v5.1h-4.3zM1164.7 533h5.1v4.6h-5.1zM1178 533h11.9v4.6h-11.9zM1190.9 529.1h6.3v5.6h-6.3zM1198 533h11.9v4.6h-11.9zM1218 533h5.6v4.6h-5.6z" fill="#0b7c80"/><path d="M1073.7 476.7h4.4v4.3h-4.4zM1073.7 485.7h4.4v4.1h-4.4zM1077.8 502.3h3.1v5.6h-3.1zM1077.8 520.2h3.1v5.5h-3.1zM1073.7 530h4.4v3.1h-4.4zM1073.7 537.8h4.4v3.2h-4.4zM1073.7 546.7h4.4v3.4h-4.4zM1094.7 491.7h6.3v5.5h-6.3zM1114.9 491.7h6.3v5.5h-6.3zM1134.9 491.7h6.3v5.5h-6.3zM1092.2 506.1h4.8v5.6h-4.8zM1101.1 506.1h4.8v5.6h-4.8zM1108.7 506.1h4.3v5.6h-4.3zM1122.9 506.1h4.3v5.6h-4.3zM1130.1 506.1h4.8v5.6h-4.8zM1130.1 514.8h4.8v5.1h-4.8zM1139.1 506.1h4.8v5.6h-4.8zM1139.1 514.8h4.8v5.1h-4.8zM1134.9 529.1h6.3v5.6h-6.3zM1170.7 491.7h6.3v5.5h-6.3zM1190.9 491.7h6.3v5.5h-6.3zM1210.8 491.7h6.3v5.5h-6.3zM1168.1 506.1h4.8v5.6h-4.8zM1177 506.1h4.8v5.6h-4.8zM1184.7 506.1h4.3v5.6h-4.3zM1198.9 506.1h4.3v5.6h-4.3zM1206 506.1h4.8v5.6h-4.8zM1206 514.8h4.8v5.1h-4.8zM1215.1 506.1h4.8v5.6h-4.8zM1215.1 514.8h4.8v5.1h-4.8zM1210.8 529.1h6.3v5.6h-6.3z" fill="#ffd93d"/><path d="M1092.2 514.8h4.8v5.1h-4.8zM1101.1 514.8h4.8v5.1h-4.8zM1095.1 529.1h6v5.6h-6zM1168.1 514.8h4.8v5.1h-4.8zM1177 514.8h4.8v5.1h-4.8zM1171 529.1h6v5.6h-6z" fill="#8a8a8a"/><path d="M1302 378 Q1302 373 1304 372 L1304 372 Q1306 371 1311 370.9 L1350 370.1 Q1355 370 1358.9 366.9 L1360.1 366.1 Q1364 363 1369 363 L1449 363 Q1454 363 1456 366 L1456 366 Q1458 369 1458 374 L1458 426 Q1458 431 1460 432.5 L1460 432.5 Q1462 434 1462 439 L1462 439 Q1462 444 1459.5 447.5 L1459.5 447.5 Q1457 451 1457 454 L1457 454 Q1457 457 1454.5 459.5 L1454.5 459.5 Q1452 462 1447 462 L1387 462 Q1382 462 1378.5 458.5 L1378.5 458.5 Q1375 455 1370 455 L1314 455 Q1309 455 1305.5 451.5 L1305.5 451.5 Q1302 448 1302 443 Z" fill="none" stroke="#f4f4f4" stroke-width="1"/><path d="M1281 389 Q1276 392 1276 400 V428 Q1276 435 1281 437 M1291 389 Q1296 392 1296 400 V428 Q1296 435 1291 437" fill="none" stroke="#dedede" stroke-width="2"/><path d="M1286 419.9h1.5v2.1h-1.5zM1281 419.9h3.1v2.2h-3.1zM1281 423.9h3.1v2.2h-3.1zM1281 414.9h2.2v3.1h-2.2zM1288.6 423.9h1.5v2.1h-1.5zM1281 409.9h2.2v3.1h-2.2zM1286 401.9h2.1v1.5h-2.1zM1286 396.9h1.5v2.1h-1.5z" fill="#ffd93d"/><path d="M1288.6 419.9h1.5v2.1h-1.5zM1281 427.9h2.2v3.1h-2.2zM1284.9 427.9h2.2v3.1h-2.2zM1284.9 414.9h2.2v3.1h-2.2zM1286 423.9h1.5v2.1h-1.5zM1284.9 409.9h2.2v3.1h-2.2zM1286 404.6h2.1v1.5h-2.1zM1281 401.9h3.1v2.2h-3.1zM1281 405.9h3.1v2.2h-3.1zM1288.6 396.9h1.5v2.1h-1.5z" fill="#8a8a8a"/><path d="M1285.5 419.5h5v3h-5zM1280.5 419.5h4v7h-4zM1280.5 427.5h7v4h-7zM1280.5 414.5h7v4h-7zM1285.5 423.5h5v3h-5zM1280.5 409.5h7v4h-7zM1285.5 401.5h3v5h-3zM1280.5 401.5h4v7h-4zM1285.5 396.5h5v3h-5z" fill="none" stroke="#f4f4f4" stroke-width="0.95"/><path d="M1267 481 Q1267 476 1269 474 L1269 474 Q1271 472 1276 472 L1423 472 Q1428 472 1432.9 472.9 L1468.1 479.1 Q1473 480 1476 484 L1476 484 Q1479 488 1479 493 L1479 608 Q1479 613 1475.5 616.5 L1474.5 617.5 Q1471 621 1466 621.2 L1443 621.8 Q1438 622 1436 624.5 L1436 624.5 Q1434 627 1434 632 L1434 662 Q1434 667 1431 670.5 L1431 670.5 Q1428 674 1423 674 L1359 674 Q1354 674 1351.6 669.6 L1351.4 669.4 Q1349 665 1345.8 661.2 L1342.2 656.8 Q1339 653 1334 653 L1328 653 Q1323 653 1319.8 656.8 L1316.2 661.2 Q1313 665 1310.2 669.2 L1309.8 669.8 Q1307 674 1302 674 L1195 675 Q1190 675 1186.7 671.2 L1186.3 670.8 Q1183 667 1183 662 L1183 599 Q1183 594 1186.5 590.5 L1186.5 590.5 Q1190 587 1195 586.9 L1253 585.1 Q1258 585 1261.5 581.5 L1263.5 579.5 Q1267 576 1267 571 Z" fill="none" stroke="#dedede" stroke-width="2.6"/><path d="M1279.4 499.9h89.7v84.2h-89.7z" fill="none" stroke="#f4f4f4" stroke-width="0.8"/><path d="M1280.5 503h3M1282 501.5v3M1287 503h3M1288.5 501.5v3M1290.2 503h3M1291.8 501.5v3M1293.5 503h3M1295 501.5v3M1296.8 503h3M1298.2 501.5v3M1300 503h3M1301.5 501.5v3M1306.5 503h3M1308 501.5v3M1309.8 503h3M1311.2 501.5v3M1313 503h3M1314.5 501.5v3M1319.5 503h3M1321 501.5v3M1322.8 503h3M1324.2 501.5v3M1326 503h3M1327.5 501.5v3M1329.2 503h3M1330.8 501.5v3M1332.5 503h3M1334 501.5v3M1335.8 503h3M1337.2 501.5v3M1339 503h3M1340.5 501.5v3M1342.2 503h3M1343.8 501.5v3M1348.8 503h3M1350.2 501.5v3M1355.2 503h3M1356.8 501.5v3M1358.5 503h3M1360 501.5v3M1365 503h3M1366.5 501.5v3M1287 506.2h3M1288.5 504.8v3M1290.2 506.2h3M1291.8 504.8v3M1293.5 506.2h3M1295 504.8v3M1296.8 506.2h3M1298.2 504.8v3M1300 506.2h3M1301.5 504.8v3M1303.2 506.2h3M1304.8 504.8v3M1306.5 506.2h3M1308 504.8v3M1309.8 506.2h3M1311.2 504.8v3M1313 506.2h3M1314.5 504.8v3M1319.5 506.2h3M1321 504.8v3M1322.8 506.2h3M1324.2 504.8v3M1326 506.2h3M1327.5 504.8v3M1332.5 506.2h3M1334 504.8v3M1335.8 506.2h3M1337.2 504.8v3M1342.2 506.2h3M1343.8 504.8v3M1345.5 506.2h3M1347 504.8v3M1348.8 506.2h3M1350.2 504.8v3M1352 506.2h3M1353.5 504.8v3M1361.8 506.2h3M1363.2 504.8v3M1365 506.2h3M1366.5 504.8v3M1280.5 509.5h3M1282 508v3M1283.8 509.5h3M1285.2 508v3M1287 509.5h3M1288.5 508v3M1290.2 509.5h3M1291.8 508v3M1293.5 509.5h3M1295 508v3M1296.8 509.5h3M1298.2 508v3M1300 509.5h3M1301.5 508v3M1303.2 509.5h3M1304.8 508v3M1306.5 509.5h3M1308 508v3M1309.8 509.5h3M1311.2 508v3M1313 509.5h3M1314.5 508v3M1316.2 509.5h3M1317.8 508v3M1319.5 509.5h3M1321 508v3M1326 509.5h3M1327.5 508v3M1329.2 509.5h3M1330.8 508v3M1332.5 509.5h3M1334 508v3M1335.8 509.5h3M1337.2 508v3M1339 509.5h3M1340.5 508v3M1342.2 509.5h3M1343.8 508v3M1345.5 509.5h3M1347 508v3M1348.8 509.5h3M1350.2 508v3M1352 509.5h3M1353.5 508v3M1355.2 509.5h3M1356.8 508v3M1358.5 509.5h3M1360 508v3M1365 509.5h3M1366.5 508v3M1280.5 512.8h3M1282 511.2v3M1283.8 512.8h3M1285.2 511.2v3M1287 512.8h3M1288.5 511.2v3M1290.2 512.8h3M1291.8 511.2v3M1293.5 512.8h3M1295 511.2v3M1296.8 512.8h3M1298.2 511.2v3M1300 512.8h3M1301.5 511.2v3M1303.2 512.8h3M1304.8 511.2v3M1309.8 512.8h3M1311.2 511.2v3M1313 512.8h3M1314.5 511.2v3M1316.2 512.8h3M1317.8 511.2v3M1319.5 512.8h3M1321 511.2v3M1322.8 512.8h3M1324.2 511.2v3M1326 512.8h3M1327.5 511.2v3M1329.2 512.8h3M1330.8 511.2v3M1335.8 512.8h3M1337.2 511.2v3M1339 512.8h3M1340.5 511.2v3M1342.2 512.8h3M1343.8 511.2v3M1345.5 512.8h3M1347 511.2v3M1348.8 512.8h3M1350.2 511.2v3M1352 512.8h3M1353.5 511.2v3M1355.2 512.8h3M1356.8 511.2v3M1358.5 512.8h3M1360 511.2v3M1361.8 512.8h3M1363.2 511.2v3M1365 512.8h3M1366.5 511.2v3M1280.5 516h3M1282 514.5v3M1283.8 516h3M1285.2 514.5v3M1287 516h3M1288.5 514.5v3M1290.2 516h3M1291.8 514.5v3M1293.5 516h3M1295 514.5v3M1296.8 516h3M1298.2 514.5v3M1300 516h3M1301.5 514.5v3M1303.2 516h3M1304.8 514.5v3M1306.5 516h3M1308 514.5v3M1309.8 516h3M1311.2 514.5v3M1313 516h3M1314.5 514.5v3M1316.2 516h3M1317.8 514.5v3M1319.5 516h3M1321 514.5v3M1322.8 516h3M1324.2 514.5v3M1326 516h3M1327.5 514.5v3M1329.2 516h3M1330.8 514.5v3M1332.5 516h3M1334 514.5v3M1335.8 516h3M1337.2 514.5v3M1339 516h3M1340.5 514.5v3M1342.2 516h3M1343.8 514.5v3M1345.5 516h3M1347 514.5v3M1348.8 516h3M1350.2 514.5v3M1352 516h3M1353.5 514.5v3M1355.2 516h3M1356.8 514.5v3M1358.5 516h3M1360 514.5v3M1361.8 516h3M1363.2 514.5v3M1365 516h3M1366.5 514.5v3M1280.5 519.2h3M1282 517.8v3M1283.8 519.2h3M1285.2 517.8v3M1287 519.2h3M1288.5 517.8v3M1290.2 519.2h3M1291.8 517.8v3M1293.5 519.2h3M1295 517.8v3M1296.8 519.2h3M1298.2 517.8v3M1300 519.2h3M1301.5 517.8v3M1303.2 519.2h3M1304.8 517.8v3M1306.5 519.2h3M1308 517.8v3M1309.8 519.2h3M1311.2 517.8v3M1316.2 519.2h3M1317.8 517.8v3M1319.5 519.2h3M1321 517.8v3M1322.8 519.2h3M1324.2 517.8v3M1329.2 519.2h3M1330.8 517.8v3M1332.5 519.2h3M1334 517.8v3M1335.8 519.2h3M1337.2 517.8v3M1339 519.2h3M1340.5 517.8v3M1342.2 519.2h3M1343.8 517.8v3M1345.5 519.2h3M1347 517.8v3M1348.8 519.2h3M1350.2 517.8v3M1352 519.2h3M1353.5 517.8v3M1355.2 519.2h3M1356.8 517.8v3M1358.5 519.2h3M1360 517.8v3M1361.8 519.2h3M1363.2 517.8v3M1365 519.2h3M1366.5 517.8v3M1280.5 522.5h3M1282 521v3M1283.8 522.5h3M1285.2 521v3M1287 522.5h3M1288.5 521v3M1290.2 522.5h3M1291.8 521v3M1293.5 522.5h3M1295 521v3M1296.8 522.5h3M1298.2 521v3M1300 522.5h3M1301.5 521v3M1306.5 522.5h3M1308 521v3M1309.8 522.5h3M1311.2 521v3M1313 522.5h3M1314.5 521v3M1316.2 522.5h3M1317.8 521v3M1319.5 522.5h3M1321 521v3M1326 522.5h3M1327.5 521v3M1329.2 522.5h3M1330.8 521v3M1332.5 522.5h3M1334 521v3M1335.8 522.5h3M1337.2 521v3M1342.2 522.5h3M1343.8 521v3M1345.5 522.5h3M1347 521v3M1348.8 522.5h3M1350.2 521v3M1352 522.5h3M1353.5 521v3M1355.2 522.5h3M1356.8 521v3M1358.5 522.5h3M1360 521v3M1361.8 522.5h3M1363.2 521v3M1365 522.5h3M1366.5 521v3M1280.5 525.8h3M1282 524.2v3M1283.8 525.8h3M1285.2 524.2v3M1287 525.8h3M1288.5 524.2v3M1290.2 525.8h3M1291.8 524.2v3M1293.5 525.8h3M1295 524.2v3M1296.8 525.8h3M1298.2 524.2v3M1300 525.8h3M1301.5 524.2v3M1303.2 525.8h3M1304.8 524.2v3M1306.5 525.8h3M1308 524.2v3M1309.8 525.8h3M1311.2 524.2v3M1316.2 525.8h3M1317.8 524.2v3M1319.5 525.8h3M1321 524.2v3M1329.2 525.8h3M1330.8 524.2v3M1332.5 525.8h3M1334 524.2v3M1335.8 525.8h3M1337.2 524.2v3M1339 525.8h3M1340.5 524.2v3M1342.2 525.8h3M1343.8 524.2v3M1345.5 525.8h3M1347 524.2v3M1348.8 525.8h3M1350.2 524.2v3M1355.2 525.8h3M1356.8 524.2v3M1358.5 525.8h3M1360 524.2v3M1361.8 525.8h3M1363.2 524.2v3M1365 525.8h3M1366.5 524.2v3M1280.5 529h3M1282 527.5v3M1283.8 529h3M1285.2 527.5v3M1290.2 529h3M1291.8 527.5v3M1293.5 529h3M1295 527.5v3M1296.8 529h3M1298.2 527.5v3M1300 529h3M1301.5 527.5v3M1303.2 529h3M1304.8 527.5v3M1306.5 529h3M1308 527.5v3M1309.8 529h3M1311.2 527.5v3M1313 529h3M1314.5 527.5v3M1319.5 529h3M1321 527.5v3M1322.8 529h3M1324.2 527.5v3M1329.2 529h3M1330.8 527.5v3M1332.5 529h3M1334 527.5v3M1335.8 529h3M1337.2 527.5v3M1339 529h3M1340.5 527.5v3M1342.2 529h3M1343.8 527.5v3M1345.5 529h3M1347 527.5v3M1348.8 529h3M1350.2 527.5v3M1352 529h3M1353.5 527.5v3M1358.5 529h3M1360 527.5v3M1361.8 529h3M1363.2 527.5v3M1365 529h3M1366.5 527.5v3M1280.5 532.2h3M1282 530.8v3M1283.8 532.2h3M1285.2 530.8v3M1287 532.2h3M1288.5 530.8v3M1293.5 532.2h3M1295 530.8v3M1296.8 532.2h3M1298.2 530.8v3M1300 532.2h3M1301.5 530.8v3M1303.2 532.2h3M1304.8 530.8v3M1306.5 532.2h3M1308 530.8v3M1309.8 532.2h3M1311.2 530.8v3M1326 532.2h3M1327.5 530.8v3M1329.2 532.2h3M1330.8 530.8v3M1335.8 532.2h3M1337.2 530.8v3M1339 532.2h3M1340.5 530.8v3M1342.2 532.2h3M1343.8 530.8v3M1345.5 532.2h3M1347 530.8v3M1348.8 532.2h3M1350.2 530.8v3M1352 532.2h3M1353.5 530.8v3M1355.2 532.2h3M1356.8 530.8v3M1358.5 532.2h3M1360 530.8v3M1361.8 532.2h3M1363.2 530.8v3M1365 532.2h3M1366.5 530.8v3M1280.5 535.5h3M1282 534v3M1283.8 535.5h3M1285.2 534v3M1287 535.5h3M1288.5 534v3M1290.2 535.5h3M1291.8 534v3M1293.5 535.5h3M1295 534v3M1296.8 535.5h3M1298.2 534v3M1300 535.5h3M1301.5 534v3M1303.2 535.5h3M1304.8 534v3M1306.5 535.5h3M1308 534v3M1316.2 535.5h3M1317.8 534v3M1322.8 535.5h3M1324.2 534v3M1335.8 535.5h3M1337.2 534v3M1339 535.5h3M1340.5 534v3M1348.8 535.5h3M1350.2 534v3M1352 535.5h3M1353.5 534v3M1355.2 535.5h3M1356.8 534v3M1358.5 535.5h3M1360 534v3M1361.8 535.5h3M1363.2 534v3M1365 535.5h3M1366.5 534v3M1280.5 538.8h3M1282 537.2v3M1283.8 538.8h3M1285.2 537.2v3M1290.2 538.8h3M1291.8 537.2v3M1293.5 538.8h3M1295 537.2v3M1296.8 538.8h3M1298.2 537.2v3M1300 538.8h3M1301.5 537.2v3M1303.2 538.8h3M1304.8 537.2v3M1306.5 538.8h3M1308 537.2v3M1335.8 538.8h3M1337.2 537.2v3M1348.8 538.8h3M1350.2 537.2v3M1352 538.8h3M1353.5 537.2v3M1355.2 538.8h3M1356.8 537.2v3M1358.5 538.8h3M1360 537.2v3M1361.8 538.8h3M1363.2 537.2v3M1365 538.8h3M1366.5 537.2v3M1280.5 542h3M1282 540.5v3M1283.8 542h3M1285.2 540.5v3M1290.2 542h3M1291.8 540.5v3M1293.5 542h3M1295 540.5v3M1296.8 542h3M1298.2 540.5v3M1300 542h3M1301.5 540.5v3M1345.5 542h3M1347 540.5v3M1348.8 542h3M1350.2 540.5v3M1352 542h3M1353.5 540.5v3M1355.2 542h3M1356.8 540.5v3M1358.5 542h3M1360 540.5v3M1361.8 542h3M1363.2 540.5v3M1365 542h3M1366.5 540.5v3M1280.5 545.2h3M1282 543.8v3M1283.8 545.2h3M1285.2 543.8v3M1287 545.2h3M1288.5 543.8v3M1290.2 545.2h3M1291.8 543.8v3M1300 545.2h3M1301.5 543.8v3M1303.2 545.2h3M1304.8 543.8v3M1345.5 545.2h3M1347 543.8v3M1352 545.2h3M1353.5 543.8v3M1355.2 545.2h3M1356.8 543.8v3M1358.5 545.2h3M1360 543.8v3M1361.8 545.2h3M1363.2 543.8v3M1365 545.2h3M1366.5 543.8v3M1280.5 548.5h3M1282 547v3M1283.8 548.5h3M1285.2 547v3M1287 548.5h3M1288.5 547v3M1290.2 548.5h3M1291.8 547v3M1293.5 548.5h3M1295 547v3M1296.8 548.5h3M1298.2 547v3M1300 548.5h3M1301.5 547v3M1303.2 548.5h3M1304.8 547v3M1319.5 548.5h3M1321 547v3M1322.8 548.5h3M1324.2 547v3M1342.2 548.5h3M1343.8 547v3M1345.5 548.5h3M1347 547v3M1348.8 548.5h3M1350.2 547v3M1352 548.5h3M1353.5 547v3M1358.5 548.5h3M1360 547v3M1361.8 548.5h3M1363.2 547v3M1365 548.5h3M1366.5 547v3M1280.5 551.8h3M1282 550.2v3M1283.8 551.8h3M1285.2 550.2v3M1287 551.8h3M1288.5 550.2v3M1290.2 551.8h3M1291.8 550.2v3M1293.5 551.8h3M1295 550.2v3M1296.8 551.8h3M1298.2 550.2v3M1300 551.8h3M1301.5 550.2v3M1303.2 551.8h3M1304.8 550.2v3M1306.5 551.8h3M1308 550.2v3M1319.5 551.8h3M1321 550.2v3M1339 551.8h3M1340.5 550.2v3M1342.2 551.8h3M1343.8 550.2v3M1345.5 551.8h3M1347 550.2v3M1348.8 551.8h3M1350.2 550.2v3M1355.2 551.8h3M1356.8 550.2v3M1361.8 551.8h3M1363.2 550.2v3M1365 551.8h3M1366.5 550.2v3M1280.5 555h3M1282 553.5v3M1283.8 555h3M1285.2 553.5v3M1287 555h3M1288.5 553.5v3M1290.2 555h3M1291.8 553.5v3M1293.5 555h3M1295 553.5v3M1296.8 555h3M1298.2 553.5v3M1300 555h3M1301.5 553.5v3M1303.2 555h3M1304.8 553.5v3M1316.2 555h3M1317.8 553.5v3M1332.5 555h3M1334 553.5v3M1335.8 555h3M1337.2 553.5v3M1342.2 555h3M1343.8 553.5v3M1345.5 555h3M1347 553.5v3M1348.8 555h3M1350.2 553.5v3M1352 555h3M1353.5 553.5v3M1355.2 555h3M1356.8 553.5v3M1358.5 555h3M1360 553.5v3M1361.8 555h3M1363.2 553.5v3M1365 555h3M1366.5 553.5v3M1280.5 558.2h3M1282 556.8v3M1283.8 558.2h3M1285.2 556.8v3M1287 558.2h3M1288.5 556.8v3M1293.5 558.2h3M1295 556.8v3M1296.8 558.2h3M1298.2 556.8v3M1300 558.2h3M1301.5 556.8v3M1303.2 558.2h3M1304.8 556.8v3M1306.5 558.2h3M1308 556.8v3M1313 558.2h3M1314.5 556.8v3M1319.5 558.2h3M1321 556.8v3M1322.8 558.2h3M1324.2 556.8v3M1332.5 558.2h3M1334 556.8v3M1335.8 558.2h3M1337.2 556.8v3M1339 558.2h3M1340.5 556.8v3M1345.5 558.2h3M1347 556.8v3M1348.8 558.2h3M1350.2 556.8v3M1352 558.2h3M1353.5 556.8v3M1355.2 558.2h3M1356.8 556.8v3M1358.5 558.2h3M1360 556.8v3M1361.8 558.2h3M1363.2 556.8v3M1365 558.2h3M1366.5 556.8v3M1280.5 561.5h3M1282 560v3M1283.8 561.5h3M1285.2 560v3M1287 561.5h3M1288.5 560v3M1290.2 561.5h3M1291.8 560v3M1293.5 561.5h3M1295 560v3M1296.8 561.5h3M1298.2 560v3M1300 561.5h3M1301.5 560v3M1303.2 561.5h3M1304.8 560v3M1306.5 561.5h3M1308 560v3M1309.8 561.5h3M1311.2 560v3M1313 561.5h3M1314.5 560v3M1316.2 561.5h3M1317.8 560v3M1326 561.5h3M1327.5 560v3M1329.2 561.5h3M1330.8 560v3M1332.5 561.5h3M1334 560v3M1335.8 561.5h3M1337.2 560v3M1339 561.5h3M1340.5 560v3M1342.2 561.5h3M1343.8 560v3M1345.5 561.5h3M1347 560v3M1348.8 561.5h3M1350.2 560v3M1352 561.5h3M1353.5 560v3M1355.2 561.5h3M1356.8 560v3M1358.5 561.5h3M1360 560v3M1361.8 561.5h3M1363.2 560v3M1365 561.5h3M1366.5 560v3M1280.5 564.8h3M1282 563.2v3M1287 564.8h3M1288.5 563.2v3M1290.2 564.8h3M1291.8 563.2v3M1293.5 564.8h3M1295 563.2v3M1296.8 564.8h3M1298.2 563.2v3M1300 564.8h3M1301.5 563.2v3M1303.2 564.8h3M1304.8 563.2v3M1306.5 564.8h3M1308 563.2v3M1309.8 564.8h3M1311.2 563.2v3M1313 564.8h3M1314.5 563.2v3M1319.5 564.8h3M1321 563.2v3M1322.8 564.8h3M1324.2 563.2v3M1326 564.8h3M1327.5 563.2v3M1329.2 564.8h3M1330.8 563.2v3M1332.5 564.8h3M1334 563.2v3M1335.8 564.8h3M1337.2 563.2v3M1339 564.8h3M1340.5 563.2v3M1342.2 564.8h3M1343.8 563.2v3M1345.5 564.8h3M1347 563.2v3M1348.8 564.8h3M1350.2 563.2v3M1352 564.8h3M1353.5 563.2v3M1355.2 564.8h3M1356.8 563.2v3M1358.5 564.8h3M1360 563.2v3M1365 564.8h3M1366.5 563.2v3M1280.5 568h3M1282 566.5v3M1283.8 568h3M1285.2 566.5v3M1287 568h3M1288.5 566.5v3M1290.2 568h3M1291.8 566.5v3M1293.5 568h3M1295 566.5v3M1296.8 568h3M1298.2 566.5v3M1300 568h3M1301.5 566.5v3M1303.2 568h3M1304.8 566.5v3M1306.5 568h3M1308 566.5v3M1309.8 568h3M1311.2 566.5v3M1313 568h3M1314.5 566.5v3M1316.2 568h3M1317.8 566.5v3M1319.5 568h3M1321 566.5v3M1322.8 568h3M1324.2 566.5v3M1326 568h3M1327.5 566.5v3M1329.2 568h3M1330.8 566.5v3M1332.5 568h3M1334 566.5v3M1335.8 568h3M1337.2 566.5v3M1339 568h3M1340.5 566.5v3M1345.5 568h3M1347 566.5v3M1348.8 568h3M1350.2 566.5v3M1352 568h3M1353.5 566.5v3M1355.2 568h3M1356.8 566.5v3M1361.8 568h3M1363.2 566.5v3M1365 568h3M1366.5 566.5v3M1283.8 571.2h3M1285.2 569.8v3M1287 571.2h3M1288.5 569.8v3M1290.2 571.2h3M1291.8 569.8v3M1293.5 571.2h3M1295 569.8v3M1296.8 571.2h3M1298.2 569.8v3M1300 571.2h3M1301.5 569.8v3M1303.2 571.2h3M1304.8 569.8v3M1306.5 571.2h3M1308 569.8v3M1313 571.2h3M1314.5 569.8v3M1316.2 571.2h3M1317.8 569.8v3M1319.5 571.2h3M1321 569.8v3M1322.8 571.2h3M1324.2 569.8v3M1326 571.2h3M1327.5 569.8v3M1329.2 571.2h3M1330.8 569.8v3M1332.5 571.2h3M1334 569.8v3M1335.8 571.2h3M1337.2 569.8v3M1339 571.2h3M1340.5 569.8v3M1342.2 571.2h3M1343.8 569.8v3M1345.5 571.2h3M1347 569.8v3M1348.8 571.2h3M1350.2 569.8v3M1352 571.2h3M1353.5 569.8v3M1355.2 571.2h3M1356.8 569.8v3M1358.5 571.2h3M1360 569.8v3M1361.8 571.2h3M1363.2 569.8v3M1365 571.2h3M1366.5 569.8v3M1280.5 574.5h3M1282 573v3M1283.8 574.5h3M1285.2 573v3M1293.5 574.5h3M1295 573v3M1296.8 574.5h3M1298.2 573v3M1300 574.5h3M1301.5 573v3M1303.2 574.5h3M1304.8 573v3M1309.8 574.5h3M1311.2 573v3M1313 574.5h3M1314.5 573v3M1319.5 574.5h3M1321 573v3M1322.8 574.5h3M1324.2 573v3M1326 574.5h3M1327.5 573v3M1329.2 574.5h3M1330.8 573v3M1332.5 574.5h3M1334 573v3M1335.8 574.5h3M1337.2 573v3M1339 574.5h3M1340.5 573v3M1342.2 574.5h3M1343.8 573v3M1345.5 574.5h3M1347 573v3M1348.8 574.5h3M1350.2 573v3M1352 574.5h3M1353.5 573v3M1358.5 574.5h3M1360 573v3M1361.8 574.5h3M1363.2 573v3M1365 574.5h3M1366.5 573v3M1280.5 577.8h3M1282 576.2v3M1283.8 577.8h3M1285.2 576.2v3M1287 577.8h3M1288.5 576.2v3M1290.2 577.8h3M1291.8 576.2v3M1293.5 577.8h3M1295 576.2v3M1296.8 577.8h3M1298.2 576.2v3M1300 577.8h3M1301.5 576.2v3M1309.8 577.8h3M1311.2 576.2v3M1313 577.8h3M1314.5 576.2v3M1316.2 577.8h3M1317.8 576.2v3M1319.5 577.8h3M1321 576.2v3M1322.8 577.8h3M1324.2 576.2v3M1326 577.8h3M1327.5 576.2v3M1329.2 577.8h3M1330.8 576.2v3M1332.5 577.8h3M1334 576.2v3M1335.8 577.8h3M1337.2 576.2v3M1339 577.8h3M1340.5 576.2v3M1342.2 577.8h3M1343.8 576.2v3M1345.5 577.8h3M1347 576.2v3M1348.8 577.8h3M1350.2 576.2v3M1352 577.8h3M1353.5 576.2v3M1355.2 577.8h3M1356.8 576.2v3M1358.5 577.8h3M1360 576.2v3M1361.8 577.8h3M1363.2 576.2v3M1365 577.8h3M1366.5 576.2v3M1283.8 581h3M1285.2 579.5v3M1287 581h3M1288.5 579.5v3M1290.2 581h3M1291.8 579.5v3M1296.8 581h3M1298.2 579.5v3M1300 581h3M1301.5 579.5v3M1303.2 581h3M1304.8 579.5v3M1306.5 581h3M1308 579.5v3M1309.8 581h3M1311.2 579.5v3M1313 581h3M1314.5 579.5v3M1316.2 581h3M1317.8 579.5v3M1319.5 581h3M1321 579.5v3M1322.8 581h3M1324.2 579.5v3M1326 581h3M1327.5 579.5v3M1329.2 581h3M1330.8 579.5v3M1332.5 581h3M1334 579.5v3M1339 581h3M1340.5 579.5v3M1342.2 581h3M1343.8 579.5v3M1345.5 581h3M1347 579.5v3M1352 581h3M1353.5 579.5v3M1355.2 581h3M1356.8 579.5v3M1358.5 581h3M1360 579.5v3M1365 581h3M1366.5 579.5v3M1398.4 514.6h2.7M1399.7 513.2v2.7M1403.6 514.6h2.7M1404.9 513.2v2.7M1414 514.6h2.7M1415.3 513.2v2.7M1419.2 514.6h2.7M1420.5 513.2v2.7M1401 517.2h2.7M1402.3 515.9v2.7M1406.2 517.2h2.7M1407.5 515.9v2.7M1393.2 519.8h2.7M1394.5 518.5v2.7M1398.4 519.8h2.7M1399.7 518.5v2.7M1403.6 519.8h2.7M1404.9 518.5v2.7M1414 519.8h2.7M1415.3 518.5v2.7M1419.2 519.8h2.7M1420.5 518.5v2.7M1395.8 522.4h2.7M1397.1 521v2.7M1401 522.4h2.7M1402.3 521v2.7M1411.4 522.4h2.7M1412.7 521v2.7M1393.2 536.5h2.7M1394.5 535.1v2.7M1403.6 536.5h2.7M1404.9 535.1v2.7M1408.8 536.5h2.7M1410.1 535.1v2.7M1414 536.5h2.7M1415.3 535.1v2.7M1419.2 536.5h2.7M1420.5 535.1v2.7M1395.8 539.1h2.7M1397.1 537.8v2.7M1401 539.1h2.7M1402.3 537.8v2.7M1406.2 539.1h2.7M1407.5 537.8v2.7M1411.4 539.1h2.7M1412.7 537.8v2.7M1393.2 541.7h2.7M1394.5 540.4v2.7M1408.8 541.7h2.7M1410.1 540.4v2.7M1419.2 541.7h2.7M1420.5 540.4v2.7M1401 544.3h2.7M1402.3 542.9v2.7M1406.2 544.3h2.7M1407.5 542.9v2.7M1411.4 544.3h2.7M1412.7 542.9v2.7M1393.2 546.9h2.7M1394.5 545.5v2.7M1398.4 546.9h2.7M1399.7 545.5v2.7M1403.6 546.9h2.7M1404.9 545.5v2.7M1414 546.9h2.7M1415.3 545.5v2.7M1419.2 546.9h2.7M1420.5 545.5v2.7M1401 549.5h2.7M1402.3 548.1v2.7M1411.4 549.5h2.7M1412.7 548.1v2.7M1416.6 549.5h2.7M1417.9 548.1v2.7M1393.2 552.1h2.7M1394.5 550.8v2.7M1398.4 552.1h2.7M1399.7 550.8v2.7M1414 552.1h2.7M1415.3 550.8v2.7M1419.2 552.1h2.7M1420.5 550.8v2.7M1401 554.7h2.7M1402.3 553.4v2.7M1406.2 554.7h2.7M1407.5 553.4v2.7M1416.6 554.7h2.7M1417.9 553.4v2.7M1393.2 557.3h2.7M1394.5 555.9v2.7M1398.4 557.3h2.7M1399.7 555.9v2.7M1419.2 557.3h2.7M1420.5 555.9v2.7M1395.8 559.9h2.7M1397.1 558.5v2.7M1411.4 559.9h2.7M1412.7 558.5v2.7M1416.6 559.9h2.7M1417.9 558.5v2.7M1398.4 562.5h2.7M1399.7 561.1v2.7M1403.6 562.5h2.7M1404.9 561.1v2.7M1419.2 562.5h2.7M1420.5 561.1v2.7M1401 565.1h2.7M1402.3 563.8v2.7M1411.4 565.1h2.7M1412.7 563.8v2.7M1416.6 565.1h2.7M1417.9 563.8v2.7M1393.2 567.7h2.7M1394.5 566.4v2.7M1398.4 567.7h2.7M1399.7 566.4v2.7M1403.6 567.7h2.7M1404.9 566.4v2.7M1408.8 567.7h2.7M1410.1 566.4v2.7M1414 567.7h2.7M1415.3 566.4v2.7M1395.8 570.3h2.7M1397.1 568.9v2.7M1411.4 570.3h2.7M1412.7 568.9v2.7M1416.6 570.3h2.7M1417.9 568.9v2.7M1408.8 572.9h2.7M1410.1 571.5v2.7M1406.2 575.5h2.7M1407.5 574.1v2.7M1411.4 575.5h2.7M1412.7 574.1v2.7M1416.6 575.5h2.7M1417.9 574.1v2.7M1393.2 590.8h2.7M1394.5 589.4v2.7M1398.4 590.8h2.7M1399.7 589.4v2.7M1403.6 590.8h2.7M1404.9 589.4v2.7M1401 593.4h2.7M1402.3 592v2.7M1406.2 593.4h2.7M1407.5 592v2.7M1411.4 593.4h2.7M1412.7 592v2.7M1416.6 593.4h2.7M1417.9 592v2.7M1398.4 596h2.7M1399.7 594.6v2.7M1403.6 596h2.7M1404.9 594.6v2.7M1408.8 596h2.7M1410.1 594.6v2.7M1414 596h2.7M1415.3 594.6v2.7M1395.8 598.6h2.7M1397.1 597.2v2.7M1406.2 598.6h2.7M1407.5 597.2v2.7M1411.4 598.6h2.7M1412.7 597.2v2.7M1416.6 598.6h2.7M1417.9 597.2v2.7M1393.2 601.2h2.7M1394.5 599.8v2.7M1398.4 601.2h2.7M1399.7 599.8v2.7M1403.6 601.2h2.7M1404.9 599.8v2.7M1451.5 515.1h2.7M1452.9 513.8v2.7M1438.5 517.7h2.7M1439.9 516.4v2.7M1443.8 517.7h2.7M1445.1 516.4v2.7M1449 517.7h2.7M1450.3 516.4v2.7M1430.8 520.3h2.7M1432.1 519v2.7M1436 520.3h2.7M1437.3 519v2.7M1441.2 520.3h2.7M1442.5 519v2.7M1446.3 520.3h2.7M1447.7 519v2.7M1433.3 522.9h2.7M1434.7 521.5v2.7M1449 522.9h2.7M1450.3 521.5v2.7M1436 525.5h2.7M1437.3 524.1v2.7M1449 528.1h2.7M1450.3 526.8v2.7M1430.8 530.7h2.7M1432.1 529.4v2.7M1436 530.7h2.7M1437.3 529.4v2.7M1451.5 530.7h2.7M1452.9 529.4v2.7M1438.5 533.3h2.7M1439.9 532v2.7M1449 533.3h2.7M1450.3 532v2.7M1430.8 535.9h2.7M1432.1 534.5v2.7M1436 535.9h2.7M1437.3 534.5v2.7M1441.2 535.9h2.7M1442.5 534.5v2.7M1446.3 535.9h2.7M1447.7 534.5v2.7M1433.3 538.5h2.7M1434.7 537.1v2.7M1438.5 538.5h2.7M1439.9 537.1v2.7M1449 538.5h2.7M1450.3 537.1v2.7M1430.8 541.1h2.7M1432.1 539.8v2.7M1436 541.1h2.7M1437.3 539.8v2.7M1441.2 541.1h2.7M1442.5 539.8v2.7M1446.3 541.1h2.7M1447.7 539.8v2.7M1438.5 543.7h2.7M1439.9 542.4v2.7M1449 543.7h2.7M1450.3 542.4v2.7M1430.8 546.3h2.7M1432.1 545v2.7M1436 546.3h2.7M1437.3 545v2.7M1441.2 546.3h2.7M1442.5 545v2.7M1433.3 548.9h2.7M1434.7 547.5v2.7M1449 548.9h2.7M1450.3 547.5v2.7M1451.5 551.5h2.7M1452.9 550.1v2.7M1433.3 554.1h2.7M1434.7 552.8v2.7M1438.5 554.1h2.7M1439.9 552.8v2.7M1443.8 554.1h2.7M1445.1 552.8v2.7M1449 554.1h2.7M1450.3 552.8v2.7M1430.8 556.7h2.7M1432.1 555.4v2.7M1436 556.7h2.7M1437.3 555.4v2.7M1441.2 556.7h2.7M1442.5 555.4v2.7M1433.3 559.3h2.7M1434.7 558v2.7M1443.8 559.3h2.7M1445.1 558v2.7M1430.8 561.9h2.7M1432.1 560.5v2.7M1436 561.9h2.7M1437.3 560.5v2.7M1446.3 561.9h2.7M1447.7 560.5v2.7M1433.3 564.5h2.7M1434.7 563.1v2.7M1438.5 564.5h2.7M1439.9 563.1v2.7M1443.8 564.5h2.7M1445.1 563.1v2.7M1449 564.5h2.7M1450.3 563.1v2.7M1430.8 567.1h2.7M1432.1 565.8v2.7M1436 567.1h2.7M1437.3 565.8v2.7M1446.3 567.1h2.7M1447.7 565.8v2.7M1451.5 567.1h2.7M1452.9 565.8v2.7M1438.5 569.7h2.7M1439.9 568.4v2.7M1443.8 569.7h2.7M1445.1 568.4v2.7M1449 569.7h2.7M1450.3 568.4v2.7M1430.8 572.3h2.7M1432.1 571v2.7M1436 572.3h2.7M1437.3 571v2.7M1446.3 572.3h2.7M1447.7 571v2.7M1451.5 572.3h2.7M1452.9 571v2.7M1433.3 574.9h2.7M1434.7 573.5v2.7M1438.5 574.9h2.7M1439.9 573.5v2.7M1443.8 574.9h2.7M1445.1 573.5v2.7M1436 577.5h2.7M1437.3 576.1v2.7M1451.5 577.5h2.7M1452.9 576.1v2.7M1438.5 580.1h2.7M1439.9 578.8v2.7M1430.8 582.7h2.7M1432.1 581.4v2.7M1441.2 582.7h2.7M1442.5 581.4v2.7M1446.3 582.7h2.7M1447.7 581.4v2.7M1443.8 585.3h2.7M1445.1 584v2.7M1449 585.3h2.7M1450.3 584v2.7M1430.8 587.9h2.7M1432.1 586.5v2.7M1436 587.9h2.7M1437.3 586.5v2.7M1441.2 587.9h2.7M1442.5 586.5v2.7M1451.5 587.9h2.7M1452.9 586.5v2.7M1433.3 590.5h2.7M1434.7 589.1v2.7M1443.8 590.5h2.7M1445.1 589.1v2.7M1449 590.5h2.7M1450.3 589.1v2.7M1430.8 593.1h2.7M1432.1 591.8v2.7M1436 593.1h2.7M1437.3 591.8v2.7M1446.3 593.1h2.7M1447.7 591.8v2.7M1451.5 593.1h2.7M1452.9 591.8v2.7M1433.3 595.7h2.7M1434.7 594.4v2.7M1443.8 595.7h2.7M1445.1 594.4v2.7M1449 595.7h2.7M1450.3 594.4v2.7M1436 598.3h2.7M1437.3 597v2.7M1441.2 598.3h2.7M1442.5 597v2.7M1446.3 598.3h2.7M1447.7 597v2.7M1433.3 600.9h2.7M1434.7 599.5v2.7M1438.5 600.9h2.7M1439.9 599.5v2.7" fill="none" stroke="#ffd93d" stroke-width="1.1"/><path d="M1283.8 503h3M1285.2 501.5v3M1303.2 503h3M1304.8 501.5v3M1345.5 503h3M1347 501.5v3M1352 503h3M1353.5 501.5v3M1280.5 506.2h3M1282 504.8v3M1283.8 506.2h3M1285.2 504.8v3M1329.2 506.2h3M1330.8 504.8v3M1355.2 506.2h3M1356.8 504.8v3M1322.8 509.5h3M1324.2 508v3M1361.8 509.5h3M1363.2 508v3M1306.5 512.8h3M1308 511.2v3M1326 519.2h3M1327.5 517.8v3M1303.2 522.5h3M1304.8 521v3M1339 522.5h3M1340.5 521v3M1313 525.8h3M1314.5 524.2v3M1322.8 525.8h3M1324.2 524.2v3M1287 529h3M1288.5 527.5v3M1326 529h3M1327.5 527.5v3M1290.2 532.2h3M1291.8 530.8v3M1316.2 532.2h3M1317.8 530.8v3M1322.8 532.2h3M1324.2 530.8v3M1319.5 535.5h3M1321 534v3M1326 535.5h3M1327.5 534v3M1332.5 535.5h3M1334 534v3M1342.2 535.5h3M1343.8 534v3M1345.5 535.5h3M1347 534v3M1287 538.8h3M1288.5 537.2v3M1309.8 538.8h3M1311.2 537.2v3M1322.8 538.8h3M1324.2 537.2v3M1329.2 538.8h3M1330.8 537.2v3M1342.2 538.8h3M1343.8 537.2v3M1287 542h3M1288.5 540.5v3M1306.5 542h3M1308 540.5v3M1319.5 542h3M1321 540.5v3M1326 542h3M1327.5 540.5v3M1332.5 542h3M1334 540.5v3M1339 542h3M1340.5 540.5v3M1293.5 545.2h3M1295 543.8v3M1316.2 545.2h3M1317.8 543.8v3M1322.8 545.2h3M1324.2 543.8v3M1329.2 545.2h3M1330.8 543.8v3M1335.8 545.2h3M1337.2 543.8v3M1348.8 545.2h3M1350.2 543.8v3M1306.5 548.5h3M1308 547v3M1313 548.5h3M1314.5 547v3M1326 548.5h3M1327.5 547v3M1332.5 548.5h3M1334 547v3M1339 548.5h3M1340.5 547v3M1355.2 548.5h3M1356.8 547v3M1316.2 551.8h3M1317.8 550.2v3M1322.8 551.8h3M1324.2 550.2v3M1329.2 551.8h3M1330.8 550.2v3M1335.8 551.8h3M1337.2 550.2v3M1358.5 551.8h3M1360 550.2v3M1319.5 555h3M1321 553.5v3M1326 555h3M1327.5 553.5v3M1339 555h3M1340.5 553.5v3M1290.2 558.2h3M1291.8 556.8v3M1309.8 558.2h3M1311.2 556.8v3M1316.2 558.2h3M1317.8 556.8v3M1329.2 558.2h3M1330.8 556.8v3M1342.2 558.2h3M1343.8 556.8v3M1316.2 564.8h3M1317.8 563.2v3M1361.8 564.8h3M1363.2 563.2v3M1358.5 568h3M1360 566.5v3M1309.8 571.2h3M1311.2 569.8v3M1290.2 574.5h3M1291.8 573v3M1316.2 574.5h3M1317.8 573v3M1306.5 577.8h3M1308 576.2v3M1280.5 581h3M1282 579.5v3M1293.5 581h3M1295 579.5v3M1335.8 581h3M1337.2 579.5v3M1348.8 581h3M1350.2 579.5v3M1393.2 514.6h2.7M1394.5 513.2v2.7M1395.8 517.2h2.7M1397.1 515.9v2.7M1411.4 517.2h2.7M1412.7 515.9v2.7M1416.6 517.2h2.7M1417.9 515.9v2.7M1408.8 519.8h2.7M1410.1 518.5v2.7M1416.6 522.4h2.7M1417.9 521v2.7M1414 541.7h2.7M1415.3 540.4v2.7M1395.8 544.3h2.7M1397.1 542.9v2.7M1416.6 544.3h2.7M1417.9 542.9v2.7M1408.8 546.9h2.7M1410.1 545.5v2.7M1406.2 549.5h2.7M1407.5 548.1v2.7M1403.6 552.1h2.7M1404.9 550.8v2.7M1408.8 552.1h2.7M1410.1 550.8v2.7M1395.8 554.7h2.7M1397.1 553.4v2.7M1403.6 557.3h2.7M1404.9 555.9v2.7M1408.8 557.3h2.7M1410.1 555.9v2.7M1414 557.3h2.7M1415.3 555.9v2.7M1401 559.9h2.7M1402.3 558.5v2.7M1408.8 562.5h2.7M1410.1 561.1v2.7M1414 562.5h2.7M1415.3 561.1v2.7M1395.8 565.1h2.7M1397.1 563.8v2.7M1406.2 565.1h2.7M1407.5 563.8v2.7M1419.2 567.7h2.7M1420.5 566.4v2.7M1401 570.3h2.7M1402.3 568.9v2.7M1393.2 572.9h2.7M1394.5 571.5v2.7M1398.4 572.9h2.7M1399.7 571.5v2.7M1403.6 572.9h2.7M1404.9 571.5v2.7M1414 572.9h2.7M1415.3 571.5v2.7M1419.2 572.9h2.7M1420.5 571.5v2.7M1395.8 575.5h2.7M1397.1 574.1v2.7M1401 575.5h2.7M1402.3 574.1v2.7M1408.8 590.8h2.7M1410.1 589.4v2.7M1414 590.8h2.7M1415.3 589.4v2.7M1419.2 590.8h2.7M1420.5 589.4v2.7M1395.8 593.4h2.7M1397.1 592v2.7M1408.8 601.2h2.7M1410.1 599.8v2.7M1414 601.2h2.7M1415.3 599.8v2.7M1419.2 601.2h2.7M1420.5 599.8v2.7M1430.8 515.1h2.7M1432.1 513.8v2.7M1436 515.1h2.7M1437.3 513.8v2.7M1441.2 515.1h2.7M1442.5 513.8v2.7M1451.5 520.3h2.7M1452.9 519v2.7M1438.5 522.9h2.7M1439.9 521.5v2.7M1443.8 522.9h2.7M1445.1 521.5v2.7M1430.8 525.5h2.7M1432.1 524.1v2.7M1446.3 525.5h2.7M1447.7 524.1v2.7M1451.5 525.5h2.7M1452.9 524.1v2.7M1433.3 528.1h2.7M1434.7 526.8v2.7M1438.5 528.1h2.7M1439.9 526.8v2.7M1441.2 530.7h2.7M1442.5 529.4v2.7M1446.3 530.7h2.7M1447.7 529.4v2.7M1443.8 533.3h2.7M1445.1 532v2.7M1451.5 541.1h2.7M1452.9 539.8v2.7M1443.8 543.7h2.7M1445.1 542.4v2.7M1451.5 546.3h2.7M1452.9 545v2.7M1438.5 548.9h2.7M1439.9 547.5v2.7M1430.8 551.5h2.7M1432.1 550.1v2.7M1436 551.5h2.7M1437.3 550.1v2.7M1441.2 551.5h2.7M1442.5 550.1v2.7M1446.3 551.5h2.7M1447.7 550.1v2.7M1446.3 556.7h2.7M1447.7 555.4v2.7M1451.5 556.7h2.7M1452.9 555.4v2.7M1438.5 559.3h2.7M1439.9 558v2.7M1449 559.3h2.7M1450.3 558v2.7M1441.2 572.3h2.7M1442.5 571v2.7M1449 574.9h2.7M1450.3 573.5v2.7M1441.2 577.5h2.7M1442.5 576.1v2.7M1446.3 577.5h2.7M1447.7 576.1v2.7M1443.8 580.1h2.7M1445.1 578.8v2.7M1449 580.1h2.7M1450.3 578.8v2.7M1436 582.7h2.7M1437.3 581.4v2.7M1451.5 582.7h2.7M1452.9 581.4v2.7M1433.3 585.3h2.7M1434.7 584v2.7M1438.5 585.3h2.7M1439.9 584v2.7M1446.3 587.9h2.7M1447.7 586.5v2.7M1438.5 590.5h2.7M1439.9 589.1v2.7M1441.2 593.1h2.7M1442.5 591.8v2.7M1438.5 595.7h2.7M1439.9 594.4v2.7M1451.5 598.3h2.7M1452.9 597v2.7M1443.8 600.9h2.7M1445.1 599.5v2.7M1449 600.9h2.7M1450.3 599.5v2.7" fill="none" stroke="#8a8a8a" stroke-width="1.1"/><path d="M1316.2 503h3M1317.8 501.5v3M1361.8 503h3M1363.2 501.5v3M1316.2 506.2h3M1317.8 504.8v3M1339 506.2h3M1340.5 504.8v3M1358.5 506.2h3M1360 504.8v3M1332.5 512.8h3M1334 511.2v3M1313 519.2h3M1314.5 517.8v3M1352 525.8h3M1353.5 524.2v3M1355.2 529h3M1356.8 527.5v3M1345.5 538.8h3M1347 537.2v3M1296.8 545.2h3M1298.2 543.8v3M1352 551.8h3M1353.5 550.2v3M1306.5 555h3M1308 553.5v3M1309.8 555h3M1311.2 553.5v3M1283.8 564.8h3M1285.2 563.2v3M1342.2 568h3M1343.8 566.5v3M1280.5 571.2h3M1282 569.8v3M1287 574.5h3M1288.5 573v3M1306.5 574.5h3M1308 573v3M1355.2 574.5h3M1356.8 573v3M1303.2 577.8h3M1304.8 576.2v3M1361.8 581h3M1363.2 579.5v3M1408.8 514.6h2.7M1410.1 513.2v2.7M1406.2 522.4h2.7M1407.5 521v2.7M1398.4 536.5h2.7M1399.7 535.1v2.7M1416.6 539.1h2.7M1417.9 537.8v2.7M1398.4 541.7h2.7M1399.7 540.4v2.7M1403.6 541.7h2.7M1404.9 540.4v2.7M1395.8 549.5h2.7M1397.1 548.1v2.7M1411.4 554.7h2.7M1412.7 553.4v2.7M1406.2 559.9h2.7M1407.5 558.5v2.7M1393.2 562.5h2.7M1394.5 561.1v2.7M1406.2 570.3h2.7M1407.5 568.9v2.7M1393.2 596h2.7M1394.5 594.6v2.7M1419.2 596h2.7M1420.5 594.6v2.7M1401 598.6h2.7M1402.3 597.2v2.7M1446.3 515.1h2.7M1447.7 513.8v2.7M1433.3 517.7h2.7M1434.7 516.4v2.7M1441.2 525.5h2.7M1442.5 524.1v2.7M1443.8 528.1h2.7M1445.1 526.8v2.7M1433.3 533.3h2.7M1434.7 532v2.7M1451.5 535.9h2.7M1452.9 534.5v2.7M1443.8 538.5h2.7M1445.1 537.1v2.7M1433.3 543.7h2.7M1434.7 542.4v2.7M1446.3 546.3h2.7M1447.7 545v2.7M1443.8 548.9h2.7M1445.1 547.5v2.7M1441.2 561.9h2.7M1442.5 560.5v2.7M1451.5 561.9h2.7M1452.9 560.5v2.7M1441.2 567.1h2.7M1442.5 565.8v2.7M1433.3 569.7h2.7M1434.7 568.4v2.7M1430.8 577.5h2.7M1432.1 576.1v2.7M1433.3 580.1h2.7M1434.7 578.8v2.7M1430.8 598.3h2.7M1432.1 597v2.7" fill="none" stroke="#0b7c80" stroke-width="1.1"/><path d="M1389.5 511.4h69.1v93.1h-69.1z" fill="none" stroke="#f4f4f4" stroke-width="0.9"/><circle cx="1373" cy="584" r="2.4" fill="#0000ff"/><circle cx="1374" cy="594" r="2.4" fill="#0000ff"/><path d="M1296.4 616.4h25.2v19.2h-25.2z" fill="none" stroke="#f4f4f4" stroke-width="0.8"/><path d="M1298.4 619.8h2.6M1299.7 618.5v2.6M1313.9 622.9h2.6M1315.2 621.6v2.6M1298.4 626h2.6M1299.7 624.7v2.6M1301.5 629.1h2.6M1302.8 627.8v2.6M1304.6 632.2h2.6M1305.9 630.9v2.6" fill="none" stroke="#8a8a8a" stroke-width="1.1"/><path d="M1301.5 619.8h2.6M1302.8 618.5v2.6M1304.6 619.8h2.6M1305.9 618.5v2.6M1307.7 619.8h2.6M1309 618.5v2.6M1310.8 619.8h2.6M1312.1 618.5v2.6M1313.9 619.8h2.6M1315.2 618.5v2.6M1317 619.8h2.6M1318.3 618.5v2.6M1298.4 622.9h2.6M1299.7 621.6v2.6M1301.5 622.9h2.6M1302.8 621.6v2.6M1304.6 622.9h2.6M1305.9 621.6v2.6M1307.7 622.9h2.6M1309 621.6v2.6M1310.8 622.9h2.6M1312.1 621.6v2.6M1317 622.9h2.6M1318.3 621.6v2.6M1301.5 626h2.6M1302.8 624.7v2.6M1304.6 626h2.6M1305.9 624.7v2.6M1307.7 626h2.6M1309 624.7v2.6M1310.8 626h2.6M1312.1 624.7v2.6M1313.9 626h2.6M1315.2 624.7v2.6M1317 626h2.6M1318.3 624.7v2.6M1298.4 629.1h2.6M1299.7 627.8v2.6M1304.6 629.1h2.6M1305.9 627.8v2.6M1307.7 629.1h2.6M1309 627.8v2.6M1310.8 629.1h2.6M1312.1 627.8v2.6M1313.9 629.1h2.6M1315.2 627.8v2.6M1317 629.1h2.6M1318.3 627.8v2.6M1298.4 632.2h2.6M1299.7 630.9v2.6M1301.5 632.2h2.6M1302.8 630.9v2.6M1307.7 632.2h2.6M1309 630.9v2.6M1310.8 632.2h2.6M1312.1 630.9v2.6M1313.9 632.2h2.6M1315.2 630.9v2.6M1317 632.2h2.6M1318.3 630.9v2.6" fill="none" stroke="#ffd93d" stroke-width="1.1"/><circle cx="1308" cy="623" r="2.3" fill="#0000ff"/><path d="M1342.4 620.4h11.2v15.2h-11.2z" fill="none" stroke="#f4f4f4" stroke-width="0.8"/><path d="M1343.6 623.4h2.6M1344.9 622v2.6M1343.6 629.6h2.6M1344.9 628.2v2.6M1349.8 629.6h2.6M1351.1 628.2v2.6" fill="none" stroke="#8a8a8a" stroke-width="1.1"/><path d="M1346.7 623.4h2.6M1348 622v2.6M1349.8 623.4h2.6M1351.1 622v2.6M1343.6 626.5h2.6M1344.9 625.1v2.6M1346.7 626.5h2.6M1348 625.1v2.6M1349.8 626.5h2.6M1351.1 625.1v2.6M1346.7 629.6h2.6M1348 628.2v2.6M1343.6 632.6h2.6M1344.9 631.3v2.6M1346.7 632.6h2.6M1348 631.3v2.6M1349.8 632.6h2.6M1351.1 631.3v2.6" fill="none" stroke="#ffd93d" stroke-width="1.1"/><circle cx="1348" cy="628" r="2.3" fill="#0000ff"/><path d="M1392 482.9h1.1v1.2h-1.1zM1394.6 489.9h1.5v2.1h-1.5zM1399.9 482.9h2.2v2.1h-2.2zM1281 479.9h2.1v1.5h-2.1zM1281 482.6h2.1v1.5h-2.1zM1352.6 492.9h1.5v2.1h-1.5zM1447 491.9h1.1v1.2h-1.1zM1390.9 493.9h2.2v2.1h-2.2zM1451 488.6h2.1v1.5h-2.1zM1281 485.9h2.1v1.5h-2.1zM1281 488.6h2.1v1.5h-2.1zM1392 479.9h1.1v1.2h-1.1zM1444.9 485.9h2.2v2.1h-2.2zM1350 487.9h1.5v2.1h-1.5zM1352.6 487.9h1.5v2.1h-1.5zM1335 483.9h1.1v1.2h-1.1zM1404 478.9h1.5v2.1h-1.5zM1406.6 478.9h1.5v2.1h-1.5zM1287.6 484.9h1.5v2.1h-1.5zM1388.6 489.9h1.5v2.1h-1.5zM1335 478.9h2.2v2.1h-2.2zM1353.9 477.9h2.2v2.1h-2.2zM1344 487.9h1.5v2.1h-1.5zM1464 489.9h2.1v1.5h-2.1zM1343 478.9h1.1v1.2h-1.1zM1343 480.9h1.1v1.2h-1.1zM1328 483.9h2.1v1.5h-2.1zM1356 488.9h1.1v1.2h-1.1zM1368 478.9h1.1v1.2h-1.1zM1368 480.9h1.1v1.2h-1.1zM1296.6 479.9h1.5v2.1h-1.5zM1456 482.9h1.5v2.1h-1.5zM1458.6 482.9h1.5v2.1h-1.5zM1459.9 495.9h2.2v2.1h-2.2zM1328 478.9h1.1v1.2h-1.1zM1451 491.9h1.1v1.2h-1.1zM1293 484.9h2.1v1.5h-2.1zM1293 487.6h2.1v1.5h-2.1zM1313.6 495.9h1.5v2.1h-1.5zM1310 489.9h1.5v2.1h-1.5zM1312.6 489.9h1.5v2.1h-1.5zM1340 487.9h1.1v1.2h-1.1zM1315.6 479.9h1.5v2.1h-1.5zM1368 489.9h1.5v2.1h-1.5zM1370.6 489.9h1.5v2.1h-1.5zM1229.6 616.6h20.9v19.9h-20.9z" fill="#8a8a8a"/><path d="M1392 484.9h1.1v1.2h-1.1zM1392 489.9h1.5v2.1h-1.5zM1396 482.9h2.2v2.1h-2.2zM1399 489.9h1.5v2.1h-1.5zM1401.6 489.9h1.5v2.1h-1.5zM1398 478.9h1.5v2.1h-1.5zM1400.6 478.9h1.5v2.1h-1.5zM1386 482.9h1.5v2.1h-1.5zM1388.6 482.9h1.5v2.1h-1.5zM1386 478.9h1.5v2.1h-1.5zM1388.6 478.9h1.5v2.1h-1.5zM1350 492.9h1.5v2.1h-1.5zM1447 489.9h1.1v1.2h-1.1zM1387 493.9h2.2v2.1h-2.2zM1380 478.9h1.5v2.1h-1.5zM1382.6 478.9h1.5v2.1h-1.5zM1395 493.9h1.5v2.1h-1.5zM1397.6 493.9h1.5v2.1h-1.5zM1382 484.9h2.1v1.5h-2.1zM1382 487.6h2.1v1.5h-2.1zM1451 485.9h2.1v1.5h-2.1zM1456 486.9h1.1v1.2h-1.1zM1456 488.9h1.1v1.2h-1.1zM1392 477.9h1.1v1.2h-1.1zM1274 485.9h1.5v2.1h-1.5zM1276.6 485.9h1.5v2.1h-1.5zM1441 485.9h2.2v2.1h-2.2zM1401 493.9h1.1v1.2h-1.1zM1401 495.9h1.1v1.2h-1.1zM1285 479.9h2.2v2.1h-2.2zM1288.9 479.9h2.2v2.1h-2.2zM1382 491.9h2.1v1.5h-2.1zM1382 494.6h2.1v1.5h-2.1zM1335 485.9h1.1v1.2h-1.1zM1285 484.9h1.5v2.1h-1.5zM1386 489.9h1.5v2.1h-1.5zM1350 481.9h1.5v2.1h-1.5zM1352.6 481.9h1.5v2.1h-1.5zM1338.9 478.9h2.2v2.1h-2.2zM1350 477.9h2.2v2.1h-2.2zM1456 491.9h1.5v2.1h-1.5zM1458.6 491.9h1.5v2.1h-1.5zM1346.6 487.9h1.5v2.1h-1.5zM1356 492.9h2.1v1.5h-2.1zM1356 495.6h2.1v1.5h-2.1zM1464 492.6h2.1v1.5h-2.1zM1404 482.9h1.1v1.2h-1.1zM1404 484.9h1.1v1.2h-1.1zM1328 486.6h2.1v1.5h-2.1zM1358 477.9h1.1v1.2h-1.1zM1358 479.9h1.1v1.2h-1.1zM1468 490.9h1.1v1.2h-1.1zM1468 492.9h1.1v1.2h-1.1zM1356 486.9h1.1v1.2h-1.1zM1322 485.9h1.5v2.1h-1.5zM1324.6 485.9h1.5v2.1h-1.5zM1362 477.9h2.1v1.5h-2.1zM1362 480.6h2.1v1.5h-2.1zM1468 485.9h1.5v2.1h-1.5zM1470.6 485.9h1.5v2.1h-1.5zM1322 489.9h1.5v2.1h-1.5zM1324.6 489.9h1.5v2.1h-1.5zM1408 482.9h1.1v1.2h-1.1zM1408 484.9h1.1v1.2h-1.1zM1395 477.9h1.1v1.2h-1.1zM1395 479.9h1.1v1.2h-1.1zM1294 479.9h1.5v2.1h-1.5zM1456 495.9h2.2v2.1h-2.2zM1471 489.9h1.1v1.2h-1.1zM1471 491.9h1.1v1.2h-1.1zM1328 480.9h1.1v1.2h-1.1zM1464 495.9h2.2v2.1h-2.2zM1467.9 495.9h2.2v2.1h-2.2zM1362 483.9h2.1v1.5h-2.1zM1362 486.6h2.1v1.5h-2.1zM1319 479.9h2.1v1.5h-2.1zM1319 482.6h2.1v1.5h-2.1zM1451 493.9h1.1v1.2h-1.1zM1304 478.9h1.1v1.2h-1.1zM1304 480.9h1.1v1.2h-1.1zM1462 483.9h2.1v1.5h-2.1zM1462 486.6h2.1v1.5h-2.1zM1311 495.9h1.5v2.1h-1.5zM1317 488.9h1.1v1.2h-1.1zM1317 490.9h1.1v1.2h-1.1zM1430 492.9h2.1v1.5h-2.1zM1430 495.6h2.1v1.5h-2.1zM1340 485.9h1.1v1.2h-1.1zM1313 479.9h1.5v2.1h-1.5zM1323 479.9h1.1v1.2h-1.1zM1323 481.9h1.1v1.2h-1.1zM1230.4 610.5h1.7v3.8h-1.7zM1230.4 638.7h1.7v3.8h-1.7zM1233.9 610.5h1.7v3.8h-1.7zM1233.9 638.7h1.7v3.8h-1.7zM1237.4 610.5h1.7v3.8h-1.7zM1237.4 638.7h1.7v3.8h-1.7zM1240.9 610.5h1.7v3.8h-1.7zM1240.9 638.7h1.7v3.8h-1.7zM1244.3 610.5h1.7v3.8h-1.7zM1244.3 638.7h1.7v3.8h-1.7zM1247.8 610.5h1.7v3.8h-1.7zM1247.8 638.7h1.7v3.8h-1.7zM1252.7 617.4h3.8v1.7h-3.8zM1223.5 620.7h3.8v1.7h-3.8zM1252.7 620.7h3.8v1.7h-3.8zM1223.5 624h3.8v1.7h-3.8zM1252.7 624h3.8v1.7h-3.8zM1223.5 627.3h3.8v1.7h-3.8zM1252.7 627.3h3.8v1.7h-3.8zM1223.5 630.6h3.8v1.7h-3.8zM1252.7 630.6h3.8v1.7h-3.8zM1223.5 634h3.8v1.7h-3.8zM1252.7 634h3.8v1.7h-3.8z" fill="#ffd93d"/><path d="M1223.5 617.4h3.8v1.7h-3.8z" fill="#0b7c80"/><path d="M1391.5 482.5h2v4h-2zM1391.5 489.5h5v3h-5zM1395.5 482.5h7v3h-7zM1398.5 489.5h5v3h-5zM1397.5 478.5h5v3h-5zM1385.5 482.5h5v3h-5zM1385.5 478.5h5v3h-5zM1280.5 479.5h3v5h-3zM1349.5 492.5h5v3h-5zM1446.5 489.5h2v4h-2zM1386.5 493.5h7v3h-7zM1379.5 478.5h5v3h-5zM1394.5 493.5h5v3h-5zM1381.5 484.5h3v5h-3zM1450.5 485.5h3v5h-3zM1455.5 486.5h2v4h-2zM1280.5 485.5h3v5h-3zM1391.5 477.5h2v4h-2zM1273.5 485.5h5v3h-5zM1440.5 485.5h7v3h-7zM1400.5 493.5h2v4h-2zM1349.5 487.5h5v3h-5zM1284.5 479.5h7v3h-7zM1381.5 491.5h3v5h-3zM1334.5 483.5h2v4h-2zM1403.5 478.5h5v3h-5zM1284.5 484.5h5v3h-5zM1385.5 489.5h5v3h-5zM1349.5 481.5h5v3h-5zM1334.5 478.5h7v3h-7zM1349.5 477.5h7v3h-7zM1455.5 491.5h5v3h-5zM1343.5 487.5h5v3h-5zM1355.5 492.5h3v5h-3zM1463.5 489.5h3v5h-3zM1342.5 478.5h2v4h-2zM1403.5 482.5h2v4h-2zM1327.5 483.5h3v5h-3zM1357.5 477.5h2v4h-2zM1467.5 490.5h2v4h-2zM1355.5 486.5h2v4h-2zM1321.5 485.5h5v3h-5zM1361.5 477.5h3v5h-3zM1467.5 485.5h5v3h-5zM1321.5 489.5h5v3h-5zM1407.5 482.5h2v4h-2zM1367.5 478.5h2v4h-2zM1394.5 477.5h2v4h-2zM1293.5 479.5h5v3h-5zM1455.5 482.5h5v3h-5zM1455.5 495.5h7v3h-7zM1470.5 489.5h2v4h-2zM1327.5 478.5h2v4h-2zM1463.5 495.5h7v3h-7zM1361.5 483.5h3v5h-3zM1318.5 479.5h3v5h-3zM1450.5 491.5h2v4h-2zM1292.5 484.5h3v5h-3zM1303.5 478.5h2v4h-2zM1461.5 483.5h3v5h-3zM1310.5 495.5h5v3h-5zM1316.5 488.5h2v4h-2zM1429.5 492.5h3v5h-3zM1309.5 489.5h5v3h-5zM1339.5 485.5h2v4h-2zM1312.5 479.5h5v3h-5zM1322.5 479.5h2v4h-2zM1367.5 489.5h5v3h-5z" fill="none" stroke="#f4f4f4" stroke-width="0.95"/><path d="M1222.5 609.5h35.1v34.1h-35.1z" fill="none" stroke="#f4f4f4" stroke-width="0.9"/><circle cx="1240" cy="626.5" r="2.4" fill="#0000ff"/><path d="M1204 601h15.1v6.9h-15.1zM1204 613.2h15.1v6.9h-15.1zM1215.3 591h4.7v6.1h-4.7zM1233.7 591h4.4v6.1h-4.4zM1259 641h7.1v4.7h-7.1zM1259 649.3h7.1v4.7h-7.1zM1269 641h7.1v4.7h-7.1zM1269 649.3h7.1v4.7h-7.1zM1279 597h14.1v5.4h-14.1zM1279 606.6h14.1v5.4h-14.1zM1288 617h5.1v5.1h-5.1zM1288 627h5.1v5.1h-5.1zM1288 637h5.1v6.1h-5.1zM1288 650h5.1v6.1h-5.1z" fill="#ffd93d"/><path d="M1207 591h4.7v6.1h-4.7zM1226 591h4.4v6.1h-4.4zM1279 617h5.1v5.1h-5.1zM1279 627h5.1v5.1h-5.1zM1279 637h5.1v6.1h-5.1zM1279 650h5.1v6.1h-5.1z" fill="#8a8a8a"/><path d="M1203.5 600.5h16.1v20.1h-16.1zM1206.5 590.5h14.1v7h-14.1zM1225.5 590.5h13.1v7h-13.1zM1258.5 640.5h8.1v14.1h-8.1zM1268.5 640.5h8.1v14.1h-8.1zM1278.5 596.5h15.1v16.1h-15.1zM1278.5 616.5h15.1v6h-15.1zM1278.5 626.5h15.1v6h-15.1zM1278.5 636.5h15.1v7h-15.1zM1278.5 649.5h15.1v7h-15.1z" fill="none" stroke="#f4f4f4" stroke-width="0.95"/><path d="M1188.4 629.9h12.2v9.2h-12.2z" fill="none" stroke="#f4f4f4" stroke-width="0.8"/><path d="M1190.2 633h2.5M1191.5 631.7v2.5M1193.2 633h2.5M1194.5 631.7v2.5M1196.2 633h2.5M1197.5 631.7v2.5M1190.2 636h2.5M1191.5 634.7v2.5M1193.2 636h2.5M1194.5 634.7v2.5M1196.2 636h2.5M1197.5 634.7v2.5" fill="none" stroke="#ffd93d" stroke-width="1.1"/><circle cx="1194.6" cy="634.5" r="2.4" fill="#0000ff"/><path d="M1202 657h17v9h-17z" fill="#ffd93d"/><path d="M1201.5 653.5h18.1v13.1h-18.1z" fill="none" stroke="#f4f4f4" stroke-width="0.9"/><circle cx="1210.5" cy="661.6" r="2.4" fill="#0000ff"/><path d="M1327 631h11v5h-11zM1327 641h11v5h-11z" fill="#ffd93d"/><path d="M1327 636h11v5h-11z" fill="#006934"/><path d="M1326.5 630.5h12.1v16.1h-12.1z" fill="none" stroke="#f4f4f4" stroke-width="0.9"/><circle cx="1332" cy="638.5" r="2.4" fill="#0000ff"/><path d="M1310 606.6 L1312.4 609 L1310 611.4 L1307.6 609 Z" fill="#ffd93d"/><path d="M1318 605.6 L1320.4 608 L1318 610.4 L1315.6 608 Z" fill="#ffd93d"/><path d="M1323 602.6 L1325.4 605 L1323 607.4 L1320.6 605 Z" fill="#ffd93d"/><path d="M1331 601.6 L1333.4 604 L1331 606.4 L1328.6 604 Z" fill="#ffd93d"/><path d="M1363 587.6 L1365.4 590 L1363 592.4 L1360.6 590 Z" fill="#ffd93d"/><path d="M1368 591.6 L1370.4 594 L1368 596.4 L1365.6 594 Z" fill="#ffd93d"/><path d="M1373 594.6 L1375.4 597 L1373 599.4 L1370.6 597 Z" fill="#ffd93d"/><path d="M1396 647h1.2v3.1h-1.2zM1397.8 647h1.2v3.1h-1.2zM1402.4 637h3.6v5.1h-3.6zM1415 624h4.4v6.1h-4.4zM1422.7 624h4.4v6.1h-4.4zM1381 645h3.1v2.6h-3.1zM1381 649.5h3.1v2.6h-3.1zM1416 646h5.1v3.6h-5.1zM1416 652.4h5.1v3.6h-5.1zM1416 658h2.6v3.1h-2.6zM1387 653.4h5.1v3.6h-5.1zM1424 651h2.1v1.8h-2.1zM1424 654.2h2.1v1.8h-2.1zM1400 654h5.1v7.1h-5.1zM1409 654h5.1v7.1h-5.1zM1381 638h1.2v3.1h-1.2zM1411 649h1.2v3.1h-1.2zM1412.8 649h1.2v3.1h-1.2zM1384 662h2.9v4.1h-2.9zM1389.1 662h2.9v4.1h-2.9zM1415 617h2.6v3.1h-2.6zM1419.5 617h2.6v3.1h-2.6zM1408 624h1.8v2.1h-1.8zM1411.2 624h1.8v2.1h-1.8zM1396 632h1.2v3.1h-1.2zM1397.8 632h1.2v3.1h-1.2zM1409.8 628h1.2v3.1h-1.2zM1382 630h2.1v1.8h-2.1zM1382 633.2h2.1v1.8h-2.1zM1382 622h2.9v4.1h-2.9zM1399 619h1.8v2.1h-1.8zM1402.2 619h1.8v2.1h-1.8zM1386 638h1.8v2.1h-1.8zM1401 647h1.2v3.1h-1.2zM1402.8 647h1.2v3.1h-1.2zM1403 630h2.1v1.8h-2.1zM1394 662h1.2v3.1h-1.2zM1395.8 662h1.2v3.1h-1.2zM1386 643h1.8v2.1h-1.8zM1389.2 643h1.8v2.1h-1.8zM1425 658h3.1v2.6h-3.1zM1425 662.5h3.1v2.6h-3.1zM1382 618h1.8v2.1h-1.8zM1385.2 618h1.8v2.1h-1.8zM1416 663h2.6v3.1h-2.6zM1420.5 663h2.6v3.1h-2.6zM1387 633.2h2.1v1.8h-2.1zM1411.2 664h1.8v2.1h-1.8zM1406 617h1.8v2.1h-1.8zM1409.2 617h1.8v2.1h-1.8zM1424 632h1.8v2.1h-1.8zM1427.2 632h1.8v2.1h-1.8zM1416 632h1.8v2.1h-1.8zM1419.2 632h1.8v2.1h-1.8zM1400 623h1.8v2.1h-1.8zM1381 655h1.2v3.1h-1.2zM1382.8 655h1.2v3.1h-1.2zM1445 643h2.1v1.8h-2.1zM1445 646.2h2.1v1.8h-2.1zM1441 643h2.1v1.8h-2.1zM1441 646.2h2.1v1.8h-2.1zM1445 632h3.1v2.6h-3.1zM1450 637h1.8v2.1h-1.8zM1453.2 637h1.8v2.1h-1.8zM1436 627h7.1v5.1h-7.1zM1436 636h7.1v5.1h-7.1zM1309 604h5.1v3.6h-5.1zM1309 610.4h5.1v3.6h-5.1zM1299 604h2.6v3.1h-2.6zM1243 646h7.1v5.1h-7.1zM1452 632h1.2v3.1h-1.2zM1453.8 632h1.2v3.1h-1.2zM1452 627h2.6v3.1h-2.6zM1456.5 627h2.6v3.1h-2.6zM1316 604h4.4v6.1h-4.4zM1323.7 604h4.4v6.1h-4.4zM1296 609h3.6v5.1h-3.6zM1302.4 609h3.6v5.1h-3.6zM1266 617h2.9v4.1h-2.9zM1271.1 617h2.9v4.1h-2.9zM1267 610h2.6v3.1h-2.6zM1271.5 610h2.6v3.1h-2.6zM1335 623.7h6.1v4.4h-6.1zM1272 625h2.1v1.8h-2.1zM1272 628.2h2.1v1.8h-2.1zM1362 624h2.9v4.1h-2.9zM1367.1 624h2.9v4.1h-2.9zM1323 613h1.8v2.1h-1.8zM1326.2 613h1.8v2.1h-1.8zM1259 617h2.1v1.8h-2.1zM1259 620.2h2.1v1.8h-2.1zM1240 663h3.6v5.1h-3.6zM1323 619h3.1v2.6h-3.1zM1323 623.5h3.1v2.6h-3.1zM1362 633h1.8v2.1h-1.8zM1365.2 633h1.8v2.1h-1.8zM1264 624h2.1v1.8h-2.1zM1264 627.2h2.1v1.8h-2.1zM1231 668h1.8v2.1h-1.8zM1231 656h3.6v5.1h-3.6zM1237.4 656h3.6v5.1h-3.6zM1362 638h3.1v2.6h-3.1zM1362 642.5h3.1v2.6h-3.1zM1264 634h3.6v5.1h-3.6zM1270.4 634h3.6v5.1h-3.6zM1366 612h4.1v2.9h-4.1zM1366 617.1h4.1v2.9h-4.1zM1366 601h5.1v7.1h-5.1zM1375 601h5.1v7.1h-5.1zM1267 601h2.6v3.1h-2.6zM1271.5 601h2.6v3.1h-2.6zM1329 621h2.1v1.8h-2.1zM1329 624.2h2.1v1.8h-2.1zM1355.8 638h1.2v3.1h-1.2zM1352 643h1.8v2.1h-1.8zM1355.2 643h1.8v2.1h-1.8zM1255 590h4.1v2.9h-4.1zM1436 645h1.2v3.1h-1.2zM1437.8 645h1.2v3.1h-1.2zM1263 590h2.1v1.8h-2.1zM1263 593.2h2.1v1.8h-2.1zM1343 637h2.6v3.1h-2.6zM1347.5 637h2.6v3.1h-2.6zM1372 624h3.1v2.6h-3.1zM1372 628.5h3.1v2.6h-3.1zM1343 646.5h3.1v2.6h-3.1zM1224 663h1.8v2.1h-1.8zM1227.2 663h1.8v2.1h-1.8zM1301 651h3.6v5.1h-3.6zM1316 612h1.2v3.1h-1.2zM1317.8 612h1.2v3.1h-1.2zM1233 648h2.9v4.1h-2.9zM1206 649h2.6v3.1h-2.6zM1210.5 649h2.6v3.1h-2.6zM1314 654h1.8v2.1h-1.8zM1317.2 654h1.8v2.1h-1.8zM1372 619h2.6v3.1h-2.6zM1376.5 619h2.6v3.1h-2.6zM1376 647h1.2v3.1h-1.2zM1377.8 647h1.2v3.1h-1.2zM1226 667h1.2v3.1h-1.2zM1227.8 667h1.2v3.1h-1.2zM1215 649h1.2v3.1h-1.2zM1216.8 649h1.2v3.1h-1.2zM1215 645h1.8v2.1h-1.8zM1218.2 645h1.8v2.1h-1.8zM1198 649h1.2v3.1h-1.2zM1188 649h2.9v4.1h-2.9zM1193.1 649h2.9v4.1h-2.9zM1215 638h1.2v3.1h-1.2zM1216.8 638h1.2v3.1h-1.2zM1252 663h1.2v3.1h-1.2zM1253.8 663h1.2v3.1h-1.2zM1436 650h2.6v3.1h-2.6zM1440.5 650h2.6v3.1h-2.6zM1196 606h5.1v3.6h-5.1zM1196 612.4h5.1v3.6h-5.1zM1304 644h2.6v3.1h-2.6zM1308.5 644h2.6v3.1h-2.6zM1343 652h3.6v5.1h-3.6zM1349.4 652h3.6v5.1h-3.6zM1209 641.1h4.1v2.9h-4.1zM1196 645h1.8v2.1h-1.8zM1199.2 645h1.8v2.1h-1.8zM1346 612h1.2v3.1h-1.2zM1347.8 612h1.2v3.1h-1.2zM1298 658h3.6v5.1h-3.6zM1304.4 658h3.6v5.1h-3.6zM1362 655h1.2v3.1h-1.2zM1245 595h2.6v3.1h-2.6zM1198 593h3.1v2.6h-3.1zM1198 597.5h3.1v2.6h-3.1zM1357 625h1.2v3.1h-1.2zM1358.8 625h1.2v3.1h-1.2zM1372 612h1.2v3.1h-1.2zM1373.8 612h1.2v3.1h-1.2zM1372 637h2.1v1.8h-2.1zM1372 640.2h2.1v1.8h-2.1zM1294 658h2.1v1.8h-2.1zM1294 661.2h2.1v1.8h-2.1zM1316 639h4.1v2.9h-4.1zM1316 644.1h4.1v2.9h-4.1zM1302.5 665h2.6v3.1h-2.6zM1378 612h1.8v2.1h-1.8zM1381.2 612h1.8v2.1h-1.8zM1247 601h3.6v5.1h-3.6zM1253.4 601h3.6v5.1h-3.6zM1264 657h1.8v2.1h-1.8zM1267.2 657h1.8v2.1h-1.8zM1280 658h3.6v5.1h-3.6zM1331 611h1.2v3.1h-1.2zM1332.8 611h1.2v3.1h-1.2zM1264 662h5.1v7.1h-5.1zM1357 661h2.9v4.1h-2.9zM1362.1 661h2.9v4.1h-2.9zM1223 652h1.8v2.1h-1.8zM1226.2 652h1.8v2.1h-1.8zM1218 668h1.8v2.1h-1.8zM1221.2 668h1.8v2.1h-1.8zM1431 627h3.1v2.6h-3.1zM1206 628h2.6v3.1h-2.6zM1370 661h2.9v4.1h-2.9zM1375.1 661h2.9v4.1h-2.9zM1287 665h1.2v3.1h-1.2zM1288.8 665h1.2v3.1h-1.2zM1322 649h2.6v3.1h-2.6zM1326.5 649h2.6v3.1h-2.6zM1377 629.2h2.1v1.8h-2.1zM1205 642h2.1v1.8h-2.1zM1215 628h4.1v2.9h-4.1zM1215 633.1h4.1v2.9h-4.1zM1431 650h1.2v3.1h-1.2zM1432.8 650h1.2v3.1h-1.2zM1191.8 614h1.2v3.1h-1.2zM1376 652h1.2v3.1h-1.2zM1377.8 652h1.2v3.1h-1.2zM1315 649h1.8v2.1h-1.8zM1448.2 627h1.8v2.1h-1.8zM1357 654h2.1v1.8h-2.1zM1357 657.2h2.1v1.8h-2.1zM1189 606h1.2v3.1h-1.2zM1190.8 606h1.2v3.1h-1.2zM1228 645h2.1v1.8h-2.1zM1190 642h2.1v1.8h-2.1zM1190 645.2h2.1v1.8h-2.1zM1241 595h2.1v1.8h-2.1zM1241 598.2h2.1v1.8h-2.1z" fill="#ffd93d"/><path d="M1396 637h3.6v5.1h-3.6zM1411 637h3.6v5.1h-3.6zM1417.4 637h3.6v5.1h-3.6zM1420.5 658h2.6v3.1h-2.6zM1387 647h5.1v3.6h-5.1zM1382.8 638h1.2v3.1h-1.2zM1424 636h5.1v3.6h-5.1zM1424 642.4h5.1v3.6h-5.1zM1408 628h1.2v3.1h-1.2zM1387.1 622h2.9v4.1h-2.9zM1396 625h2.1v1.8h-2.1zM1396 628.2h2.1v1.8h-2.1zM1389.2 638h1.8v2.1h-1.8zM1403 633.2h2.1v1.8h-2.1zM1387 630h2.1v1.8h-2.1zM1408 664h1.8v2.1h-1.8zM1403.2 623h1.8v2.1h-1.8zM1445 636.5h3.1v2.6h-3.1zM1303.5 604h2.6v3.1h-2.6zM1243 655h7.1v5.1h-7.1zM1431 636h2.1v1.8h-2.1zM1431 639.2h2.1v1.8h-2.1zM1252 646h1.2v3.1h-1.2zM1253.8 646h1.2v3.1h-1.2zM1335 616h6.1v4.4h-6.1zM1246.4 663h3.6v5.1h-3.6zM1259 624h2.1v1.8h-2.1zM1259 627.2h2.1v1.8h-2.1zM1231 663h1.8v2.1h-1.8zM1234.2 663h1.8v2.1h-1.8zM1234.2 668h1.8v2.1h-1.8zM1259 601h6.1v4.4h-6.1zM1259 608.7h6.1v4.4h-6.1zM1362 647h4.4v6.1h-4.4zM1369.7 647h4.4v6.1h-4.4zM1252 651h5.1v3.6h-5.1zM1252 657.4h5.1v3.6h-5.1zM1354 638h1.2v3.1h-1.2zM1352 612h4.4v6.1h-4.4zM1359.7 612h4.4v6.1h-4.4zM1255 595.1h4.1v2.9h-4.1zM1348 643h2.1v1.8h-2.1zM1348 646.2h2.1v1.8h-2.1zM1193 593h1.2v3.1h-1.2zM1194.8 593h1.2v3.1h-1.2zM1343 642h3.1v2.6h-3.1zM1307.4 651h3.6v5.1h-3.6zM1238.1 648h2.9v4.1h-2.9zM1357 647h1.2v3.1h-1.2zM1358.8 647h1.2v3.1h-1.2zM1372 633h1.8v2.1h-1.8zM1375.2 633h1.8v2.1h-1.8zM1199.8 649h1.2v3.1h-1.2zM1221 656h2.6v3.1h-2.6zM1225.5 656h2.6v3.1h-2.6zM1209 636h4.1v2.9h-4.1zM1223 645h1.2v3.1h-1.2zM1224.8 645h1.2v3.1h-1.2zM1188 657h3.6v5.1h-3.6zM1194.4 657h3.6v5.1h-3.6zM1363.8 655h1.2v3.1h-1.2zM1249.5 595h2.6v3.1h-2.6zM1249 590h1.2v3.1h-1.2zM1250.8 590h1.2v3.1h-1.2zM1337 612h1.8v2.1h-1.8zM1340.2 612h1.8v2.1h-1.8zM1189 598h2.6v3.1h-2.6zM1193.5 598h2.6v3.1h-2.6zM1298 665h2.6v3.1h-2.6zM1202 636h1.8v2.1h-1.8zM1205.2 636h1.8v2.1h-1.8zM1271 657h1.8v2.1h-1.8zM1274.2 657h1.8v2.1h-1.8zM1286.4 658h3.6v5.1h-3.6zM1309 639h1.2v3.1h-1.2zM1310.8 639h1.2v3.1h-1.2zM1273 662h5.1v7.1h-5.1zM1322 642h2.1v1.8h-2.1zM1322 645.2h2.1v1.8h-2.1zM1431 631.5h3.1v2.6h-3.1zM1210.5 628h2.6v3.1h-2.6zM1377 626h2.1v1.8h-2.1zM1205 645.2h2.1v1.8h-2.1zM1190 614h1.2v3.1h-1.2zM1355 633h1.8v2.1h-1.8zM1358.2 633h1.8v2.1h-1.8zM1318.2 649h1.8v2.1h-1.8zM1445 627h1.8v2.1h-1.8zM1228 648.2h2.1v1.8h-2.1z" fill="#8a8a8a"/><path d="M1395.5 646.5h4v4h-4zM1395.5 636.5h11.1v6h-11.1zM1410.5 636.5h11.1v6h-11.1zM1414.5 623.5h13.1v7h-13.1zM1380.5 644.5h4v8.1h-4zM1415.5 645.5h6v11.1h-6zM1415.5 657.5h8.1v4h-8.1zM1386.5 646.5h6v11.1h-6zM1423.5 650.5h3v6h-3zM1399.5 653.5h15.1v8.1h-15.1zM1380.5 637.5h4v4h-4zM1423.5 635.5h6v11.1h-6zM1410.5 648.5h4v4h-4zM1383.5 661.5h9.1v5h-9.1zM1414.5 616.5h8.1v4h-8.1zM1407.5 623.5h6v3h-6zM1395.5 631.5h4v4h-4zM1407.5 627.5h4v4h-4zM1381.5 629.5h3v6h-3zM1381.5 621.5h9.1v5h-9.1zM1398.5 618.5h6v3h-6zM1395.5 624.5h3v6h-3zM1385.5 637.5h6v3h-6zM1400.5 646.5h4v4h-4zM1402.5 629.5h3v6h-3zM1393.5 661.5h4v4h-4zM1385.5 642.5h6v3h-6zM1424.5 657.5h4v8.1h-4zM1381.5 617.5h6v3h-6zM1415.5 662.5h8.1v4h-8.1zM1386.5 629.5h3v6h-3zM1407.5 663.5h6v3h-6zM1405.5 616.5h6v3h-6zM1423.5 631.5h6v3h-6zM1415.5 631.5h6v3h-6zM1399.5 622.5h6v3h-6zM1380.5 654.5h4v4h-4zM1444.5 642.5h3v6h-3zM1440.5 642.5h3v6h-3zM1444.5 631.5h4v8.1h-4zM1449.5 636.5h6v3h-6zM1435.5 626.5h8.1v15.1h-8.1zM1308.5 603.5h6v11.1h-6zM1298.5 603.5h8.1v4h-8.1zM1242.5 645.5h8.1v15.1h-8.1zM1451.5 631.5h4v4h-4zM1451.5 626.5h8.1v4h-8.1zM1315.5 603.5h13.1v7h-13.1zM1295.5 608.5h11.1v6h-11.1zM1265.5 616.5h9.1v5h-9.1zM1430.5 635.5h3v6h-3zM1251.5 645.5h4v4h-4zM1266.5 609.5h8.1v4h-8.1zM1334.5 615.5h7v13.1h-7zM1271.5 624.5h3v6h-3zM1361.5 623.5h9.1v5h-9.1zM1322.5 612.5h6v3h-6zM1258.5 616.5h3v6h-3zM1239.5 662.5h11.1v6h-11.1zM1322.5 618.5h4v8.1h-4zM1361.5 632.5h6v3h-6zM1258.5 623.5h3v6h-3zM1263.5 623.5h3v6h-3zM1230.5 662.5h6v3h-6zM1230.5 667.5h6v3h-6zM1230.5 655.5h11.1v6h-11.1zM1361.5 637.5h4v8.1h-4zM1263.5 633.5h11.1v6h-11.1zM1365.5 611.5h5v9.1h-5zM1365.5 600.5h15.1v8.1h-15.1zM1258.5 600.5h7v13.1h-7zM1266.5 600.5h8.1v4h-8.1zM1361.5 646.5h13.1v7h-13.1zM1328.5 620.5h3v6h-3zM1251.5 650.5h6v11.1h-6zM1353.5 637.5h4v4h-4zM1351.5 642.5h6v3h-6zM1351.5 611.5h13.1v7h-13.1zM1254.5 589.5h5v9.1h-5zM1435.5 644.5h4v4h-4zM1262.5 589.5h3v6h-3zM1347.5 642.5h3v6h-3zM1192.5 592.5h4v4h-4zM1342.5 636.5h8.1v4h-8.1zM1371.5 623.5h4v8.1h-4zM1342.5 641.5h4v8.1h-4zM1223.5 662.5h6v3h-6zM1300.5 650.5h11.1v6h-11.1zM1315.5 611.5h4v4h-4zM1232.5 647.5h9.1v5h-9.1zM1205.5 648.5h8.1v4h-8.1zM1313.5 653.5h6v3h-6zM1356.5 646.5h4v4h-4zM1371.5 618.5h8.1v4h-8.1zM1375.5 646.5h4v4h-4zM1371.5 632.5h6v3h-6zM1225.5 666.5h4v4h-4zM1214.5 648.5h4v4h-4zM1214.5 644.5h6v3h-6zM1197.5 648.5h4v4h-4zM1187.5 648.5h9.1v5h-9.1zM1214.5 637.5h4v4h-4zM1251.5 662.5h4v4h-4zM1435.5 649.5h8.1v4h-8.1zM1195.5 605.5h6v11.1h-6zM1303.5 643.5h8.1v4h-8.1zM1342.5 651.5h11.1v6h-11.1zM1220.5 655.5h8.1v4h-8.1zM1208.5 635.5h5v9.1h-5zM1222.5 644.5h4v4h-4zM1195.5 644.5h6v3h-6zM1187.5 656.5h11.1v6h-11.1zM1345.5 611.5h4v4h-4zM1297.5 657.5h11.1v6h-11.1zM1361.5 654.5h4v4h-4zM1244.5 594.5h8.1v4h-8.1zM1197.5 592.5h4v8.1h-4zM1248.5 589.5h4v4h-4zM1356.5 624.5h4v4h-4zM1336.5 611.5h6v3h-6zM1188.5 597.5h8.1v4h-8.1zM1371.5 611.5h4v4h-4zM1371.5 636.5h3v6h-3zM1293.5 657.5h3v6h-3zM1315.5 638.5h5v9.1h-5zM1297.5 664.5h8.1v4h-8.1zM1377.5 611.5h6v3h-6zM1201.5 635.5h6v3h-6zM1246.5 600.5h11.1v6h-11.1zM1263.5 656.5h6v3h-6zM1270.5 656.5h6v3h-6zM1279.5 657.5h11.1v6h-11.1zM1308.5 638.5h4v4h-4zM1330.5 610.5h4v4h-4zM1263.5 661.5h15.1v8.1h-15.1zM1356.5 660.5h9.1v5h-9.1zM1222.5 651.5h6v3h-6zM1217.5 667.5h6v3h-6zM1321.5 641.5h3v6h-3zM1430.5 626.5h4v8.1h-4zM1205.5 627.5h8.1v4h-8.1zM1369.5 660.5h9.1v5h-9.1zM1286.5 664.5h4v4h-4zM1321.5 648.5h8.1v4h-8.1zM1376.5 625.5h3v6h-3zM1204.5 641.5h3v6h-3zM1214.5 627.5h5v9.1h-5zM1430.5 649.5h4v4h-4zM1189.5 613.5h4v4h-4zM1375.5 651.5h4v4h-4zM1354.5 632.5h6v3h-6zM1314.5 648.5h6v3h-6zM1444.5 626.5h6v3h-6zM1356.5 653.5h3v6h-3zM1188.5 605.5h4v4h-4zM1227.5 644.5h3v6h-3zM1189.5 641.5h3v6h-3zM1240.5 594.5h3v6h-3z" fill="none" stroke="#f4f4f4" stroke-width="0.95"/><path d="M1018 602 Q1018 597 1020.5 595 L1020.5 595 Q1023 593 1028 593 L1073 593 Q1078 593 1082.9 592.2 L1121.1 585.8 Q1126 585 1131 585 L1166 585 Q1171 585 1173.5 587.5 L1173.5 587.5 Q1176 590 1176 595 L1176 642 Q1176 647 1173.5 650 L1173.5 650 Q1171 653 1166 653 L1131 653 Q1126 653 1122 656 L1122 656 Q1118 659 1115.4 663.3 L1112.6 667.7 Q1110 672 1107 673.5 L1107 673.5 Q1104 675 1099 675 L1047 675 Q1042 675 1038 672 L1025 662 Q1021 659 1019.5 655 L1019.5 655 Q1018 651 1018 646 Z" fill="none" stroke="#dedede" stroke-width="2.6"/><path d="M1118 615.5h2v4h-2zM1118 635.5h2v4h-2zM1116.5 618h4v2h-4zM1136.5 618h4v2h-4zM1121.8 615.5h2v4h-2zM1121.8 635.5h2v4h-2zM1116.5 621.8h4v2h-4zM1136.5 621.8h4v2h-4zM1125.6 615.5h2v4h-2zM1125.6 635.5h2v4h-2zM1116.5 625.6h4v2h-4zM1136.5 625.6h4v2h-4zM1129.4 615.5h2v4h-2zM1129.4 635.5h2v4h-2zM1116.5 629.4h4v2h-4zM1136.5 629.4h4v2h-4zM1133.2 615.5h2v4h-2zM1133.2 635.5h2v4h-2zM1116.5 633.2h4v2h-4zM1136.5 633.2h4v2h-4zM1137 615.5h2v4h-2zM1137 635.5h2v4h-2zM1116.5 637h4v2h-4zM1136.5 637h4v2h-4zM1029 611h2v2.5h-2zM1029 620.5h2v2.5h-2zM1032.8 611h2v2.5h-2zM1032.8 620.5h2v2.5h-2zM1036.6 611h2v2.5h-2zM1036.6 620.5h2v2.5h-2zM1040.4 611h2v2.5h-2zM1040.4 620.5h2v2.5h-2z" fill="#ffd93d"/><path d="M1029 614h14v6h-14z" fill="#8a8a8a"/><path d="M1115.5 614.5h26.1v26.1h-26.1zM1027.5 610.5h17.1v13.1h-17.1z" fill="none" stroke="#f4f4f4" stroke-width="0.9"/><circle cx="1036" cy="617" r="2.4" fill="#0000ff"/><path d="M1047 648h18v20h-18zM1047 642h4v5h-4zM1053.5 642h4v5h-4zM1060 642h5v5h-5zM1071 647h18v18h-18z" fill="#ffd93d"/><path d="M1046.5 641.5h19.1v27.1h-19.1zM1070.5 646.5h19.1v19.1h-19.1z" fill="none" stroke="#f4f4f4" stroke-width="0.9"/><circle cx="1080.4" cy="656.5" r="2.4" fill="#0000ff"/><path d="M1092 649h4.1v2.6h-4.1zM1092 653.5h4.1v2.6h-4.1zM1092 663.5h4.1v2.6h-4.1z" fill="#ffd93d"/><path d="M1092 659h4.1v2.6h-4.1z" fill="#8a8a8a"/><path d="M1091.5 648.5h5v8.1h-5zM1091.5 658.5h5v8.1h-5z" fill="none" stroke="#f4f4f4" stroke-width="0.95"/><circle cx="1096" cy="658.5" r="2.3" fill="#0000ff"/><path d="M1027 626h9.1v5.1h-9.1z" fill="#8a8a8a"/><path d="M1027 635h9.1v5.1h-9.1zM1031 651h6.1v6.5h-6.1zM1031 662.5h6.1v6.5h-6.1z" fill="#ffd93d"/><path d="M1026.5 625.5h10.1v15.1h-10.1zM1030.5 650.5h7v19.1h-7z" fill="none" stroke="#f4f4f4" stroke-width="0.95"/><path d="M1163 660 L1168 665 L1163 670 L1158 665 Z" fill="#8a8a8a"/><path d="M1154 631h2.9v4.1h-2.9zM1159.1 631h2.9v4.1h-2.9zM1166 631h1.2v3.1h-1.2zM1167.8 631h1.2v3.1h-1.2zM1154 615h7.1v5.1h-7.1zM1154 624h7.1v5.1h-7.1zM1146 615h6.1v4.4h-6.1zM1146 622.7h6.1v4.4h-6.1zM1136 603h1.8v2.1h-1.8zM1139.2 603h1.8v2.1h-1.8zM1099 608h4.4v6.1h-4.4zM1104 601h2.6v3.1h-2.6zM1108.5 601h2.6v3.1h-2.6zM1154 611h1.8v2.1h-1.8zM1157.2 611h1.8v2.1h-1.8zM1124 593h1.8v2.1h-1.8zM1127.2 593h1.8v2.1h-1.8zM1163 611h2.1v1.8h-2.1zM1163 614.2h2.1v1.8h-2.1zM1136 608h1.8v2.1h-1.8zM1099 624.7h6.1v4.4h-6.1zM1116 601h5.1v7.1h-5.1zM1125 601h5.1v7.1h-5.1zM1149 603h2.6v3.1h-2.6zM1153.5 603h2.6v3.1h-2.6zM1163 599h5.1v3.6h-5.1zM1163 605.4h5.1v3.6h-5.1zM1149 640h2.6v3.1h-2.6zM1153.5 640h2.6v3.1h-2.6zM1052 632h2.6v3.1h-2.6zM1061 632h1.8v2.1h-1.8zM1052 615h6.1v4.4h-6.1zM1052 622.7h6.1v4.4h-6.1zM1079 620h4.1v2.9h-4.1zM1079 625.1h4.1v2.9h-4.1zM1060 615h4.4v6.1h-4.4zM1061 628h1.8v2.1h-1.8zM1064.2 628h1.8v2.1h-1.8zM1083 600h2.6v3.1h-2.6zM1087.5 600h2.6v3.1h-2.6zM1052 609.4h5.1v3.6h-5.1zM1091 617h6.1v4.4h-6.1zM1091 624.7h6.1v4.4h-6.1zM1061 636h1.2v3.1h-1.2zM1062.8 636h1.2v3.1h-1.2zM1043 628h4.1v2.9h-4.1zM1043 633.1h4.1v2.9h-4.1zM1073 600h1.8v2.1h-1.8zM1076.2 600h1.8v2.1h-1.8zM1059 600h3.6v5.1h-3.6zM1065.4 600h3.6v5.1h-3.6zM1072 608h2.6v3.1h-2.6zM1076.5 608h2.6v3.1h-2.6zM1059 607h2.1v1.8h-2.1zM1059 610.2h2.1v1.8h-2.1zM1138 596h2.9v4.1h-2.9zM1143.1 596h2.9v4.1h-2.9zM1104 594h2.1v1.8h-2.1zM1104 597.2h2.1v1.8h-2.1zM1077 640.7h6.1v4.4h-6.1zM1149 596h2.9v4.1h-2.9zM1132 601h2.1v1.8h-2.1zM1132 604.2h2.1v1.8h-2.1zM1068 642h2.6v3.1h-2.6zM1145 638h2.1v1.8h-2.1zM1091 638h5.1v7.1h-5.1zM1100 638h5.1v7.1h-5.1zM1067 608h1.2v3.1h-1.2zM1068.8 608h1.2v3.1h-1.2zM1109.8 595h1.2v3.1h-1.2zM1167 612h3.1v2.6h-3.1zM1167 616.5h3.1v2.6h-3.1zM1070 636.5h3.1v2.6h-3.1zM1114 595h1.8v2.1h-1.8zM1164.8 594h1.2v3.1h-1.2zM1132 590h4.1v2.9h-4.1zM1132 595.1h4.1v2.9h-4.1zM1145 631h2.1v1.8h-2.1zM1107 634h1.2v3.1h-1.2zM1108.8 634h1.2v3.1h-1.2zM1107 628h1.2v3.1h-1.2zM1108.8 628h1.2v3.1h-1.2zM1158 639h4.1v2.9h-4.1zM1158 644.1h4.1v2.9h-4.1zM1093 601h2.6v3.1h-2.6zM1097.5 601h2.6v3.1h-2.6zM1110.2 617h1.8v2.1h-1.8zM1099 631h2.1v1.8h-2.1zM1087 623h2.1v1.8h-2.1zM1087 626.2h2.1v1.8h-2.1zM1087 613h2.1v1.8h-2.1zM1087 616.2h2.1v1.8h-2.1zM1107 642h4.1v2.9h-4.1zM1107 647.1h4.1v2.9h-4.1zM1113 647.1h4.1v2.9h-4.1zM1142.5 589h2.6v3.1h-2.6zM1130 642h2.9v4.1h-2.9zM1085 640h2.1v1.8h-2.1zM1140 642h1.2v3.1h-1.2zM1141.8 642h1.2v3.1h-1.2zM1166 639h3.1v2.6h-3.1zM1166 643.5h3.1v2.6h-3.1zM1061 623h1.2v3.1h-1.2zM1026 643h4.4v6.1h-4.4zM1033.7 643h4.4v6.1h-4.4zM1104 652h2.6v3.1h-2.6zM1108.5 652h2.6v3.1h-2.6zM1043 599h1.8v2.1h-1.8zM1046.2 599h1.8v2.1h-1.8zM1098 594h2.1v1.8h-2.1zM1098 597.2h2.1v1.8h-2.1zM1048 608h2.1v1.8h-2.1zM1107 621h2.6v3.1h-2.6zM1040 642h3.1v2.6h-3.1zM1040 646.5h3.1v2.6h-3.1zM1158 603h1.2v3.1h-1.2zM1159.8 603h1.2v3.1h-1.2zM1046 616h4.1v2.9h-4.1zM1116 610h1.2v3.1h-1.2zM1042 638h1.8v2.1h-1.8zM1045.2 638h1.8v2.1h-1.8zM1149 589h1.2v3.1h-1.2zM1150.8 589h1.2v3.1h-1.2zM1052 599h1.8v2.1h-1.8zM1051 638h1.8v2.1h-1.8zM1054.2 638h1.8v2.1h-1.8zM1123 642h1.8v2.1h-1.8zM1126.2 642h1.8v2.1h-1.8zM1040 652h5.1v3.6h-5.1zM1038 628h3.1v2.6h-3.1zM1038 632.5h3.1v2.6h-3.1zM1151 645h1.8v2.1h-1.8zM1156 589h1.8v2.1h-1.8zM1085 630h3.1v2.6h-3.1zM1124 597h1.8v2.1h-1.8zM1127.2 597h1.8v2.1h-1.8z" fill="#ffd93d"/><path d="M1166 621h4.1v2.9h-4.1zM1166 626.1h4.1v2.9h-4.1zM1149 631h3.1v2.6h-3.1zM1149 635.5h3.1v2.6h-3.1zM1106.7 608h4.4v6.1h-4.4zM1092 608h2.1v1.8h-2.1zM1092 611.2h2.1v1.8h-2.1zM1139.2 608h1.8v2.1h-1.8zM1099 617h6.1v4.4h-6.1zM1143 603h1.2v3.1h-1.2zM1144.8 603h1.2v3.1h-1.2zM1146 611h1.8v2.1h-1.8zM1149.2 611h1.8v2.1h-1.8zM1056.5 632h2.6v3.1h-2.6zM1064.2 632h1.8v2.1h-1.8zM1067.7 615h4.4v6.1h-4.4zM1083 608h2.6v3.1h-2.6zM1087.5 608h2.6v3.1h-2.6zM1052 603h5.1v3.6h-5.1zM1043 603h1.8v2.1h-1.8zM1046.2 603h1.8v2.1h-1.8zM1077 633h6.1v4.4h-6.1zM1154.1 596h2.9v4.1h-2.9zM1072.5 642h2.6v3.1h-2.6zM1145 641.2h2.1v1.8h-2.1zM1108 595h1.2v3.1h-1.2zM1070 632h3.1v2.6h-3.1zM1117.2 595h1.8v2.1h-1.8zM1163 594h1.2v3.1h-1.2zM1145 634.2h2.1v1.8h-2.1zM1068 627h2.6v3.1h-2.6zM1072.5 627h2.6v3.1h-2.6zM1023 600h4.4v6.1h-4.4zM1030.7 600h4.4v6.1h-4.4zM1107 617h1.8v2.1h-1.8zM1099 634.2h2.1v1.8h-2.1zM1113 642h4.1v2.9h-4.1zM1138 589h2.6v3.1h-2.6zM1135.1 642h2.9v4.1h-2.9zM1085 643.2h2.1v1.8h-2.1zM1091 634h1.8v2.1h-1.8zM1094.2 634h1.8v2.1h-1.8zM1062.8 623h1.2v3.1h-1.2zM1038 600h2.1v1.8h-2.1zM1038 603.2h2.1v1.8h-2.1zM1048 611.2h2.1v1.8h-2.1zM1111.5 621h2.6v3.1h-2.6zM1046 621.1h4.1v2.9h-4.1zM1159 593h2.1v1.8h-2.1zM1159 596.2h2.1v1.8h-2.1zM1074 615h2.6v3.1h-2.6zM1078.5 615h2.6v3.1h-2.6zM1117.8 610h1.2v3.1h-1.2zM1055.2 599h1.8v2.1h-1.8zM1040 658.4h5.1v3.6h-5.1zM1104 657h2.6v3.1h-2.6zM1108.5 657h2.6v3.1h-2.6zM1122 610h2.6v3.1h-2.6zM1126.5 610h2.6v3.1h-2.6zM1154.2 645h1.8v2.1h-1.8zM1159.2 589h1.8v2.1h-1.8zM1085 634.5h3.1v2.6h-3.1z" fill="#8a8a8a"/><path d="M1153.5 630.5h9.1v5h-9.1zM1165.5 630.5h4v4h-4zM1165.5 620.5h5v9.1h-5zM1153.5 614.5h8.1v15.1h-8.1zM1148.5 630.5h4v8.1h-4zM1145.5 614.5h7v13.1h-7zM1135.5 602.5h6v3h-6zM1098.5 607.5h13.1v7h-13.1zM1103.5 600.5h8.1v4h-8.1zM1153.5 610.5h6v3h-6zM1123.5 592.5h6v3h-6zM1091.5 607.5h3v6h-3zM1162.5 610.5h3v6h-3zM1135.5 607.5h6v3h-6zM1098.5 616.5h7v13.1h-7zM1142.5 602.5h4v4h-4zM1115.5 600.5h15.1v8.1h-15.1zM1148.5 602.5h8.1v4h-8.1zM1145.5 610.5h6v3h-6zM1162.5 598.5h6v11.1h-6zM1148.5 639.5h8.1v4h-8.1zM1051.5 631.5h8.1v4h-8.1zM1060.5 631.5h6v3h-6zM1051.5 614.5h7v13.1h-7zM1078.5 619.5h5v9.1h-5zM1059.5 614.5h13.1v7h-13.1zM1082.5 607.5h8.1v4h-8.1zM1060.5 627.5h6v3h-6zM1082.5 599.5h8.1v4h-8.1zM1051.5 602.5h6v11.1h-6zM1090.5 616.5h7v13.1h-7zM1060.5 635.5h4v4h-4zM1042.5 627.5h5v9.1h-5zM1072.5 599.5h6v3h-6zM1058.5 599.5h11.1v6h-11.1zM1071.5 607.5h8.1v4h-8.1zM1058.5 606.5h3v6h-3zM1137.5 595.5h9.1v5h-9.1zM1042.5 602.5h6v3h-6zM1103.5 593.5h3v6h-3zM1076.5 632.5h7v13.1h-7zM1148.5 595.5h9.1v5h-9.1zM1131.5 600.5h3v6h-3zM1067.5 641.5h8.1v4h-8.1zM1144.5 637.5h3v6h-3zM1090.5 637.5h15.1v8.1h-15.1zM1066.5 607.5h4v4h-4zM1107.5 594.5h4v4h-4zM1166.5 611.5h4v8.1h-4zM1069.5 631.5h4v8.1h-4zM1113.5 594.5h6v3h-6zM1162.5 593.5h4v4h-4zM1131.5 589.5h5v9.1h-5zM1144.5 630.5h3v6h-3zM1067.5 626.5h8.1v4h-8.1zM1106.5 633.5h4v4h-4zM1106.5 627.5h4v4h-4zM1157.5 638.5h5v9.1h-5zM1092.5 600.5h8.1v4h-8.1zM1022.5 599.5h13.1v7h-13.1zM1106.5 616.5h6v3h-6zM1098.5 630.5h3v6h-3zM1086.5 622.5h3v6h-3zM1086.5 612.5h3v6h-3zM1106.5 641.5h5v9.1h-5zM1112.5 641.5h5v9.1h-5zM1137.5 588.5h8.1v4h-8.1zM1129.5 641.5h9.1v5h-9.1zM1084.5 639.5h3v6h-3zM1090.5 633.5h6v3h-6zM1139.5 641.5h4v4h-4zM1165.5 638.5h4v8.1h-4zM1060.5 622.5h4v4h-4zM1025.5 642.5h13.1v7h-13.1zM1103.5 651.5h8.1v4h-8.1zM1042.5 598.5h6v3h-6zM1037.5 599.5h3v6h-3zM1097.5 593.5h3v6h-3zM1047.5 607.5h3v6h-3zM1106.5 620.5h8.1v4h-8.1zM1039.5 641.5h4v8.1h-4zM1157.5 602.5h4v4h-4zM1045.5 615.5h5v9.1h-5zM1158.5 592.5h3v6h-3zM1073.5 614.5h8.1v4h-8.1zM1115.5 609.5h4v4h-4zM1041.5 637.5h6v3h-6zM1148.5 588.5h4v4h-4zM1051.5 598.5h6v3h-6zM1050.5 637.5h6v3h-6zM1122.5 641.5h6v3h-6zM1039.5 651.5h6v11.1h-6zM1037.5 627.5h4v8.1h-4zM1103.5 656.5h8.1v4h-8.1zM1121.5 609.5h8.1v4h-8.1zM1150.5 644.5h6v3h-6zM1155.5 588.5h6v3h-6zM1084.5 629.5h4v8.1h-4zM1123.5 596.5h6v3h-6z" fill="none" stroke="#f4f4f4" stroke-width="0.95"/><circle cx="1045" cy="387" r="8.2" fill="#fff" stroke="#8a8a8a" stroke-width="2.4"/><circle cx="1152" cy="419" r="8.2" fill="#fff" stroke="#8a8a8a" stroke-width="2.4"/><circle cx="1277" cy="369" r="8.2" fill="#fff" stroke="#8a8a8a" stroke-width="2.4"/><circle cx="1288" cy="451" r="8.2" fill="#fff" stroke="#8a8a8a" stroke-width="2.4"/><circle cx="1468" cy="462" r="8.2" fill="#fff" stroke="#8a8a8a" stroke-width="2.4"/><circle cx="999" cy="590" r="8.2" fill="#fff" stroke="#8a8a8a" stroke-width="2.4"/><circle cx="1009" cy="669" r="8.2" fill="#fff" stroke="#8a8a8a" stroke-width="2.4"/><circle cx="1129" cy="669" r="8.2" fill="#fff" stroke="#8a8a8a" stroke-width="2.4"/><circle cx="1329" cy="669" r="8.2" fill="#fff" stroke="#8a8a8a" stroke-width="2.4"/><circle cx="1468" cy="669" r="8.2" fill="#fff" stroke="#8a8a8a" stroke-width="2.4"/><path d="M1177 420h13v10h-13zM1202 420h13v10h-13zM1227 420h13v10h-13zM1216 405h13v10h-13zM1241 405h13v10h-13zM990 610h14v10h-14zM990 639h14v9h-14zM1442 636h9v14h-9zM1271 338h5v5h-5zM1279 338h5v5h-5z" fill="#ffd93d"/><path d="M1251 421h14v8h-14zM988 398h9v14h-9zM990 625h14v9h-14zM1292 342h20v19h-20zM1476 405h9v14h-9zM1464 636h10v14h-10z" fill="#8a8a8a"/><path d="M1271 345h4v4h-4zM1279 345h4v4h-4z" fill="#0b7c80"/><path d="M1268.5 335.4h18.1v16.1h-18.1z" fill="none" stroke="#f4f4f4" stroke-width="0.9"/><ellipse cx="1105" cy="401" rx="3.5" ry="8.5" fill="#ffd93d"/><path d="M1105 398.8 L1107.2 401 L1105 403.2 L1102.8 401 Z" fill="#ffffff"/><ellipse cx="1122" cy="415.5" rx="10.5" ry="3.5" fill="#ffd93d"/><path d="M1122 413.3 L1124.2 415.5 L1122 417.7 L1119.8 415.5 Z" fill="#ffffff"/><ellipse cx="1199" cy="401" rx="3.5" ry="7.5" fill="#ffd93d"/><path d="M1199 398.8 L1201.2 401 L1199 403.2 L1196.8 401 Z" fill="#ffffff"/><ellipse cx="755.5" cy="401" rx="3.5" ry="7.5" fill="#ffd93d"/><path d="M755.5 398.8 L757.7 401 L755.5 403.2 L753.3 401 Z" fill="#ffffff"/><ellipse cx="832.5" cy="415.3" rx="10.5" ry="3.5" fill="#ffd93d"/><path d="M832.5 413.1 L834.7 415.3 L832.5 417.5 L830.3 415.3 Z" fill="#ffffff"/><ellipse cx="848" cy="401" rx="3.5" ry="8.5" fill="#ffd93d"/><path d="M848 398.8 L850.2 401 L848 403.2 L845.8 401 Z" fill="#ffffff"/><ellipse cx="994" cy="459" rx="6.5" ry="3" fill="#8a8a8a"/><path d="M994 456.8 L996.2 459 L994 461.2 L991.8 459 Z" fill="#ffffff"/><ellipse cx="994" cy="569" rx="6.5" ry="3" fill="#8a8a8a"/><path d="M994 566.8 L996.2 569 L994 571.2 L991.8 569 Z" fill="#ffffff"/><ellipse cx="961" cy="569" rx="6.5" ry="3" fill="#8a8a8a"/><path d="M961 566.8 L963.2 569 L961 571.2 L958.8 569 Z" fill="#ffffff"/><ellipse cx="1472.5" cy="439.5" rx="3.5" ry="4.5" fill="#8a8a8a"/><path d="M1472.5 437.3 L1474.7 439.5 L1472.5 441.7 L1470.3 439.5 Z" fill="#ffffff"/><path d="M1329 460.6 L1331.4 463 L1329 465.4 L1326.6 463 Z" fill="#ffd93d"/><path d="M1335 460.6 L1337.4 463 L1335 465.4 L1332.6 463 Z" fill="#ffd93d"/><path d="M1109 423h14v9h-14z" fill="#8a8a8a"/><path d="M1484 472.5 L1489.5 478 L1484 483.5 L1478.5 478 Z" fill="#8a8a8a"/><path d="M966 397 L972 403 L966 409 L960 403 Z" fill="#8a8a8a"/><path d="M1424 692 L1424 692 L1424 692 L1424 692 Z" fill="#8a8a8a"/><path d="M1290 637 L1290 637 L1290 637 L1290 637 Z" fill="#ffd93d"/></svg><div class="a" style="left:643.5px;top:257.0px;width:120px;height:18px;line-height:18px;text-align:center;font-size:16.5px;color:rgba(200,195,170,.75);transform:rotate(-45deg);white-space:nowrap">XZZ@XZZHK</div><div class="a" style="left:1093.0px;top:257.0px;width:120px;height:18px;line-height:18px;text-align:center;font-size:16.5px;color:rgba(200,195,170,.75);transform:rotate(-45deg);white-space:nowrap">XZZ@XZZHK</div><div class="a" style="left:641.0px;top:662.0px;width:120px;height:18px;line-height:18px;text-align:center;font-size:16.5px;color:rgba(200,195,170,.75);transform:rotate(-45deg);white-space:nowrap">XZZ@XZZHK</div><div class="a" style="left:1087.0px;top:663.0px;width:120px;height:18px;line-height:18px;text-align:center;font-size:16.5px;color:rgba(200,195,170,.75);transform:rotate(-45deg);white-space:nowrap">XZZ@XZZHK</div></div></div>
</body></html>
